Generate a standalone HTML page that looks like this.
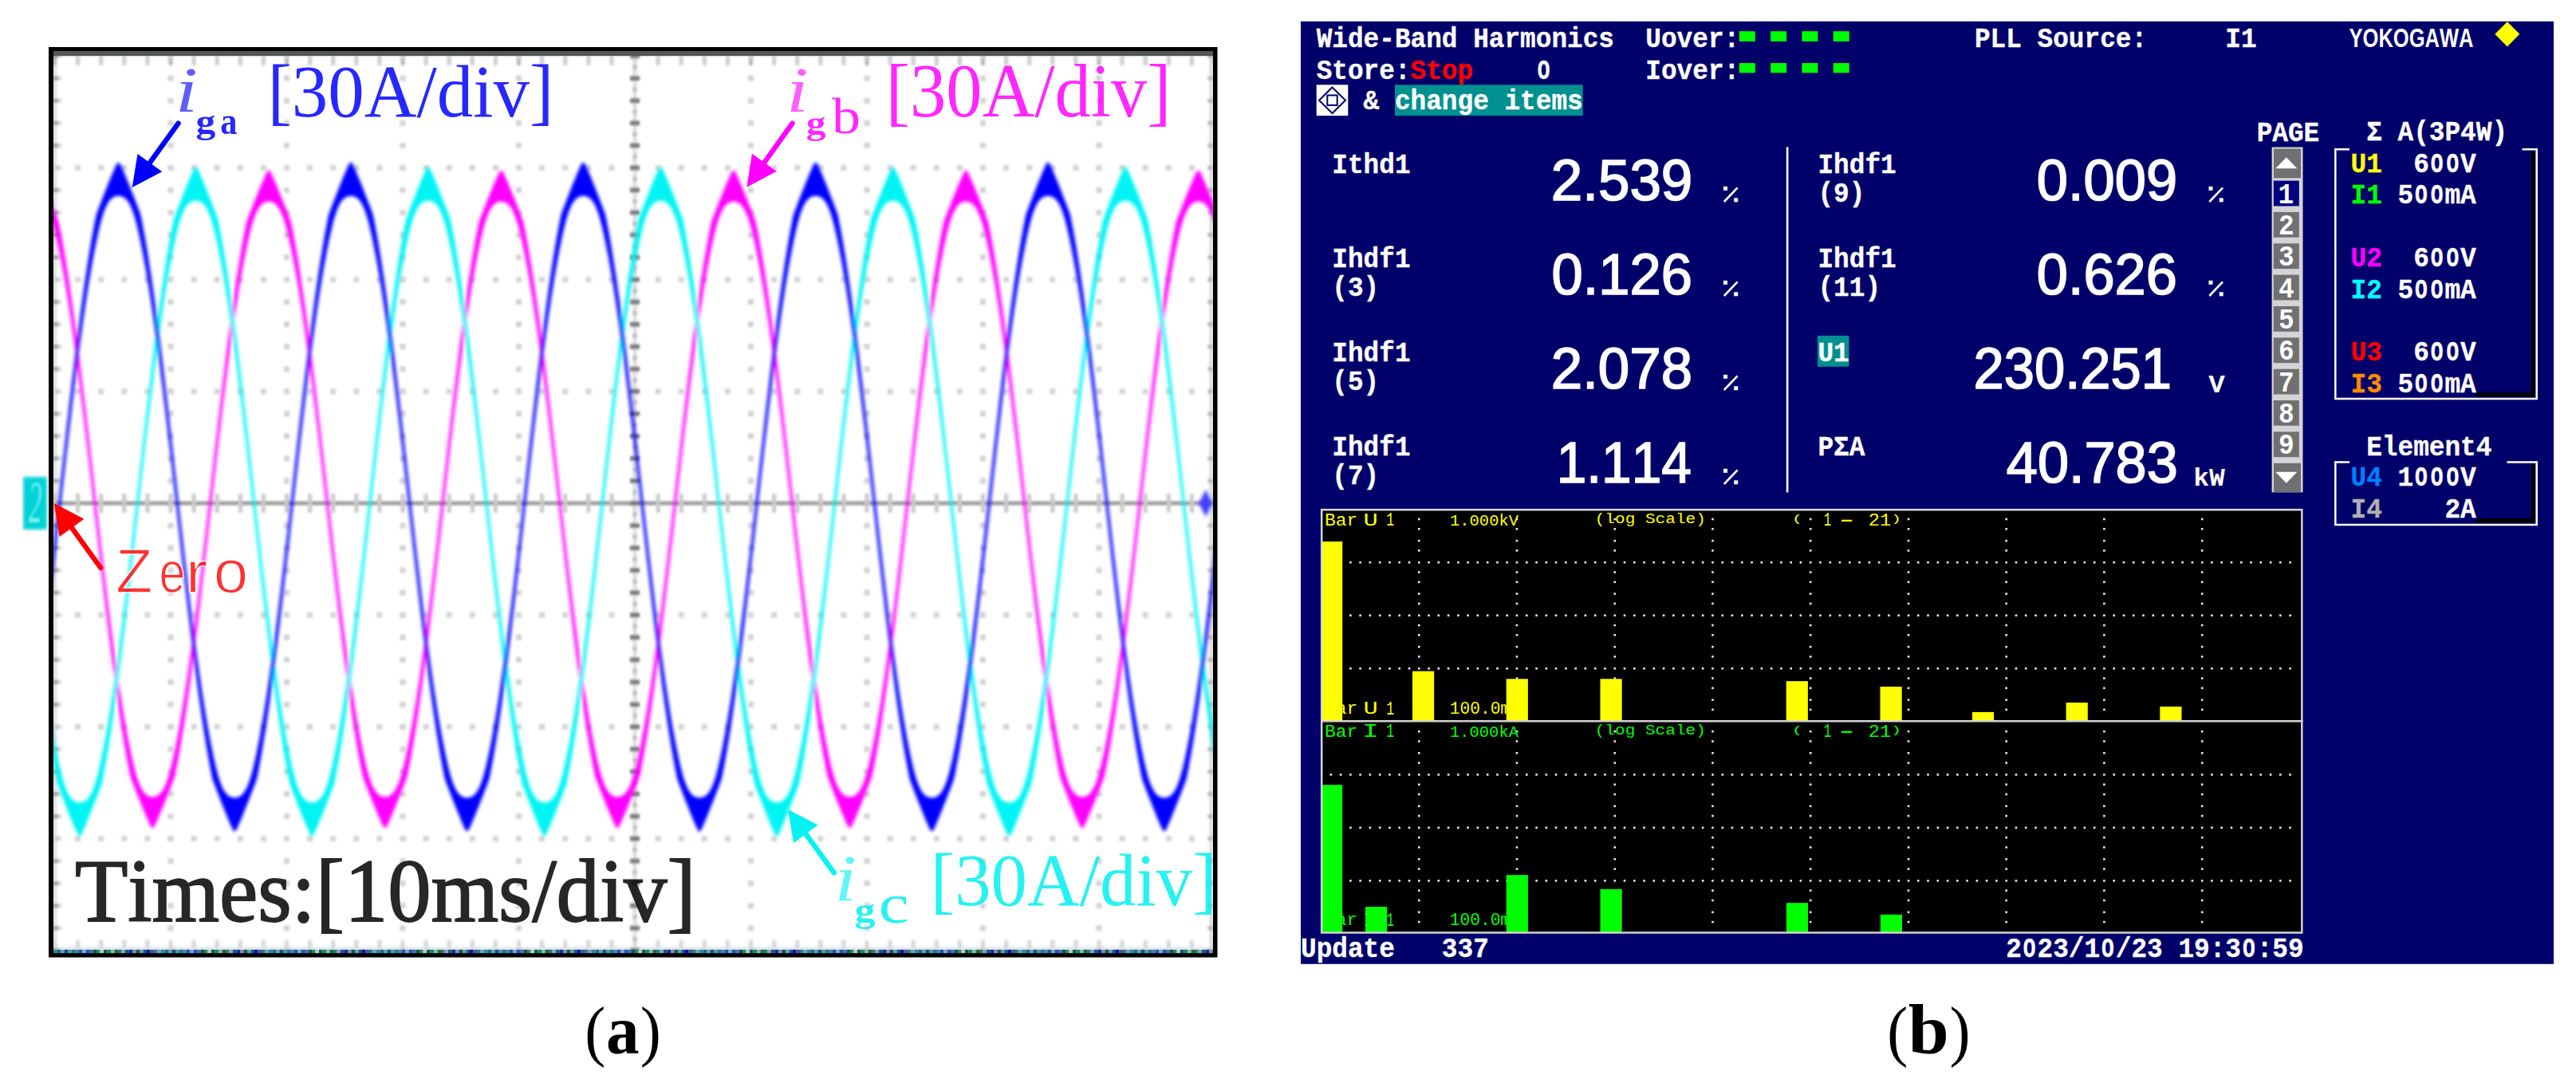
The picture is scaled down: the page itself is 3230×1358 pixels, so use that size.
<!DOCTYPE html>
<html><head><meta charset="utf-8"><title>figure</title>
<style>html,body{margin:0;padding:0;background:#fff}svg{display:block}text{font-kerning:none}</style></head><body>
<svg width="3230" height="1358" viewBox="0 0 3230 1358">
<defs><filter id="b2" x="-2%" y="-2%" width="104%" height="104%"><feGaussianBlur stdDeviation="2.2"/></filter><filter id="b1" x="-2%" y="-2%" width="104%" height="104%"><feGaussianBlur stdDeviation="1.4"/></filter><filter id="b3" x="-5%" y="-5%" width="110%" height="110%"><feGaussianBlur stdDeviation="0.7"/></filter><clipPath id="scope"><rect x="67" y="64" width="1454" height="1131"/></clipPath></defs>
<rect width="3230" height="1358" fill="#fff"/>
<g id="scopepanel">
<rect x="61" y="59" width="1465.5" height="1141.5" fill="#000"/>
<rect x="67" y="64" width="1454" height="1131" fill="#fff"/>
<g clip-path="url(#scope)"><g filter="url(#b1)"><rect x="60" y="1187.5" width="1470" height="4" fill="#dbe6ec"/><rect x="66" y="64" width="5.5" height="1131" fill="#e2e4e4"/><rect x="1516.5" y="64" width="5" height="1131" fill="#dcdcdc"/><rect x="66.0" y="70" width="5" height="12" fill="#b4b4b4"/><rect x="66.0" y="1179" width="5" height="10" fill="#d6d6d6"/><rect x="95.1" y="70" width="5" height="12" fill="#cccccc"/><rect x="95.1" y="1179" width="5" height="10" fill="#d6d6d6"/><rect x="124.2" y="70" width="5" height="12" fill="#cccccc"/><rect x="124.2" y="1179" width="5" height="10" fill="#d6d6d6"/><rect x="153.3" y="70" width="5" height="12" fill="#cccccc"/><rect x="153.3" y="1179" width="5" height="10" fill="#d6d6d6"/><rect x="182.4" y="70" width="5" height="12" fill="#cccccc"/><rect x="182.4" y="1179" width="5" height="10" fill="#d6d6d6"/><rect x="211.5" y="70" width="5" height="12" fill="#b4b4b4"/><rect x="211.5" y="1179" width="5" height="10" fill="#d6d6d6"/><rect x="240.6" y="70" width="5" height="12" fill="#cccccc"/><rect x="240.6" y="1179" width="5" height="10" fill="#d6d6d6"/><rect x="269.7" y="70" width="5" height="12" fill="#cccccc"/><rect x="269.7" y="1179" width="5" height="10" fill="#d6d6d6"/><rect x="298.8" y="70" width="5" height="12" fill="#cccccc"/><rect x="298.8" y="1179" width="5" height="10" fill="#d6d6d6"/><rect x="327.9" y="70" width="5" height="12" fill="#cccccc"/><rect x="327.9" y="1179" width="5" height="10" fill="#d6d6d6"/><rect x="357.0" y="70" width="5" height="12" fill="#b4b4b4"/><rect x="357.0" y="1179" width="5" height="10" fill="#d6d6d6"/><rect x="386.1" y="70" width="5" height="12" fill="#cccccc"/><rect x="386.1" y="1179" width="5" height="10" fill="#d6d6d6"/><rect x="415.2" y="70" width="5" height="12" fill="#cccccc"/><rect x="415.2" y="1179" width="5" height="10" fill="#d6d6d6"/><rect x="444.3" y="70" width="5" height="12" fill="#cccccc"/><rect x="444.3" y="1179" width="5" height="10" fill="#d6d6d6"/><rect x="473.4" y="70" width="5" height="12" fill="#cccccc"/><rect x="473.4" y="1179" width="5" height="10" fill="#d6d6d6"/><rect x="502.5" y="70" width="5" height="12" fill="#b4b4b4"/><rect x="502.5" y="1179" width="5" height="10" fill="#d6d6d6"/><rect x="531.6" y="70" width="5" height="12" fill="#cccccc"/><rect x="531.6" y="1179" width="5" height="10" fill="#d6d6d6"/><rect x="560.7" y="70" width="5" height="12" fill="#cccccc"/><rect x="560.7" y="1179" width="5" height="10" fill="#d6d6d6"/><rect x="589.8" y="70" width="5" height="12" fill="#cccccc"/><rect x="589.8" y="1179" width="5" height="10" fill="#d6d6d6"/><rect x="618.9" y="70" width="5" height="12" fill="#cccccc"/><rect x="618.9" y="1179" width="5" height="10" fill="#d6d6d6"/><rect x="648.0" y="70" width="5" height="12" fill="#b4b4b4"/><rect x="648.0" y="1179" width="5" height="10" fill="#d6d6d6"/><rect x="677.1" y="70" width="5" height="12" fill="#cccccc"/><rect x="677.1" y="1179" width="5" height="10" fill="#d6d6d6"/><rect x="706.2" y="70" width="5" height="12" fill="#cccccc"/><rect x="706.2" y="1179" width="5" height="10" fill="#d6d6d6"/><rect x="735.3" y="70" width="5" height="12" fill="#cccccc"/><rect x="735.3" y="1179" width="5" height="10" fill="#d6d6d6"/><rect x="764.4" y="70" width="5" height="12" fill="#cccccc"/><rect x="764.4" y="1179" width="5" height="10" fill="#d6d6d6"/><rect x="793.5" y="70" width="5" height="12" fill="#b4b4b4"/><rect x="793.5" y="1179" width="5" height="10" fill="#d6d6d6"/><rect x="822.6" y="70" width="5" height="12" fill="#cccccc"/><rect x="822.6" y="1179" width="5" height="10" fill="#d6d6d6"/><rect x="851.7" y="70" width="5" height="12" fill="#cccccc"/><rect x="851.7" y="1179" width="5" height="10" fill="#d6d6d6"/><rect x="880.8" y="70" width="5" height="12" fill="#cccccc"/><rect x="880.8" y="1179" width="5" height="10" fill="#d6d6d6"/><rect x="909.9" y="70" width="5" height="12" fill="#cccccc"/><rect x="909.9" y="1179" width="5" height="10" fill="#d6d6d6"/><rect x="939.0" y="70" width="5" height="12" fill="#b4b4b4"/><rect x="939.0" y="1179" width="5" height="10" fill="#d6d6d6"/><rect x="968.1" y="70" width="5" height="12" fill="#cccccc"/><rect x="968.1" y="1179" width="5" height="10" fill="#d6d6d6"/><rect x="997.2" y="70" width="5" height="12" fill="#cccccc"/><rect x="997.2" y="1179" width="5" height="10" fill="#d6d6d6"/><rect x="1026.3" y="70" width="5" height="12" fill="#cccccc"/><rect x="1026.3" y="1179" width="5" height="10" fill="#d6d6d6"/><rect x="1055.4" y="70" width="5" height="12" fill="#cccccc"/><rect x="1055.4" y="1179" width="5" height="10" fill="#d6d6d6"/><rect x="1084.5" y="70" width="5" height="12" fill="#b4b4b4"/><rect x="1084.5" y="1179" width="5" height="10" fill="#d6d6d6"/><rect x="1113.6" y="70" width="5" height="12" fill="#cccccc"/><rect x="1113.6" y="1179" width="5" height="10" fill="#d6d6d6"/><rect x="1142.7" y="70" width="5" height="12" fill="#cccccc"/><rect x="1142.7" y="1179" width="5" height="10" fill="#d6d6d6"/><rect x="1171.8" y="70" width="5" height="12" fill="#cccccc"/><rect x="1171.8" y="1179" width="5" height="10" fill="#d6d6d6"/><rect x="1200.9" y="70" width="5" height="12" fill="#cccccc"/><rect x="1200.9" y="1179" width="5" height="10" fill="#d6d6d6"/><rect x="1230.0" y="70" width="5" height="12" fill="#b4b4b4"/><rect x="1230.0" y="1179" width="5" height="10" fill="#d6d6d6"/><rect x="1259.1" y="70" width="5" height="12" fill="#cccccc"/><rect x="1259.1" y="1179" width="5" height="10" fill="#d6d6d6"/><rect x="1288.2" y="70" width="5" height="12" fill="#cccccc"/><rect x="1288.2" y="1179" width="5" height="10" fill="#d6d6d6"/><rect x="1317.3" y="70" width="5" height="12" fill="#cccccc"/><rect x="1317.3" y="1179" width="5" height="10" fill="#d6d6d6"/><rect x="1346.4" y="70" width="5" height="12" fill="#cccccc"/><rect x="1346.4" y="1179" width="5" height="10" fill="#d6d6d6"/><rect x="1375.5" y="70" width="5" height="12" fill="#b4b4b4"/><rect x="1375.5" y="1179" width="5" height="10" fill="#d6d6d6"/><rect x="1404.6" y="70" width="5" height="12" fill="#cccccc"/><rect x="1404.6" y="1179" width="5" height="10" fill="#d6d6d6"/><rect x="1433.7" y="70" width="5" height="12" fill="#cccccc"/><rect x="1433.7" y="1179" width="5" height="10" fill="#d6d6d6"/><rect x="1462.8" y="70" width="5" height="12" fill="#cccccc"/><rect x="1462.8" y="1179" width="5" height="10" fill="#d6d6d6"/><rect x="1491.9" y="70" width="5" height="12" fill="#cccccc"/><rect x="1491.9" y="1179" width="5" height="10" fill="#d6d6d6"/><rect x="1521.0" y="70" width="5" height="12" fill="#b4b4b4"/><rect x="1521.0" y="1179" width="5" height="10" fill="#d6d6d6"/><rect x="66" y="67.7" width="7.5" height="5" fill="#9c9c9c"/><rect x="73.5" y="67.7" width="4" height="5" fill="#dcdcdc"/><rect x="1514.5" y="67.7" width="7" height="5" fill="#b4b4b4"/><rect x="66" y="95.7" width="7.5" height="5" fill="#9c9c9c"/><rect x="73.5" y="95.7" width="4" height="5" fill="#dcdcdc"/><rect x="1514.5" y="95.7" width="7" height="5" fill="#b4b4b4"/><rect x="66" y="123.8" width="7.5" height="5" fill="#9c9c9c"/><rect x="73.5" y="123.8" width="4" height="5" fill="#dcdcdc"/><rect x="1514.5" y="123.8" width="7" height="5" fill="#b4b4b4"/><rect x="66" y="151.8" width="7.5" height="5" fill="#9c9c9c"/><rect x="73.5" y="151.8" width="4" height="5" fill="#dcdcdc"/><rect x="1514.5" y="151.8" width="7" height="5" fill="#b4b4b4"/><rect x="66" y="179.9" width="7.5" height="5" fill="#9c9c9c"/><rect x="73.5" y="179.9" width="4" height="5" fill="#dcdcdc"/><rect x="1514.5" y="179.9" width="7" height="5" fill="#b4b4b4"/><rect x="66" y="207.9" width="7.5" height="5" fill="#9c9c9c"/><rect x="73.5" y="207.9" width="4" height="5" fill="#dcdcdc"/><rect x="1514.5" y="207.9" width="7" height="5" fill="#b4b4b4"/><rect x="66" y="235.9" width="7.5" height="5" fill="#9c9c9c"/><rect x="73.5" y="235.9" width="4" height="5" fill="#dcdcdc"/><rect x="1514.5" y="235.9" width="7" height="5" fill="#b4b4b4"/><rect x="66" y="264.0" width="7.5" height="5" fill="#9c9c9c"/><rect x="73.5" y="264.0" width="4" height="5" fill="#dcdcdc"/><rect x="1514.5" y="264.0" width="7" height="5" fill="#b4b4b4"/><rect x="66" y="292.0" width="7.5" height="5" fill="#9c9c9c"/><rect x="73.5" y="292.0" width="4" height="5" fill="#dcdcdc"/><rect x="1514.5" y="292.0" width="7" height="5" fill="#b4b4b4"/><rect x="66" y="320.1" width="7.5" height="5" fill="#9c9c9c"/><rect x="73.5" y="320.1" width="4" height="5" fill="#dcdcdc"/><rect x="1514.5" y="320.1" width="7" height="5" fill="#b4b4b4"/><rect x="66" y="348.1" width="7.5" height="5" fill="#9c9c9c"/><rect x="73.5" y="348.1" width="4" height="5" fill="#dcdcdc"/><rect x="1514.5" y="348.1" width="7" height="5" fill="#b4b4b4"/><rect x="66" y="376.1" width="7.5" height="5" fill="#9c9c9c"/><rect x="73.5" y="376.1" width="4" height="5" fill="#dcdcdc"/><rect x="1514.5" y="376.1" width="7" height="5" fill="#b4b4b4"/><rect x="66" y="404.2" width="7.5" height="5" fill="#9c9c9c"/><rect x="73.5" y="404.2" width="4" height="5" fill="#dcdcdc"/><rect x="1514.5" y="404.2" width="7" height="5" fill="#b4b4b4"/><rect x="66" y="432.2" width="7.5" height="5" fill="#9c9c9c"/><rect x="73.5" y="432.2" width="4" height="5" fill="#dcdcdc"/><rect x="1514.5" y="432.2" width="7" height="5" fill="#b4b4b4"/><rect x="66" y="460.3" width="7.5" height="5" fill="#9c9c9c"/><rect x="73.5" y="460.3" width="4" height="5" fill="#dcdcdc"/><rect x="1514.5" y="460.3" width="7" height="5" fill="#b4b4b4"/><rect x="66" y="488.3" width="7.5" height="5" fill="#9c9c9c"/><rect x="73.5" y="488.3" width="4" height="5" fill="#dcdcdc"/><rect x="1514.5" y="488.3" width="7" height="5" fill="#b4b4b4"/><rect x="66" y="516.3" width="7.5" height="5" fill="#9c9c9c"/><rect x="73.5" y="516.3" width="4" height="5" fill="#dcdcdc"/><rect x="1514.5" y="516.3" width="7" height="5" fill="#b4b4b4"/><rect x="66" y="544.4" width="7.5" height="5" fill="#9c9c9c"/><rect x="73.5" y="544.4" width="4" height="5" fill="#dcdcdc"/><rect x="1514.5" y="544.4" width="7" height="5" fill="#b4b4b4"/><rect x="66" y="572.4" width="7.5" height="5" fill="#9c9c9c"/><rect x="73.5" y="572.4" width="4" height="5" fill="#dcdcdc"/><rect x="1514.5" y="572.4" width="7" height="5" fill="#b4b4b4"/><rect x="66" y="600.5" width="7.5" height="5" fill="#9c9c9c"/><rect x="73.5" y="600.5" width="4" height="5" fill="#dcdcdc"/><rect x="1514.5" y="600.5" width="7" height="5" fill="#b4b4b4"/><rect x="66" y="628.5" width="7.5" height="5" fill="#9c9c9c"/><rect x="73.5" y="628.5" width="4" height="5" fill="#dcdcdc"/><rect x="1514.5" y="628.5" width="7" height="5" fill="#b4b4b4"/><rect x="66" y="656.5" width="7.5" height="5" fill="#9c9c9c"/><rect x="73.5" y="656.5" width="4" height="5" fill="#dcdcdc"/><rect x="1514.5" y="656.5" width="7" height="5" fill="#b4b4b4"/><rect x="66" y="684.6" width="7.5" height="5" fill="#9c9c9c"/><rect x="73.5" y="684.6" width="4" height="5" fill="#dcdcdc"/><rect x="1514.5" y="684.6" width="7" height="5" fill="#b4b4b4"/><rect x="66" y="712.6" width="7.5" height="5" fill="#9c9c9c"/><rect x="73.5" y="712.6" width="4" height="5" fill="#dcdcdc"/><rect x="1514.5" y="712.6" width="7" height="5" fill="#b4b4b4"/><rect x="66" y="740.7" width="7.5" height="5" fill="#9c9c9c"/><rect x="73.5" y="740.7" width="4" height="5" fill="#dcdcdc"/><rect x="1514.5" y="740.7" width="7" height="5" fill="#b4b4b4"/><rect x="66" y="768.7" width="7.5" height="5" fill="#9c9c9c"/><rect x="73.5" y="768.7" width="4" height="5" fill="#dcdcdc"/><rect x="1514.5" y="768.7" width="7" height="5" fill="#b4b4b4"/><rect x="66" y="796.7" width="7.5" height="5" fill="#9c9c9c"/><rect x="73.5" y="796.7" width="4" height="5" fill="#dcdcdc"/><rect x="1514.5" y="796.7" width="7" height="5" fill="#b4b4b4"/><rect x="66" y="824.8" width="7.5" height="5" fill="#9c9c9c"/><rect x="73.5" y="824.8" width="4" height="5" fill="#dcdcdc"/><rect x="1514.5" y="824.8" width="7" height="5" fill="#b4b4b4"/><rect x="66" y="852.8" width="7.5" height="5" fill="#9c9c9c"/><rect x="73.5" y="852.8" width="4" height="5" fill="#dcdcdc"/><rect x="1514.5" y="852.8" width="7" height="5" fill="#b4b4b4"/><rect x="66" y="880.9" width="7.5" height="5" fill="#9c9c9c"/><rect x="73.5" y="880.9" width="4" height="5" fill="#dcdcdc"/><rect x="1514.5" y="880.9" width="7" height="5" fill="#b4b4b4"/><rect x="66" y="908.9" width="7.5" height="5" fill="#9c9c9c"/><rect x="73.5" y="908.9" width="4" height="5" fill="#dcdcdc"/><rect x="1514.5" y="908.9" width="7" height="5" fill="#b4b4b4"/><rect x="66" y="936.9" width="7.5" height="5" fill="#9c9c9c"/><rect x="73.5" y="936.9" width="4" height="5" fill="#dcdcdc"/><rect x="1514.5" y="936.9" width="7" height="5" fill="#b4b4b4"/><rect x="66" y="965.0" width="7.5" height="5" fill="#9c9c9c"/><rect x="73.5" y="965.0" width="4" height="5" fill="#dcdcdc"/><rect x="1514.5" y="965.0" width="7" height="5" fill="#b4b4b4"/><rect x="66" y="993.0" width="7.5" height="5" fill="#9c9c9c"/><rect x="73.5" y="993.0" width="4" height="5" fill="#dcdcdc"/><rect x="1514.5" y="993.0" width="7" height="5" fill="#b4b4b4"/><rect x="66" y="1021.1" width="7.5" height="5" fill="#9c9c9c"/><rect x="73.5" y="1021.1" width="4" height="5" fill="#dcdcdc"/><rect x="1514.5" y="1021.1" width="7" height="5" fill="#b4b4b4"/><rect x="66" y="1049.1" width="7.5" height="5" fill="#9c9c9c"/><rect x="73.5" y="1049.1" width="4" height="5" fill="#dcdcdc"/><rect x="1514.5" y="1049.1" width="7" height="5" fill="#b4b4b4"/><rect x="66" y="1077.1" width="7.5" height="5" fill="#9c9c9c"/><rect x="73.5" y="1077.1" width="4" height="5" fill="#dcdcdc"/><rect x="1514.5" y="1077.1" width="7" height="5" fill="#b4b4b4"/><rect x="66" y="1105.2" width="7.5" height="5" fill="#9c9c9c"/><rect x="73.5" y="1105.2" width="4" height="5" fill="#dcdcdc"/><rect x="1514.5" y="1105.2" width="7" height="5" fill="#b4b4b4"/><rect x="66" y="1133.2" width="7.5" height="5" fill="#9c9c9c"/><rect x="73.5" y="1133.2" width="4" height="5" fill="#dcdcdc"/><rect x="1514.5" y="1133.2" width="7" height="5" fill="#b4b4b4"/><rect x="66" y="1161.3" width="7.5" height="5" fill="#9c9c9c"/><rect x="73.5" y="1161.3" width="4" height="5" fill="#dcdcdc"/><rect x="1514.5" y="1161.3" width="7" height="5" fill="#b4b4b4"/><rect x="66" y="1189.3" width="7.5" height="5" fill="#9c9c9c"/><rect x="73.5" y="1189.3" width="4" height="5" fill="#dcdcdc"/><rect x="1514.5" y="1189.3" width="7" height="5" fill="#b4b4b4"/><rect x="210.5" y="66.7" width="7" height="7" fill="#d2d2d2"/><rect x="210.5" y="94.7" width="7" height="7" fill="#d2d2d2"/><rect x="210.5" y="122.8" width="7" height="7" fill="#d2d2d2"/><rect x="210.5" y="150.8" width="7" height="7" fill="#d2d2d2"/><rect x="210.5" y="178.9" width="7" height="7" fill="#d2d2d2"/><rect x="210.5" y="206.9" width="7" height="7" fill="#d2d2d2"/><rect x="210.5" y="234.9" width="7" height="7" fill="#d2d2d2"/><rect x="210.5" y="263.0" width="7" height="7" fill="#d2d2d2"/><rect x="210.5" y="291.0" width="7" height="7" fill="#d2d2d2"/><rect x="210.5" y="319.1" width="7" height="7" fill="#d2d2d2"/><rect x="210.5" y="347.1" width="7" height="7" fill="#d2d2d2"/><rect x="210.5" y="375.1" width="7" height="7" fill="#d2d2d2"/><rect x="210.5" y="403.2" width="7" height="7" fill="#d2d2d2"/><rect x="210.5" y="431.2" width="7" height="7" fill="#d2d2d2"/><rect x="210.5" y="459.3" width="7" height="7" fill="#d2d2d2"/><rect x="210.5" y="487.3" width="7" height="7" fill="#d2d2d2"/><rect x="210.5" y="515.3" width="7" height="7" fill="#d2d2d2"/><rect x="210.5" y="543.4" width="7" height="7" fill="#d2d2d2"/><rect x="210.5" y="571.4" width="7" height="7" fill="#d2d2d2"/><rect x="210.5" y="599.5" width="7" height="7" fill="#d2d2d2"/><rect x="210.5" y="627.5" width="7" height="7" fill="#d2d2d2"/><rect x="210.5" y="655.5" width="7" height="7" fill="#d2d2d2"/><rect x="210.5" y="683.6" width="7" height="7" fill="#d2d2d2"/><rect x="210.5" y="711.6" width="7" height="7" fill="#d2d2d2"/><rect x="210.5" y="739.7" width="7" height="7" fill="#d2d2d2"/><rect x="210.5" y="767.7" width="7" height="7" fill="#d2d2d2"/><rect x="210.5" y="795.7" width="7" height="7" fill="#d2d2d2"/><rect x="210.5" y="823.8" width="7" height="7" fill="#d2d2d2"/><rect x="210.5" y="851.8" width="7" height="7" fill="#d2d2d2"/><rect x="210.5" y="879.9" width="7" height="7" fill="#d2d2d2"/><rect x="210.5" y="907.9" width="7" height="7" fill="#d2d2d2"/><rect x="210.5" y="935.9" width="7" height="7" fill="#d2d2d2"/><rect x="210.5" y="964.0" width="7" height="7" fill="#d2d2d2"/><rect x="210.5" y="992.0" width="7" height="7" fill="#d2d2d2"/><rect x="210.5" y="1020.1" width="7" height="7" fill="#d2d2d2"/><rect x="210.5" y="1048.1" width="7" height="7" fill="#d2d2d2"/><rect x="210.5" y="1076.1" width="7" height="7" fill="#d2d2d2"/><rect x="210.5" y="1104.2" width="7" height="7" fill="#d2d2d2"/><rect x="210.5" y="1132.2" width="7" height="7" fill="#d2d2d2"/><rect x="210.5" y="1160.3" width="7" height="7" fill="#d2d2d2"/><rect x="210.5" y="1188.3" width="7" height="7" fill="#d2d2d2"/><rect x="356.0" y="66.7" width="7" height="7" fill="#d2d2d2"/><rect x="356.0" y="94.7" width="7" height="7" fill="#d2d2d2"/><rect x="356.0" y="122.8" width="7" height="7" fill="#d2d2d2"/><rect x="356.0" y="150.8" width="7" height="7" fill="#d2d2d2"/><rect x="356.0" y="178.9" width="7" height="7" fill="#d2d2d2"/><rect x="356.0" y="206.9" width="7" height="7" fill="#d2d2d2"/><rect x="356.0" y="234.9" width="7" height="7" fill="#d2d2d2"/><rect x="356.0" y="263.0" width="7" height="7" fill="#d2d2d2"/><rect x="356.0" y="291.0" width="7" height="7" fill="#d2d2d2"/><rect x="356.0" y="319.1" width="7" height="7" fill="#d2d2d2"/><rect x="356.0" y="347.1" width="7" height="7" fill="#d2d2d2"/><rect x="356.0" y="375.1" width="7" height="7" fill="#d2d2d2"/><rect x="356.0" y="403.2" width="7" height="7" fill="#d2d2d2"/><rect x="356.0" y="431.2" width="7" height="7" fill="#d2d2d2"/><rect x="356.0" y="459.3" width="7" height="7" fill="#d2d2d2"/><rect x="356.0" y="487.3" width="7" height="7" fill="#d2d2d2"/><rect x="356.0" y="515.3" width="7" height="7" fill="#d2d2d2"/><rect x="356.0" y="543.4" width="7" height="7" fill="#d2d2d2"/><rect x="356.0" y="571.4" width="7" height="7" fill="#d2d2d2"/><rect x="356.0" y="599.5" width="7" height="7" fill="#d2d2d2"/><rect x="356.0" y="627.5" width="7" height="7" fill="#d2d2d2"/><rect x="356.0" y="655.5" width="7" height="7" fill="#d2d2d2"/><rect x="356.0" y="683.6" width="7" height="7" fill="#d2d2d2"/><rect x="356.0" y="711.6" width="7" height="7" fill="#d2d2d2"/><rect x="356.0" y="739.7" width="7" height="7" fill="#d2d2d2"/><rect x="356.0" y="767.7" width="7" height="7" fill="#d2d2d2"/><rect x="356.0" y="795.7" width="7" height="7" fill="#d2d2d2"/><rect x="356.0" y="823.8" width="7" height="7" fill="#d2d2d2"/><rect x="356.0" y="851.8" width="7" height="7" fill="#d2d2d2"/><rect x="356.0" y="879.9" width="7" height="7" fill="#d2d2d2"/><rect x="356.0" y="907.9" width="7" height="7" fill="#d2d2d2"/><rect x="356.0" y="935.9" width="7" height="7" fill="#d2d2d2"/><rect x="356.0" y="964.0" width="7" height="7" fill="#d2d2d2"/><rect x="356.0" y="992.0" width="7" height="7" fill="#d2d2d2"/><rect x="356.0" y="1020.1" width="7" height="7" fill="#d2d2d2"/><rect x="356.0" y="1048.1" width="7" height="7" fill="#d2d2d2"/><rect x="356.0" y="1076.1" width="7" height="7" fill="#d2d2d2"/><rect x="356.0" y="1104.2" width="7" height="7" fill="#d2d2d2"/><rect x="356.0" y="1132.2" width="7" height="7" fill="#d2d2d2"/><rect x="356.0" y="1160.3" width="7" height="7" fill="#d2d2d2"/><rect x="356.0" y="1188.3" width="7" height="7" fill="#d2d2d2"/><rect x="501.5" y="66.7" width="7" height="7" fill="#d2d2d2"/><rect x="501.5" y="94.7" width="7" height="7" fill="#d2d2d2"/><rect x="501.5" y="122.8" width="7" height="7" fill="#d2d2d2"/><rect x="501.5" y="150.8" width="7" height="7" fill="#d2d2d2"/><rect x="501.5" y="178.9" width="7" height="7" fill="#d2d2d2"/><rect x="501.5" y="206.9" width="7" height="7" fill="#d2d2d2"/><rect x="501.5" y="234.9" width="7" height="7" fill="#d2d2d2"/><rect x="501.5" y="263.0" width="7" height="7" fill="#d2d2d2"/><rect x="501.5" y="291.0" width="7" height="7" fill="#d2d2d2"/><rect x="501.5" y="319.1" width="7" height="7" fill="#d2d2d2"/><rect x="501.5" y="347.1" width="7" height="7" fill="#d2d2d2"/><rect x="501.5" y="375.1" width="7" height="7" fill="#d2d2d2"/><rect x="501.5" y="403.2" width="7" height="7" fill="#d2d2d2"/><rect x="501.5" y="431.2" width="7" height="7" fill="#d2d2d2"/><rect x="501.5" y="459.3" width="7" height="7" fill="#d2d2d2"/><rect x="501.5" y="487.3" width="7" height="7" fill="#d2d2d2"/><rect x="501.5" y="515.3" width="7" height="7" fill="#d2d2d2"/><rect x="501.5" y="543.4" width="7" height="7" fill="#d2d2d2"/><rect x="501.5" y="571.4" width="7" height="7" fill="#d2d2d2"/><rect x="501.5" y="599.5" width="7" height="7" fill="#d2d2d2"/><rect x="501.5" y="627.5" width="7" height="7" fill="#d2d2d2"/><rect x="501.5" y="655.5" width="7" height="7" fill="#d2d2d2"/><rect x="501.5" y="683.6" width="7" height="7" fill="#d2d2d2"/><rect x="501.5" y="711.6" width="7" height="7" fill="#d2d2d2"/><rect x="501.5" y="739.7" width="7" height="7" fill="#d2d2d2"/><rect x="501.5" y="767.7" width="7" height="7" fill="#d2d2d2"/><rect x="501.5" y="795.7" width="7" height="7" fill="#d2d2d2"/><rect x="501.5" y="823.8" width="7" height="7" fill="#d2d2d2"/><rect x="501.5" y="851.8" width="7" height="7" fill="#d2d2d2"/><rect x="501.5" y="879.9" width="7" height="7" fill="#d2d2d2"/><rect x="501.5" y="907.9" width="7" height="7" fill="#d2d2d2"/><rect x="501.5" y="935.9" width="7" height="7" fill="#d2d2d2"/><rect x="501.5" y="964.0" width="7" height="7" fill="#d2d2d2"/><rect x="501.5" y="992.0" width="7" height="7" fill="#d2d2d2"/><rect x="501.5" y="1020.1" width="7" height="7" fill="#d2d2d2"/><rect x="501.5" y="1048.1" width="7" height="7" fill="#d2d2d2"/><rect x="501.5" y="1076.1" width="7" height="7" fill="#d2d2d2"/><rect x="501.5" y="1104.2" width="7" height="7" fill="#d2d2d2"/><rect x="501.5" y="1132.2" width="7" height="7" fill="#d2d2d2"/><rect x="501.5" y="1160.3" width="7" height="7" fill="#d2d2d2"/><rect x="501.5" y="1188.3" width="7" height="7" fill="#d2d2d2"/><rect x="647.0" y="66.7" width="7" height="7" fill="#d2d2d2"/><rect x="647.0" y="94.7" width="7" height="7" fill="#d2d2d2"/><rect x="647.0" y="122.8" width="7" height="7" fill="#d2d2d2"/><rect x="647.0" y="150.8" width="7" height="7" fill="#d2d2d2"/><rect x="647.0" y="178.9" width="7" height="7" fill="#d2d2d2"/><rect x="647.0" y="206.9" width="7" height="7" fill="#d2d2d2"/><rect x="647.0" y="234.9" width="7" height="7" fill="#d2d2d2"/><rect x="647.0" y="263.0" width="7" height="7" fill="#d2d2d2"/><rect x="647.0" y="291.0" width="7" height="7" fill="#d2d2d2"/><rect x="647.0" y="319.1" width="7" height="7" fill="#d2d2d2"/><rect x="647.0" y="347.1" width="7" height="7" fill="#d2d2d2"/><rect x="647.0" y="375.1" width="7" height="7" fill="#d2d2d2"/><rect x="647.0" y="403.2" width="7" height="7" fill="#d2d2d2"/><rect x="647.0" y="431.2" width="7" height="7" fill="#d2d2d2"/><rect x="647.0" y="459.3" width="7" height="7" fill="#d2d2d2"/><rect x="647.0" y="487.3" width="7" height="7" fill="#d2d2d2"/><rect x="647.0" y="515.3" width="7" height="7" fill="#d2d2d2"/><rect x="647.0" y="543.4" width="7" height="7" fill="#d2d2d2"/><rect x="647.0" y="571.4" width="7" height="7" fill="#d2d2d2"/><rect x="647.0" y="599.5" width="7" height="7" fill="#d2d2d2"/><rect x="647.0" y="627.5" width="7" height="7" fill="#d2d2d2"/><rect x="647.0" y="655.5" width="7" height="7" fill="#d2d2d2"/><rect x="647.0" y="683.6" width="7" height="7" fill="#d2d2d2"/><rect x="647.0" y="711.6" width="7" height="7" fill="#d2d2d2"/><rect x="647.0" y="739.7" width="7" height="7" fill="#d2d2d2"/><rect x="647.0" y="767.7" width="7" height="7" fill="#d2d2d2"/><rect x="647.0" y="795.7" width="7" height="7" fill="#d2d2d2"/><rect x="647.0" y="823.8" width="7" height="7" fill="#d2d2d2"/><rect x="647.0" y="851.8" width="7" height="7" fill="#d2d2d2"/><rect x="647.0" y="879.9" width="7" height="7" fill="#d2d2d2"/><rect x="647.0" y="907.9" width="7" height="7" fill="#d2d2d2"/><rect x="647.0" y="935.9" width="7" height="7" fill="#d2d2d2"/><rect x="647.0" y="964.0" width="7" height="7" fill="#d2d2d2"/><rect x="647.0" y="992.0" width="7" height="7" fill="#d2d2d2"/><rect x="647.0" y="1020.1" width="7" height="7" fill="#d2d2d2"/><rect x="647.0" y="1048.1" width="7" height="7" fill="#d2d2d2"/><rect x="647.0" y="1076.1" width="7" height="7" fill="#d2d2d2"/><rect x="647.0" y="1104.2" width="7" height="7" fill="#d2d2d2"/><rect x="647.0" y="1132.2" width="7" height="7" fill="#d2d2d2"/><rect x="647.0" y="1160.3" width="7" height="7" fill="#d2d2d2"/><rect x="647.0" y="1188.3" width="7" height="7" fill="#d2d2d2"/><rect x="938.0" y="66.7" width="7" height="7" fill="#d2d2d2"/><rect x="938.0" y="94.7" width="7" height="7" fill="#d2d2d2"/><rect x="938.0" y="122.8" width="7" height="7" fill="#d2d2d2"/><rect x="938.0" y="150.8" width="7" height="7" fill="#d2d2d2"/><rect x="938.0" y="178.9" width="7" height="7" fill="#d2d2d2"/><rect x="938.0" y="206.9" width="7" height="7" fill="#d2d2d2"/><rect x="938.0" y="234.9" width="7" height="7" fill="#d2d2d2"/><rect x="938.0" y="263.0" width="7" height="7" fill="#d2d2d2"/><rect x="938.0" y="291.0" width="7" height="7" fill="#d2d2d2"/><rect x="938.0" y="319.1" width="7" height="7" fill="#d2d2d2"/><rect x="938.0" y="347.1" width="7" height="7" fill="#d2d2d2"/><rect x="938.0" y="375.1" width="7" height="7" fill="#d2d2d2"/><rect x="938.0" y="403.2" width="7" height="7" fill="#d2d2d2"/><rect x="938.0" y="431.2" width="7" height="7" fill="#d2d2d2"/><rect x="938.0" y="459.3" width="7" height="7" fill="#d2d2d2"/><rect x="938.0" y="487.3" width="7" height="7" fill="#d2d2d2"/><rect x="938.0" y="515.3" width="7" height="7" fill="#d2d2d2"/><rect x="938.0" y="543.4" width="7" height="7" fill="#d2d2d2"/><rect x="938.0" y="571.4" width="7" height="7" fill="#d2d2d2"/><rect x="938.0" y="599.5" width="7" height="7" fill="#d2d2d2"/><rect x="938.0" y="627.5" width="7" height="7" fill="#d2d2d2"/><rect x="938.0" y="655.5" width="7" height="7" fill="#d2d2d2"/><rect x="938.0" y="683.6" width="7" height="7" fill="#d2d2d2"/><rect x="938.0" y="711.6" width="7" height="7" fill="#d2d2d2"/><rect x="938.0" y="739.7" width="7" height="7" fill="#d2d2d2"/><rect x="938.0" y="767.7" width="7" height="7" fill="#d2d2d2"/><rect x="938.0" y="795.7" width="7" height="7" fill="#d2d2d2"/><rect x="938.0" y="823.8" width="7" height="7" fill="#d2d2d2"/><rect x="938.0" y="851.8" width="7" height="7" fill="#d2d2d2"/><rect x="938.0" y="879.9" width="7" height="7" fill="#d2d2d2"/><rect x="938.0" y="907.9" width="7" height="7" fill="#d2d2d2"/><rect x="938.0" y="935.9" width="7" height="7" fill="#d2d2d2"/><rect x="938.0" y="964.0" width="7" height="7" fill="#d2d2d2"/><rect x="938.0" y="992.0" width="7" height="7" fill="#d2d2d2"/><rect x="938.0" y="1020.1" width="7" height="7" fill="#d2d2d2"/><rect x="938.0" y="1048.1" width="7" height="7" fill="#d2d2d2"/><rect x="938.0" y="1076.1" width="7" height="7" fill="#d2d2d2"/><rect x="938.0" y="1104.2" width="7" height="7" fill="#d2d2d2"/><rect x="938.0" y="1132.2" width="7" height="7" fill="#d2d2d2"/><rect x="938.0" y="1160.3" width="7" height="7" fill="#d2d2d2"/><rect x="938.0" y="1188.3" width="7" height="7" fill="#d2d2d2"/><rect x="1083.5" y="66.7" width="7" height="7" fill="#d2d2d2"/><rect x="1083.5" y="94.7" width="7" height="7" fill="#d2d2d2"/><rect x="1083.5" y="122.8" width="7" height="7" fill="#d2d2d2"/><rect x="1083.5" y="150.8" width="7" height="7" fill="#d2d2d2"/><rect x="1083.5" y="178.9" width="7" height="7" fill="#d2d2d2"/><rect x="1083.5" y="206.9" width="7" height="7" fill="#d2d2d2"/><rect x="1083.5" y="234.9" width="7" height="7" fill="#d2d2d2"/><rect x="1083.5" y="263.0" width="7" height="7" fill="#d2d2d2"/><rect x="1083.5" y="291.0" width="7" height="7" fill="#d2d2d2"/><rect x="1083.5" y="319.1" width="7" height="7" fill="#d2d2d2"/><rect x="1083.5" y="347.1" width="7" height="7" fill="#d2d2d2"/><rect x="1083.5" y="375.1" width="7" height="7" fill="#d2d2d2"/><rect x="1083.5" y="403.2" width="7" height="7" fill="#d2d2d2"/><rect x="1083.5" y="431.2" width="7" height="7" fill="#d2d2d2"/><rect x="1083.5" y="459.3" width="7" height="7" fill="#d2d2d2"/><rect x="1083.5" y="487.3" width="7" height="7" fill="#d2d2d2"/><rect x="1083.5" y="515.3" width="7" height="7" fill="#d2d2d2"/><rect x="1083.5" y="543.4" width="7" height="7" fill="#d2d2d2"/><rect x="1083.5" y="571.4" width="7" height="7" fill="#d2d2d2"/><rect x="1083.5" y="599.5" width="7" height="7" fill="#d2d2d2"/><rect x="1083.5" y="627.5" width="7" height="7" fill="#d2d2d2"/><rect x="1083.5" y="655.5" width="7" height="7" fill="#d2d2d2"/><rect x="1083.5" y="683.6" width="7" height="7" fill="#d2d2d2"/><rect x="1083.5" y="711.6" width="7" height="7" fill="#d2d2d2"/><rect x="1083.5" y="739.7" width="7" height="7" fill="#d2d2d2"/><rect x="1083.5" y="767.7" width="7" height="7" fill="#d2d2d2"/><rect x="1083.5" y="795.7" width="7" height="7" fill="#d2d2d2"/><rect x="1083.5" y="823.8" width="7" height="7" fill="#d2d2d2"/><rect x="1083.5" y="851.8" width="7" height="7" fill="#d2d2d2"/><rect x="1083.5" y="879.9" width="7" height="7" fill="#d2d2d2"/><rect x="1083.5" y="907.9" width="7" height="7" fill="#d2d2d2"/><rect x="1083.5" y="935.9" width="7" height="7" fill="#d2d2d2"/><rect x="1083.5" y="964.0" width="7" height="7" fill="#d2d2d2"/><rect x="1083.5" y="992.0" width="7" height="7" fill="#d2d2d2"/><rect x="1083.5" y="1020.1" width="7" height="7" fill="#d2d2d2"/><rect x="1083.5" y="1048.1" width="7" height="7" fill="#d2d2d2"/><rect x="1083.5" y="1076.1" width="7" height="7" fill="#d2d2d2"/><rect x="1083.5" y="1104.2" width="7" height="7" fill="#d2d2d2"/><rect x="1083.5" y="1132.2" width="7" height="7" fill="#d2d2d2"/><rect x="1083.5" y="1160.3" width="7" height="7" fill="#d2d2d2"/><rect x="1083.5" y="1188.3" width="7" height="7" fill="#d2d2d2"/><rect x="1229.0" y="66.7" width="7" height="7" fill="#d2d2d2"/><rect x="1229.0" y="94.7" width="7" height="7" fill="#d2d2d2"/><rect x="1229.0" y="122.8" width="7" height="7" fill="#d2d2d2"/><rect x="1229.0" y="150.8" width="7" height="7" fill="#d2d2d2"/><rect x="1229.0" y="178.9" width="7" height="7" fill="#d2d2d2"/><rect x="1229.0" y="206.9" width="7" height="7" fill="#d2d2d2"/><rect x="1229.0" y="234.9" width="7" height="7" fill="#d2d2d2"/><rect x="1229.0" y="263.0" width="7" height="7" fill="#d2d2d2"/><rect x="1229.0" y="291.0" width="7" height="7" fill="#d2d2d2"/><rect x="1229.0" y="319.1" width="7" height="7" fill="#d2d2d2"/><rect x="1229.0" y="347.1" width="7" height="7" fill="#d2d2d2"/><rect x="1229.0" y="375.1" width="7" height="7" fill="#d2d2d2"/><rect x="1229.0" y="403.2" width="7" height="7" fill="#d2d2d2"/><rect x="1229.0" y="431.2" width="7" height="7" fill="#d2d2d2"/><rect x="1229.0" y="459.3" width="7" height="7" fill="#d2d2d2"/><rect x="1229.0" y="487.3" width="7" height="7" fill="#d2d2d2"/><rect x="1229.0" y="515.3" width="7" height="7" fill="#d2d2d2"/><rect x="1229.0" y="543.4" width="7" height="7" fill="#d2d2d2"/><rect x="1229.0" y="571.4" width="7" height="7" fill="#d2d2d2"/><rect x="1229.0" y="599.5" width="7" height="7" fill="#d2d2d2"/><rect x="1229.0" y="627.5" width="7" height="7" fill="#d2d2d2"/><rect x="1229.0" y="655.5" width="7" height="7" fill="#d2d2d2"/><rect x="1229.0" y="683.6" width="7" height="7" fill="#d2d2d2"/><rect x="1229.0" y="711.6" width="7" height="7" fill="#d2d2d2"/><rect x="1229.0" y="739.7" width="7" height="7" fill="#d2d2d2"/><rect x="1229.0" y="767.7" width="7" height="7" fill="#d2d2d2"/><rect x="1229.0" y="795.7" width="7" height="7" fill="#d2d2d2"/><rect x="1229.0" y="823.8" width="7" height="7" fill="#d2d2d2"/><rect x="1229.0" y="851.8" width="7" height="7" fill="#d2d2d2"/><rect x="1229.0" y="879.9" width="7" height="7" fill="#d2d2d2"/><rect x="1229.0" y="907.9" width="7" height="7" fill="#d2d2d2"/><rect x="1229.0" y="935.9" width="7" height="7" fill="#d2d2d2"/><rect x="1229.0" y="964.0" width="7" height="7" fill="#d2d2d2"/><rect x="1229.0" y="992.0" width="7" height="7" fill="#d2d2d2"/><rect x="1229.0" y="1020.1" width="7" height="7" fill="#d2d2d2"/><rect x="1229.0" y="1048.1" width="7" height="7" fill="#d2d2d2"/><rect x="1229.0" y="1076.1" width="7" height="7" fill="#d2d2d2"/><rect x="1229.0" y="1104.2" width="7" height="7" fill="#d2d2d2"/><rect x="1229.0" y="1132.2" width="7" height="7" fill="#d2d2d2"/><rect x="1229.0" y="1160.3" width="7" height="7" fill="#d2d2d2"/><rect x="1229.0" y="1188.3" width="7" height="7" fill="#d2d2d2"/><rect x="1374.5" y="66.7" width="7" height="7" fill="#d2d2d2"/><rect x="1374.5" y="94.7" width="7" height="7" fill="#d2d2d2"/><rect x="1374.5" y="122.8" width="7" height="7" fill="#d2d2d2"/><rect x="1374.5" y="150.8" width="7" height="7" fill="#d2d2d2"/><rect x="1374.5" y="178.9" width="7" height="7" fill="#d2d2d2"/><rect x="1374.5" y="206.9" width="7" height="7" fill="#d2d2d2"/><rect x="1374.5" y="234.9" width="7" height="7" fill="#d2d2d2"/><rect x="1374.5" y="263.0" width="7" height="7" fill="#d2d2d2"/><rect x="1374.5" y="291.0" width="7" height="7" fill="#d2d2d2"/><rect x="1374.5" y="319.1" width="7" height="7" fill="#d2d2d2"/><rect x="1374.5" y="347.1" width="7" height="7" fill="#d2d2d2"/><rect x="1374.5" y="375.1" width="7" height="7" fill="#d2d2d2"/><rect x="1374.5" y="403.2" width="7" height="7" fill="#d2d2d2"/><rect x="1374.5" y="431.2" width="7" height="7" fill="#d2d2d2"/><rect x="1374.5" y="459.3" width="7" height="7" fill="#d2d2d2"/><rect x="1374.5" y="487.3" width="7" height="7" fill="#d2d2d2"/><rect x="1374.5" y="515.3" width="7" height="7" fill="#d2d2d2"/><rect x="1374.5" y="543.4" width="7" height="7" fill="#d2d2d2"/><rect x="1374.5" y="571.4" width="7" height="7" fill="#d2d2d2"/><rect x="1374.5" y="599.5" width="7" height="7" fill="#d2d2d2"/><rect x="1374.5" y="627.5" width="7" height="7" fill="#d2d2d2"/><rect x="1374.5" y="655.5" width="7" height="7" fill="#d2d2d2"/><rect x="1374.5" y="683.6" width="7" height="7" fill="#d2d2d2"/><rect x="1374.5" y="711.6" width="7" height="7" fill="#d2d2d2"/><rect x="1374.5" y="739.7" width="7" height="7" fill="#d2d2d2"/><rect x="1374.5" y="767.7" width="7" height="7" fill="#d2d2d2"/><rect x="1374.5" y="795.7" width="7" height="7" fill="#d2d2d2"/><rect x="1374.5" y="823.8" width="7" height="7" fill="#d2d2d2"/><rect x="1374.5" y="851.8" width="7" height="7" fill="#d2d2d2"/><rect x="1374.5" y="879.9" width="7" height="7" fill="#d2d2d2"/><rect x="1374.5" y="907.9" width="7" height="7" fill="#d2d2d2"/><rect x="1374.5" y="935.9" width="7" height="7" fill="#d2d2d2"/><rect x="1374.5" y="964.0" width="7" height="7" fill="#d2d2d2"/><rect x="1374.5" y="992.0" width="7" height="7" fill="#d2d2d2"/><rect x="1374.5" y="1020.1" width="7" height="7" fill="#d2d2d2"/><rect x="1374.5" y="1048.1" width="7" height="7" fill="#d2d2d2"/><rect x="1374.5" y="1076.1" width="7" height="7" fill="#d2d2d2"/><rect x="1374.5" y="1104.2" width="7" height="7" fill="#d2d2d2"/><rect x="1374.5" y="1132.2" width="7" height="7" fill="#d2d2d2"/><rect x="1374.5" y="1160.3" width="7" height="7" fill="#d2d2d2"/><rect x="1374.5" y="1188.3" width="7" height="7" fill="#d2d2d2"/><rect x="65.0" y="206.9" width="7" height="7" fill="#d4d4d4"/><rect x="94.1" y="206.9" width="7" height="7" fill="#d4d4d4"/><rect x="123.2" y="206.9" width="7" height="7" fill="#d4d4d4"/><rect x="152.3" y="206.9" width="7" height="7" fill="#d4d4d4"/><rect x="181.4" y="206.9" width="7" height="7" fill="#d4d4d4"/><rect x="210.5" y="206.9" width="7" height="7" fill="#d4d4d4"/><rect x="239.6" y="206.9" width="7" height="7" fill="#d4d4d4"/><rect x="268.7" y="206.9" width="7" height="7" fill="#d4d4d4"/><rect x="297.8" y="206.9" width="7" height="7" fill="#d4d4d4"/><rect x="326.9" y="206.9" width="7" height="7" fill="#d4d4d4"/><rect x="356.0" y="206.9" width="7" height="7" fill="#d4d4d4"/><rect x="385.1" y="206.9" width="7" height="7" fill="#d4d4d4"/><rect x="414.2" y="206.9" width="7" height="7" fill="#d4d4d4"/><rect x="443.3" y="206.9" width="7" height="7" fill="#d4d4d4"/><rect x="472.4" y="206.9" width="7" height="7" fill="#d4d4d4"/><rect x="501.5" y="206.9" width="7" height="7" fill="#d4d4d4"/><rect x="530.6" y="206.9" width="7" height="7" fill="#d4d4d4"/><rect x="559.7" y="206.9" width="7" height="7" fill="#d4d4d4"/><rect x="588.8" y="206.9" width="7" height="7" fill="#d4d4d4"/><rect x="617.9" y="206.9" width="7" height="7" fill="#d4d4d4"/><rect x="647.0" y="206.9" width="7" height="7" fill="#d4d4d4"/><rect x="676.1" y="206.9" width="7" height="7" fill="#d4d4d4"/><rect x="705.2" y="206.9" width="7" height="7" fill="#d4d4d4"/><rect x="734.3" y="206.9" width="7" height="7" fill="#d4d4d4"/><rect x="763.4" y="206.9" width="7" height="7" fill="#d4d4d4"/><rect x="792.5" y="206.9" width="7" height="7" fill="#d4d4d4"/><rect x="821.6" y="206.9" width="7" height="7" fill="#d4d4d4"/><rect x="850.7" y="206.9" width="7" height="7" fill="#d4d4d4"/><rect x="879.8" y="206.9" width="7" height="7" fill="#d4d4d4"/><rect x="908.9" y="206.9" width="7" height="7" fill="#d4d4d4"/><rect x="938.0" y="206.9" width="7" height="7" fill="#d4d4d4"/><rect x="967.1" y="206.9" width="7" height="7" fill="#d4d4d4"/><rect x="996.2" y="206.9" width="7" height="7" fill="#d4d4d4"/><rect x="1025.3" y="206.9" width="7" height="7" fill="#d4d4d4"/><rect x="1054.4" y="206.9" width="7" height="7" fill="#d4d4d4"/><rect x="1083.5" y="206.9" width="7" height="7" fill="#d4d4d4"/><rect x="1112.6" y="206.9" width="7" height="7" fill="#d4d4d4"/><rect x="1141.7" y="206.9" width="7" height="7" fill="#d4d4d4"/><rect x="1170.8" y="206.9" width="7" height="7" fill="#d4d4d4"/><rect x="1199.9" y="206.9" width="7" height="7" fill="#d4d4d4"/><rect x="1229.0" y="206.9" width="7" height="7" fill="#d4d4d4"/><rect x="1258.1" y="206.9" width="7" height="7" fill="#d4d4d4"/><rect x="1287.2" y="206.9" width="7" height="7" fill="#d4d4d4"/><rect x="1316.3" y="206.9" width="7" height="7" fill="#d4d4d4"/><rect x="1345.4" y="206.9" width="7" height="7" fill="#d4d4d4"/><rect x="1374.5" y="206.9" width="7" height="7" fill="#d4d4d4"/><rect x="1403.6" y="206.9" width="7" height="7" fill="#d4d4d4"/><rect x="1432.7" y="206.9" width="7" height="7" fill="#d4d4d4"/><rect x="1461.8" y="206.9" width="7" height="7" fill="#d4d4d4"/><rect x="1490.9" y="206.9" width="7" height="7" fill="#d4d4d4"/><rect x="1520.0" y="206.9" width="7" height="7" fill="#d4d4d4"/><rect x="65.0" y="347.1" width="7" height="7" fill="#d4d4d4"/><rect x="94.1" y="347.1" width="7" height="7" fill="#d4d4d4"/><rect x="123.2" y="347.1" width="7" height="7" fill="#d4d4d4"/><rect x="152.3" y="347.1" width="7" height="7" fill="#d4d4d4"/><rect x="181.4" y="347.1" width="7" height="7" fill="#d4d4d4"/><rect x="210.5" y="347.1" width="7" height="7" fill="#d4d4d4"/><rect x="239.6" y="347.1" width="7" height="7" fill="#d4d4d4"/><rect x="268.7" y="347.1" width="7" height="7" fill="#d4d4d4"/><rect x="297.8" y="347.1" width="7" height="7" fill="#d4d4d4"/><rect x="326.9" y="347.1" width="7" height="7" fill="#d4d4d4"/><rect x="356.0" y="347.1" width="7" height="7" fill="#d4d4d4"/><rect x="385.1" y="347.1" width="7" height="7" fill="#d4d4d4"/><rect x="414.2" y="347.1" width="7" height="7" fill="#d4d4d4"/><rect x="443.3" y="347.1" width="7" height="7" fill="#d4d4d4"/><rect x="472.4" y="347.1" width="7" height="7" fill="#d4d4d4"/><rect x="501.5" y="347.1" width="7" height="7" fill="#d4d4d4"/><rect x="530.6" y="347.1" width="7" height="7" fill="#d4d4d4"/><rect x="559.7" y="347.1" width="7" height="7" fill="#d4d4d4"/><rect x="588.8" y="347.1" width="7" height="7" fill="#d4d4d4"/><rect x="617.9" y="347.1" width="7" height="7" fill="#d4d4d4"/><rect x="647.0" y="347.1" width="7" height="7" fill="#d4d4d4"/><rect x="676.1" y="347.1" width="7" height="7" fill="#d4d4d4"/><rect x="705.2" y="347.1" width="7" height="7" fill="#d4d4d4"/><rect x="734.3" y="347.1" width="7" height="7" fill="#d4d4d4"/><rect x="763.4" y="347.1" width="7" height="7" fill="#d4d4d4"/><rect x="792.5" y="347.1" width="7" height="7" fill="#d4d4d4"/><rect x="821.6" y="347.1" width="7" height="7" fill="#d4d4d4"/><rect x="850.7" y="347.1" width="7" height="7" fill="#d4d4d4"/><rect x="879.8" y="347.1" width="7" height="7" fill="#d4d4d4"/><rect x="908.9" y="347.1" width="7" height="7" fill="#d4d4d4"/><rect x="938.0" y="347.1" width="7" height="7" fill="#d4d4d4"/><rect x="967.1" y="347.1" width="7" height="7" fill="#d4d4d4"/><rect x="996.2" y="347.1" width="7" height="7" fill="#d4d4d4"/><rect x="1025.3" y="347.1" width="7" height="7" fill="#d4d4d4"/><rect x="1054.4" y="347.1" width="7" height="7" fill="#d4d4d4"/><rect x="1083.5" y="347.1" width="7" height="7" fill="#d4d4d4"/><rect x="1112.6" y="347.1" width="7" height="7" fill="#d4d4d4"/><rect x="1141.7" y="347.1" width="7" height="7" fill="#d4d4d4"/><rect x="1170.8" y="347.1" width="7" height="7" fill="#d4d4d4"/><rect x="1199.9" y="347.1" width="7" height="7" fill="#d4d4d4"/><rect x="1229.0" y="347.1" width="7" height="7" fill="#d4d4d4"/><rect x="1258.1" y="347.1" width="7" height="7" fill="#d4d4d4"/><rect x="1287.2" y="347.1" width="7" height="7" fill="#d4d4d4"/><rect x="1316.3" y="347.1" width="7" height="7" fill="#d4d4d4"/><rect x="1345.4" y="347.1" width="7" height="7" fill="#d4d4d4"/><rect x="1374.5" y="347.1" width="7" height="7" fill="#d4d4d4"/><rect x="1403.6" y="347.1" width="7" height="7" fill="#d4d4d4"/><rect x="1432.7" y="347.1" width="7" height="7" fill="#d4d4d4"/><rect x="1461.8" y="347.1" width="7" height="7" fill="#d4d4d4"/><rect x="1490.9" y="347.1" width="7" height="7" fill="#d4d4d4"/><rect x="1520.0" y="347.1" width="7" height="7" fill="#d4d4d4"/><rect x="65.0" y="487.3" width="7" height="7" fill="#d4d4d4"/><rect x="94.1" y="487.3" width="7" height="7" fill="#d4d4d4"/><rect x="123.2" y="487.3" width="7" height="7" fill="#d4d4d4"/><rect x="152.3" y="487.3" width="7" height="7" fill="#d4d4d4"/><rect x="181.4" y="487.3" width="7" height="7" fill="#d4d4d4"/><rect x="210.5" y="487.3" width="7" height="7" fill="#d4d4d4"/><rect x="239.6" y="487.3" width="7" height="7" fill="#d4d4d4"/><rect x="268.7" y="487.3" width="7" height="7" fill="#d4d4d4"/><rect x="297.8" y="487.3" width="7" height="7" fill="#d4d4d4"/><rect x="326.9" y="487.3" width="7" height="7" fill="#d4d4d4"/><rect x="356.0" y="487.3" width="7" height="7" fill="#d4d4d4"/><rect x="385.1" y="487.3" width="7" height="7" fill="#d4d4d4"/><rect x="414.2" y="487.3" width="7" height="7" fill="#d4d4d4"/><rect x="443.3" y="487.3" width="7" height="7" fill="#d4d4d4"/><rect x="472.4" y="487.3" width="7" height="7" fill="#d4d4d4"/><rect x="501.5" y="487.3" width="7" height="7" fill="#d4d4d4"/><rect x="530.6" y="487.3" width="7" height="7" fill="#d4d4d4"/><rect x="559.7" y="487.3" width="7" height="7" fill="#d4d4d4"/><rect x="588.8" y="487.3" width="7" height="7" fill="#d4d4d4"/><rect x="617.9" y="487.3" width="7" height="7" fill="#d4d4d4"/><rect x="647.0" y="487.3" width="7" height="7" fill="#d4d4d4"/><rect x="676.1" y="487.3" width="7" height="7" fill="#d4d4d4"/><rect x="705.2" y="487.3" width="7" height="7" fill="#d4d4d4"/><rect x="734.3" y="487.3" width="7" height="7" fill="#d4d4d4"/><rect x="763.4" y="487.3" width="7" height="7" fill="#d4d4d4"/><rect x="792.5" y="487.3" width="7" height="7" fill="#d4d4d4"/><rect x="821.6" y="487.3" width="7" height="7" fill="#d4d4d4"/><rect x="850.7" y="487.3" width="7" height="7" fill="#d4d4d4"/><rect x="879.8" y="487.3" width="7" height="7" fill="#d4d4d4"/><rect x="908.9" y="487.3" width="7" height="7" fill="#d4d4d4"/><rect x="938.0" y="487.3" width="7" height="7" fill="#d4d4d4"/><rect x="967.1" y="487.3" width="7" height="7" fill="#d4d4d4"/><rect x="996.2" y="487.3" width="7" height="7" fill="#d4d4d4"/><rect x="1025.3" y="487.3" width="7" height="7" fill="#d4d4d4"/><rect x="1054.4" y="487.3" width="7" height="7" fill="#d4d4d4"/><rect x="1083.5" y="487.3" width="7" height="7" fill="#d4d4d4"/><rect x="1112.6" y="487.3" width="7" height="7" fill="#d4d4d4"/><rect x="1141.7" y="487.3" width="7" height="7" fill="#d4d4d4"/><rect x="1170.8" y="487.3" width="7" height="7" fill="#d4d4d4"/><rect x="1199.9" y="487.3" width="7" height="7" fill="#d4d4d4"/><rect x="1229.0" y="487.3" width="7" height="7" fill="#d4d4d4"/><rect x="1258.1" y="487.3" width="7" height="7" fill="#d4d4d4"/><rect x="1287.2" y="487.3" width="7" height="7" fill="#d4d4d4"/><rect x="1316.3" y="487.3" width="7" height="7" fill="#d4d4d4"/><rect x="1345.4" y="487.3" width="7" height="7" fill="#d4d4d4"/><rect x="1374.5" y="487.3" width="7" height="7" fill="#d4d4d4"/><rect x="1403.6" y="487.3" width="7" height="7" fill="#d4d4d4"/><rect x="1432.7" y="487.3" width="7" height="7" fill="#d4d4d4"/><rect x="1461.8" y="487.3" width="7" height="7" fill="#d4d4d4"/><rect x="1490.9" y="487.3" width="7" height="7" fill="#d4d4d4"/><rect x="1520.0" y="487.3" width="7" height="7" fill="#d4d4d4"/><rect x="65.0" y="767.7" width="7" height="7" fill="#d4d4d4"/><rect x="94.1" y="767.7" width="7" height="7" fill="#d4d4d4"/><rect x="123.2" y="767.7" width="7" height="7" fill="#d4d4d4"/><rect x="152.3" y="767.7" width="7" height="7" fill="#d4d4d4"/><rect x="181.4" y="767.7" width="7" height="7" fill="#d4d4d4"/><rect x="210.5" y="767.7" width="7" height="7" fill="#d4d4d4"/><rect x="239.6" y="767.7" width="7" height="7" fill="#d4d4d4"/><rect x="268.7" y="767.7" width="7" height="7" fill="#d4d4d4"/><rect x="297.8" y="767.7" width="7" height="7" fill="#d4d4d4"/><rect x="326.9" y="767.7" width="7" height="7" fill="#d4d4d4"/><rect x="356.0" y="767.7" width="7" height="7" fill="#d4d4d4"/><rect x="385.1" y="767.7" width="7" height="7" fill="#d4d4d4"/><rect x="414.2" y="767.7" width="7" height="7" fill="#d4d4d4"/><rect x="443.3" y="767.7" width="7" height="7" fill="#d4d4d4"/><rect x="472.4" y="767.7" width="7" height="7" fill="#d4d4d4"/><rect x="501.5" y="767.7" width="7" height="7" fill="#d4d4d4"/><rect x="530.6" y="767.7" width="7" height="7" fill="#d4d4d4"/><rect x="559.7" y="767.7" width="7" height="7" fill="#d4d4d4"/><rect x="588.8" y="767.7" width="7" height="7" fill="#d4d4d4"/><rect x="617.9" y="767.7" width="7" height="7" fill="#d4d4d4"/><rect x="647.0" y="767.7" width="7" height="7" fill="#d4d4d4"/><rect x="676.1" y="767.7" width="7" height="7" fill="#d4d4d4"/><rect x="705.2" y="767.7" width="7" height="7" fill="#d4d4d4"/><rect x="734.3" y="767.7" width="7" height="7" fill="#d4d4d4"/><rect x="763.4" y="767.7" width="7" height="7" fill="#d4d4d4"/><rect x="792.5" y="767.7" width="7" height="7" fill="#d4d4d4"/><rect x="821.6" y="767.7" width="7" height="7" fill="#d4d4d4"/><rect x="850.7" y="767.7" width="7" height="7" fill="#d4d4d4"/><rect x="879.8" y="767.7" width="7" height="7" fill="#d4d4d4"/><rect x="908.9" y="767.7" width="7" height="7" fill="#d4d4d4"/><rect x="938.0" y="767.7" width="7" height="7" fill="#d4d4d4"/><rect x="967.1" y="767.7" width="7" height="7" fill="#d4d4d4"/><rect x="996.2" y="767.7" width="7" height="7" fill="#d4d4d4"/><rect x="1025.3" y="767.7" width="7" height="7" fill="#d4d4d4"/><rect x="1054.4" y="767.7" width="7" height="7" fill="#d4d4d4"/><rect x="1083.5" y="767.7" width="7" height="7" fill="#d4d4d4"/><rect x="1112.6" y="767.7" width="7" height="7" fill="#d4d4d4"/><rect x="1141.7" y="767.7" width="7" height="7" fill="#d4d4d4"/><rect x="1170.8" y="767.7" width="7" height="7" fill="#d4d4d4"/><rect x="1199.9" y="767.7" width="7" height="7" fill="#d4d4d4"/><rect x="1229.0" y="767.7" width="7" height="7" fill="#d4d4d4"/><rect x="1258.1" y="767.7" width="7" height="7" fill="#d4d4d4"/><rect x="1287.2" y="767.7" width="7" height="7" fill="#d4d4d4"/><rect x="1316.3" y="767.7" width="7" height="7" fill="#d4d4d4"/><rect x="1345.4" y="767.7" width="7" height="7" fill="#d4d4d4"/><rect x="1374.5" y="767.7" width="7" height="7" fill="#d4d4d4"/><rect x="1403.6" y="767.7" width="7" height="7" fill="#d4d4d4"/><rect x="1432.7" y="767.7" width="7" height="7" fill="#d4d4d4"/><rect x="1461.8" y="767.7" width="7" height="7" fill="#d4d4d4"/><rect x="1490.9" y="767.7" width="7" height="7" fill="#d4d4d4"/><rect x="1520.0" y="767.7" width="7" height="7" fill="#d4d4d4"/><rect x="65.0" y="907.9" width="7" height="7" fill="#d4d4d4"/><rect x="94.1" y="907.9" width="7" height="7" fill="#d4d4d4"/><rect x="123.2" y="907.9" width="7" height="7" fill="#d4d4d4"/><rect x="152.3" y="907.9" width="7" height="7" fill="#d4d4d4"/><rect x="181.4" y="907.9" width="7" height="7" fill="#d4d4d4"/><rect x="210.5" y="907.9" width="7" height="7" fill="#d4d4d4"/><rect x="239.6" y="907.9" width="7" height="7" fill="#d4d4d4"/><rect x="268.7" y="907.9" width="7" height="7" fill="#d4d4d4"/><rect x="297.8" y="907.9" width="7" height="7" fill="#d4d4d4"/><rect x="326.9" y="907.9" width="7" height="7" fill="#d4d4d4"/><rect x="356.0" y="907.9" width="7" height="7" fill="#d4d4d4"/><rect x="385.1" y="907.9" width="7" height="7" fill="#d4d4d4"/><rect x="414.2" y="907.9" width="7" height="7" fill="#d4d4d4"/><rect x="443.3" y="907.9" width="7" height="7" fill="#d4d4d4"/><rect x="472.4" y="907.9" width="7" height="7" fill="#d4d4d4"/><rect x="501.5" y="907.9" width="7" height="7" fill="#d4d4d4"/><rect x="530.6" y="907.9" width="7" height="7" fill="#d4d4d4"/><rect x="559.7" y="907.9" width="7" height="7" fill="#d4d4d4"/><rect x="588.8" y="907.9" width="7" height="7" fill="#d4d4d4"/><rect x="617.9" y="907.9" width="7" height="7" fill="#d4d4d4"/><rect x="647.0" y="907.9" width="7" height="7" fill="#d4d4d4"/><rect x="676.1" y="907.9" width="7" height="7" fill="#d4d4d4"/><rect x="705.2" y="907.9" width="7" height="7" fill="#d4d4d4"/><rect x="734.3" y="907.9" width="7" height="7" fill="#d4d4d4"/><rect x="763.4" y="907.9" width="7" height="7" fill="#d4d4d4"/><rect x="792.5" y="907.9" width="7" height="7" fill="#d4d4d4"/><rect x="821.6" y="907.9" width="7" height="7" fill="#d4d4d4"/><rect x="850.7" y="907.9" width="7" height="7" fill="#d4d4d4"/><rect x="879.8" y="907.9" width="7" height="7" fill="#d4d4d4"/><rect x="908.9" y="907.9" width="7" height="7" fill="#d4d4d4"/><rect x="938.0" y="907.9" width="7" height="7" fill="#d4d4d4"/><rect x="967.1" y="907.9" width="7" height="7" fill="#d4d4d4"/><rect x="996.2" y="907.9" width="7" height="7" fill="#d4d4d4"/><rect x="1025.3" y="907.9" width="7" height="7" fill="#d4d4d4"/><rect x="1054.4" y="907.9" width="7" height="7" fill="#d4d4d4"/><rect x="1083.5" y="907.9" width="7" height="7" fill="#d4d4d4"/><rect x="1112.6" y="907.9" width="7" height="7" fill="#d4d4d4"/><rect x="1141.7" y="907.9" width="7" height="7" fill="#d4d4d4"/><rect x="1170.8" y="907.9" width="7" height="7" fill="#d4d4d4"/><rect x="1199.9" y="907.9" width="7" height="7" fill="#d4d4d4"/><rect x="1229.0" y="907.9" width="7" height="7" fill="#d4d4d4"/><rect x="1258.1" y="907.9" width="7" height="7" fill="#d4d4d4"/><rect x="1287.2" y="907.9" width="7" height="7" fill="#d4d4d4"/><rect x="1316.3" y="907.9" width="7" height="7" fill="#d4d4d4"/><rect x="1345.4" y="907.9" width="7" height="7" fill="#d4d4d4"/><rect x="1374.5" y="907.9" width="7" height="7" fill="#d4d4d4"/><rect x="1403.6" y="907.9" width="7" height="7" fill="#d4d4d4"/><rect x="1432.7" y="907.9" width="7" height="7" fill="#d4d4d4"/><rect x="1461.8" y="907.9" width="7" height="7" fill="#d4d4d4"/><rect x="1490.9" y="907.9" width="7" height="7" fill="#d4d4d4"/><rect x="1520.0" y="907.9" width="7" height="7" fill="#d4d4d4"/><rect x="65.0" y="1048.1" width="7" height="7" fill="#d4d4d4"/><rect x="94.1" y="1048.1" width="7" height="7" fill="#d4d4d4"/><rect x="123.2" y="1048.1" width="7" height="7" fill="#d4d4d4"/><rect x="152.3" y="1048.1" width="7" height="7" fill="#d4d4d4"/><rect x="181.4" y="1048.1" width="7" height="7" fill="#d4d4d4"/><rect x="210.5" y="1048.1" width="7" height="7" fill="#d4d4d4"/><rect x="239.6" y="1048.1" width="7" height="7" fill="#d4d4d4"/><rect x="268.7" y="1048.1" width="7" height="7" fill="#d4d4d4"/><rect x="297.8" y="1048.1" width="7" height="7" fill="#d4d4d4"/><rect x="326.9" y="1048.1" width="7" height="7" fill="#d4d4d4"/><rect x="356.0" y="1048.1" width="7" height="7" fill="#d4d4d4"/><rect x="385.1" y="1048.1" width="7" height="7" fill="#d4d4d4"/><rect x="414.2" y="1048.1" width="7" height="7" fill="#d4d4d4"/><rect x="443.3" y="1048.1" width="7" height="7" fill="#d4d4d4"/><rect x="472.4" y="1048.1" width="7" height="7" fill="#d4d4d4"/><rect x="501.5" y="1048.1" width="7" height="7" fill="#d4d4d4"/><rect x="530.6" y="1048.1" width="7" height="7" fill="#d4d4d4"/><rect x="559.7" y="1048.1" width="7" height="7" fill="#d4d4d4"/><rect x="588.8" y="1048.1" width="7" height="7" fill="#d4d4d4"/><rect x="617.9" y="1048.1" width="7" height="7" fill="#d4d4d4"/><rect x="647.0" y="1048.1" width="7" height="7" fill="#d4d4d4"/><rect x="676.1" y="1048.1" width="7" height="7" fill="#d4d4d4"/><rect x="705.2" y="1048.1" width="7" height="7" fill="#d4d4d4"/><rect x="734.3" y="1048.1" width="7" height="7" fill="#d4d4d4"/><rect x="763.4" y="1048.1" width="7" height="7" fill="#d4d4d4"/><rect x="792.5" y="1048.1" width="7" height="7" fill="#d4d4d4"/><rect x="821.6" y="1048.1" width="7" height="7" fill="#d4d4d4"/><rect x="850.7" y="1048.1" width="7" height="7" fill="#d4d4d4"/><rect x="879.8" y="1048.1" width="7" height="7" fill="#d4d4d4"/><rect x="908.9" y="1048.1" width="7" height="7" fill="#d4d4d4"/><rect x="938.0" y="1048.1" width="7" height="7" fill="#d4d4d4"/><rect x="967.1" y="1048.1" width="7" height="7" fill="#d4d4d4"/><rect x="996.2" y="1048.1" width="7" height="7" fill="#d4d4d4"/><rect x="1025.3" y="1048.1" width="7" height="7" fill="#d4d4d4"/><rect x="1054.4" y="1048.1" width="7" height="7" fill="#d4d4d4"/><rect x="1083.5" y="1048.1" width="7" height="7" fill="#d4d4d4"/><rect x="1112.6" y="1048.1" width="7" height="7" fill="#d4d4d4"/><rect x="1141.7" y="1048.1" width="7" height="7" fill="#d4d4d4"/><rect x="1170.8" y="1048.1" width="7" height="7" fill="#d4d4d4"/><rect x="1199.9" y="1048.1" width="7" height="7" fill="#d4d4d4"/><rect x="1229.0" y="1048.1" width="7" height="7" fill="#d4d4d4"/><rect x="1258.1" y="1048.1" width="7" height="7" fill="#d4d4d4"/><rect x="1287.2" y="1048.1" width="7" height="7" fill="#d4d4d4"/><rect x="1316.3" y="1048.1" width="7" height="7" fill="#d4d4d4"/><rect x="1345.4" y="1048.1" width="7" height="7" fill="#d4d4d4"/><rect x="1374.5" y="1048.1" width="7" height="7" fill="#d4d4d4"/><rect x="1403.6" y="1048.1" width="7" height="7" fill="#d4d4d4"/><rect x="1432.7" y="1048.1" width="7" height="7" fill="#d4d4d4"/><rect x="1461.8" y="1048.1" width="7" height="7" fill="#d4d4d4"/><rect x="1490.9" y="1048.1" width="7" height="7" fill="#d4d4d4"/><rect x="1520.0" y="1048.1" width="7" height="7" fill="#d4d4d4"/><rect x="67" y="628.5" width="1454" height="5" fill="#9c9c9c"/><rect x="66.0" y="619.0" width="5" height="24" fill="#cacaca"/><rect x="95.1" y="619.0" width="5" height="24" fill="#cacaca"/><rect x="124.2" y="619.0" width="5" height="24" fill="#cacaca"/><rect x="153.3" y="619.0" width="5" height="24" fill="#cacaca"/><rect x="182.4" y="619.0" width="5" height="24" fill="#cacaca"/><rect x="211.5" y="619.0" width="5" height="24" fill="#cacaca"/><rect x="240.6" y="619.0" width="5" height="24" fill="#cacaca"/><rect x="269.7" y="619.0" width="5" height="24" fill="#cacaca"/><rect x="298.8" y="619.0" width="5" height="24" fill="#cacaca"/><rect x="327.9" y="619.0" width="5" height="24" fill="#cacaca"/><rect x="357.0" y="619.0" width="5" height="24" fill="#cacaca"/><rect x="386.1" y="619.0" width="5" height="24" fill="#cacaca"/><rect x="415.2" y="619.0" width="5" height="24" fill="#cacaca"/><rect x="444.3" y="619.0" width="5" height="24" fill="#cacaca"/><rect x="473.4" y="619.0" width="5" height="24" fill="#cacaca"/><rect x="502.5" y="619.0" width="5" height="24" fill="#cacaca"/><rect x="531.6" y="619.0" width="5" height="24" fill="#cacaca"/><rect x="560.7" y="619.0" width="5" height="24" fill="#cacaca"/><rect x="589.8" y="619.0" width="5" height="24" fill="#cacaca"/><rect x="618.9" y="619.0" width="5" height="24" fill="#cacaca"/><rect x="648.0" y="619.0" width="5" height="24" fill="#cacaca"/><rect x="677.1" y="619.0" width="5" height="24" fill="#cacaca"/><rect x="706.2" y="619.0" width="5" height="24" fill="#cacaca"/><rect x="735.3" y="619.0" width="5" height="24" fill="#cacaca"/><rect x="764.4" y="619.0" width="5" height="24" fill="#cacaca"/><rect x="793.5" y="619.0" width="5" height="24" fill="#cacaca"/><rect x="822.6" y="619.0" width="5" height="24" fill="#cacaca"/><rect x="851.7" y="619.0" width="5" height="24" fill="#cacaca"/><rect x="880.8" y="619.0" width="5" height="24" fill="#cacaca"/><rect x="909.9" y="619.0" width="5" height="24" fill="#cacaca"/><rect x="939.0" y="619.0" width="5" height="24" fill="#cacaca"/><rect x="968.1" y="619.0" width="5" height="24" fill="#cacaca"/><rect x="997.2" y="619.0" width="5" height="24" fill="#cacaca"/><rect x="1026.3" y="619.0" width="5" height="24" fill="#cacaca"/><rect x="1055.4" y="619.0" width="5" height="24" fill="#cacaca"/><rect x="1084.5" y="619.0" width="5" height="24" fill="#cacaca"/><rect x="1113.6" y="619.0" width="5" height="24" fill="#cacaca"/><rect x="1142.7" y="619.0" width="5" height="24" fill="#cacaca"/><rect x="1171.8" y="619.0" width="5" height="24" fill="#cacaca"/><rect x="1200.9" y="619.0" width="5" height="24" fill="#cacaca"/><rect x="1230.0" y="619.0" width="5" height="24" fill="#cacaca"/><rect x="1259.1" y="619.0" width="5" height="24" fill="#cacaca"/><rect x="1288.2" y="619.0" width="5" height="24" fill="#cacaca"/><rect x="1317.3" y="619.0" width="5" height="24" fill="#cacaca"/><rect x="1346.4" y="619.0" width="5" height="24" fill="#cacaca"/><rect x="1375.5" y="619.0" width="5" height="24" fill="#cacaca"/><rect x="1404.6" y="619.0" width="5" height="24" fill="#cacaca"/><rect x="1433.7" y="619.0" width="5" height="24" fill="#cacaca"/><rect x="1462.8" y="619.0" width="5" height="24" fill="#cacaca"/><rect x="1491.9" y="619.0" width="5" height="24" fill="#cacaca"/><rect x="1521.0" y="619.0" width="5" height="24" fill="#cacaca"/><rect x="793.5" y="64" width="5" height="1131" fill="#dedede"/><rect x="790.0" y="67.2" width="12" height="6" fill="#7c7c7c"/><rect x="793.5" y="81.7" width="5" height="5" fill="#b8b8b8"/><rect x="790.0" y="95.2" width="12" height="6" fill="#7c7c7c"/><rect x="793.5" y="109.8" width="5" height="5" fill="#b8b8b8"/><rect x="790.0" y="123.3" width="12" height="6" fill="#7c7c7c"/><rect x="793.5" y="137.8" width="5" height="5" fill="#b8b8b8"/><rect x="790.0" y="151.3" width="12" height="6" fill="#7c7c7c"/><rect x="793.5" y="165.8" width="5" height="5" fill="#b8b8b8"/><rect x="790.0" y="179.4" width="12" height="6" fill="#7c7c7c"/><rect x="793.5" y="193.9" width="5" height="5" fill="#b8b8b8"/><rect x="790.0" y="207.4" width="12" height="6" fill="#7c7c7c"/><rect x="793.5" y="221.9" width="5" height="5" fill="#b8b8b8"/><rect x="790.0" y="235.4" width="12" height="6" fill="#7c7c7c"/><rect x="793.5" y="250.0" width="5" height="5" fill="#b8b8b8"/><rect x="790.0" y="263.5" width="12" height="6" fill="#7c7c7c"/><rect x="793.5" y="278.0" width="5" height="5" fill="#b8b8b8"/><rect x="790.0" y="291.5" width="12" height="6" fill="#7c7c7c"/><rect x="793.5" y="306.0" width="5" height="5" fill="#b8b8b8"/><rect x="790.0" y="319.6" width="12" height="6" fill="#7c7c7c"/><rect x="793.5" y="334.1" width="5" height="5" fill="#b8b8b8"/><rect x="790.0" y="347.6" width="12" height="6" fill="#7c7c7c"/><rect x="793.5" y="362.1" width="5" height="5" fill="#b8b8b8"/><rect x="790.0" y="375.6" width="12" height="6" fill="#7c7c7c"/><rect x="793.5" y="390.2" width="5" height="5" fill="#b8b8b8"/><rect x="790.0" y="403.7" width="12" height="6" fill="#7c7c7c"/><rect x="793.5" y="418.2" width="5" height="5" fill="#b8b8b8"/><rect x="790.0" y="431.7" width="12" height="6" fill="#7c7c7c"/><rect x="793.5" y="446.2" width="5" height="5" fill="#b8b8b8"/><rect x="790.0" y="459.8" width="12" height="6" fill="#7c7c7c"/><rect x="793.5" y="474.3" width="5" height="5" fill="#b8b8b8"/><rect x="790.0" y="487.8" width="12" height="6" fill="#7c7c7c"/><rect x="793.5" y="502.3" width="5" height="5" fill="#b8b8b8"/><rect x="790.0" y="515.8" width="12" height="6" fill="#7c7c7c"/><rect x="793.5" y="530.4" width="5" height="5" fill="#b8b8b8"/><rect x="790.0" y="543.9" width="12" height="6" fill="#7c7c7c"/><rect x="793.5" y="558.4" width="5" height="5" fill="#b8b8b8"/><rect x="790.0" y="571.9" width="12" height="6" fill="#7c7c7c"/><rect x="793.5" y="586.4" width="5" height="5" fill="#b8b8b8"/><rect x="790.0" y="600.0" width="12" height="6" fill="#7c7c7c"/><rect x="793.5" y="614.5" width="5" height="5" fill="#b8b8b8"/><rect x="790.0" y="628.0" width="12" height="6" fill="#7c7c7c"/><rect x="793.5" y="642.5" width="5" height="5" fill="#b8b8b8"/><rect x="790.0" y="656.0" width="12" height="6" fill="#7c7c7c"/><rect x="793.5" y="670.6" width="5" height="5" fill="#b8b8b8"/><rect x="790.0" y="684.1" width="12" height="6" fill="#7c7c7c"/><rect x="793.5" y="698.6" width="5" height="5" fill="#b8b8b8"/><rect x="790.0" y="712.1" width="12" height="6" fill="#7c7c7c"/><rect x="793.5" y="726.6" width="5" height="5" fill="#b8b8b8"/><rect x="790.0" y="740.2" width="12" height="6" fill="#7c7c7c"/><rect x="793.5" y="754.7" width="5" height="5" fill="#b8b8b8"/><rect x="790.0" y="768.2" width="12" height="6" fill="#7c7c7c"/><rect x="793.5" y="782.7" width="5" height="5" fill="#b8b8b8"/><rect x="790.0" y="796.2" width="12" height="6" fill="#7c7c7c"/><rect x="793.5" y="810.8" width="5" height="5" fill="#b8b8b8"/><rect x="790.0" y="824.3" width="12" height="6" fill="#7c7c7c"/><rect x="793.5" y="838.8" width="5" height="5" fill="#b8b8b8"/><rect x="790.0" y="852.3" width="12" height="6" fill="#7c7c7c"/><rect x="793.5" y="866.8" width="5" height="5" fill="#b8b8b8"/><rect x="790.0" y="880.4" width="12" height="6" fill="#7c7c7c"/><rect x="793.5" y="894.9" width="5" height="5" fill="#b8b8b8"/><rect x="790.0" y="908.4" width="12" height="6" fill="#7c7c7c"/><rect x="793.5" y="922.9" width="5" height="5" fill="#b8b8b8"/><rect x="790.0" y="936.4" width="12" height="6" fill="#7c7c7c"/><rect x="793.5" y="951.0" width="5" height="5" fill="#b8b8b8"/><rect x="790.0" y="964.5" width="12" height="6" fill="#7c7c7c"/><rect x="793.5" y="979.0" width="5" height="5" fill="#b8b8b8"/><rect x="790.0" y="992.5" width="12" height="6" fill="#7c7c7c"/><rect x="793.5" y="1007.0" width="5" height="5" fill="#b8b8b8"/><rect x="790.0" y="1020.6" width="12" height="6" fill="#7c7c7c"/><rect x="793.5" y="1035.1" width="5" height="5" fill="#b8b8b8"/><rect x="790.0" y="1048.6" width="12" height="6" fill="#7c7c7c"/><rect x="793.5" y="1063.1" width="5" height="5" fill="#b8b8b8"/><rect x="790.0" y="1076.6" width="12" height="6" fill="#7c7c7c"/><rect x="793.5" y="1091.2" width="5" height="5" fill="#b8b8b8"/><rect x="790.0" y="1104.7" width="12" height="6" fill="#7c7c7c"/><rect x="793.5" y="1119.2" width="5" height="5" fill="#b8b8b8"/><rect x="790.0" y="1132.7" width="12" height="6" fill="#7c7c7c"/><rect x="793.5" y="1147.2" width="5" height="5" fill="#b8b8b8"/><rect x="790.0" y="1160.8" width="12" height="6" fill="#7c7c7c"/><rect x="793.5" y="1175.3" width="5" height="5" fill="#b8b8b8"/><rect x="790.0" y="1188.8" width="12" height="6" fill="#7c7c7c"/></g></g>
<rect x="67" y="64" width="1454" height="6.2" fill="#525858"/>
<defs><pattern id="bl" x="67" y="1190.8" width="135.0" height="5" patternUnits="userSpaceOnUse"><rect x="0.0" y="0" width="4.6" height="5" fill="#2e8a8a"/><rect x="4.5" y="0" width="4.6" height="5" fill="#1a6a90"/><rect x="9.0" y="0" width="4.6" height="5" fill="#6a9cc0"/><rect x="13.5" y="0" width="4.6" height="5" fill="#1c4a8c"/><rect x="18.0" y="0" width="4.6" height="5" fill="#4a9a98"/><rect x="22.5" y="0" width="4.6" height="5" fill="#1a7a8a"/><rect x="27.0" y="0" width="4.6" height="5" fill="#4a80b8"/><rect x="31.5" y="0" width="4.6" height="5" fill="#1c56a0"/><rect x="36.0" y="0" width="4.6" height="5" fill="#8aa0d8"/><rect x="40.5" y="0" width="4.6" height="5" fill="#1a5cb0"/><rect x="45.0" y="0" width="4.6" height="5" fill="#5a64c0"/><rect x="49.5" y="0" width="4.6" height="5" fill="#0a5a44"/><rect x="54.0" y="0" width="4.6" height="5" fill="#1c8a78"/><rect x="58.5" y="0" width="4.6" height="5" fill="#c8c8b8"/><rect x="63.0" y="0" width="4.6" height="5" fill="#0a5a60"/><rect x="67.5" y="0" width="4.6" height="5" fill="#128a60"/><rect x="72.0" y="0" width="4.6" height="5" fill="#7ac0b0"/><rect x="76.5" y="0" width="4.6" height="5" fill="#3a5a40"/><rect x="81.0" y="0" width="4.6" height="5" fill="#0e8a60"/><rect x="85.5" y="0" width="4.6" height="5" fill="#9a90e0"/><rect x="90.0" y="0" width="4.6" height="5" fill="#1a5a6a"/><rect x="94.5" y="0" width="4.6" height="5" fill="#0a2ab0"/><rect x="99.0" y="0" width="4.6" height="5" fill="#8a8aa0"/><rect x="103.5" y="0" width="4.6" height="5" fill="#1c4a6c"/><rect x="108.0" y="0" width="4.6" height="5" fill="#5aa898"/><rect x="112.5" y="0" width="4.6" height="5" fill="#1c50a0"/><rect x="117.0" y="0" width="4.6" height="5" fill="#0a14a0"/><rect x="121.5" y="0" width="4.6" height="5" fill="#4a50a8"/><rect x="126.0" y="0" width="4.6" height="5" fill="#2a8070"/><rect x="130.5" y="0" width="4.6" height="5" fill="#6aa0d0"/></pattern></defs>
<rect x="67" y="1190.8" width="1454" height="4.4" fill="url(#bl)"/>
<g clip-path="url(#scope)"><g filter="url(#b2)">
<path d="M58.0 243.3 L59.0 245.7 L60.0 248.2 L61.0 250.7 L62.0 253.2 L63.0 255.8 L64.0 258.3 L65.0 260.9 L66.0 263.4 L67.0 266.0 L68.0 268.6 L69.0 271.1 L70.0 273.7 L71.0 276.3 L72.0 279.8 L73.0 284.7 L74.0 289.7 L75.0 294.9 L76.0 300.2 L77.0 305.7 L78.0 311.3 L79.0 317.1 L80.0 323.0 L81.0 329.0 L82.0 335.2 L83.0 341.6 L84.0 348.0 L85.0 354.6 L86.0 361.3 L87.0 368.2 L88.0 375.1 L89.0 382.2 L90.0 389.4 L91.0 396.7 L92.0 404.1 L93.0 411.6 L94.0 419.2 L95.0 426.9 L96.0 434.7 L97.0 442.6 L98.0 450.6 L99.0 458.6 L100.0 466.8 L101.0 475.0 L102.0 483.3 L103.0 491.6 L104.0 500.0 L105.0 508.5 L106.0 517.0 L107.0 525.6 L108.0 534.2 L109.0 542.8 L110.0 551.5 L111.0 560.3 L112.0 569.0 L113.0 577.8 L114.0 586.6 L115.0 595.5 L116.0 604.3 L117.0 613.2 L118.0 622.0 L119.0 630.9 L120.0 639.7 L121.0 648.6 L122.0 657.4 L123.0 666.3 L124.0 675.1 L125.0 683.9 L126.0 692.6 L127.0 701.3 L128.0 710.0 L129.0 718.7 L130.0 727.3 L131.0 735.9 L132.0 744.4 L133.0 752.8 L134.0 761.2 L135.0 769.6 L136.0 777.8 L137.0 786.0 L138.0 794.2 L139.0 802.2 L140.0 810.2 L141.0 818.1 L142.0 825.8 L143.0 833.5 L144.0 841.1 L145.0 848.6 L146.0 856.0 L147.0 863.3 L148.0 870.5 L149.0 877.6 L150.0 884.5 L151.0 891.4 L152.0 898.1 L153.0 904.6 L154.0 911.1 L155.0 917.4 L156.0 923.6 L157.0 929.6 L158.0 935.5 L159.0 941.3 L160.0 946.9 L161.0 952.4 L162.0 957.7 L163.0 962.8 L164.0 967.8 L165.0 972.7 L166.0 975.9 L167.0 978.5 L168.0 981.1 L169.0 983.7 L170.0 986.3 L171.0 988.8 L172.0 991.4 L173.0 993.9 L174.0 996.5 L175.0 999.0 L176.0 1001.5 L177.0 1004.0 L178.0 1006.5 L179.0 1009.0 L180.0 1011.4 L181.0 1013.9 L182.0 1016.3 L183.0 1018.7 L184.0 1021.0 L185.0 1023.4 L186.0 1025.7 L187.0 1028.0 L188.0 1030.2 L189.0 1032.4 L190.0 1034.5 L191.0 1036.5 L192.0 1035.7 L193.0 1033.7 L194.0 1031.5 L195.0 1029.3 L196.0 1027.1 L197.0 1024.8 L198.0 1022.5 L199.0 1020.1 L200.0 1017.7 L201.0 1015.3 L202.0 1012.9 L203.0 1010.4 L204.0 1008.0 L205.0 1005.5 L206.0 1003.0 L207.0 1000.5 L208.0 998.0 L209.0 995.5 L210.0 992.9 L211.0 990.4 L212.0 987.8 L213.0 985.2 L214.0 982.7 L215.0 980.1 L216.0 977.5 L217.0 974.9 L218.0 970.7 L219.0 965.8 L220.0 960.8 L221.0 955.6 L222.0 950.2 L223.0 944.7 L224.0 939.0 L225.0 933.2 L226.0 927.2 L227.0 921.1 L228.0 914.9 L229.0 908.5 L230.0 902.0 L231.0 895.4 L232.0 888.6 L233.0 881.8 L234.0 874.8 L235.0 867.7 L236.0 860.4 L237.0 853.1 L238.0 845.7 L239.0 838.1 L240.0 830.5 L241.0 822.7 L242.0 814.9 L243.0 807.0 L244.0 799.0 L245.0 790.9 L246.0 782.8 L247.0 774.5 L248.0 766.2 L249.0 757.9 L250.0 749.5 L251.0 741.0 L252.0 732.4 L253.0 723.9 L254.0 715.2 L255.0 706.6 L256.0 697.9 L257.0 689.1 L258.0 680.3 L259.0 671.5 L260.0 662.7 L261.0 653.9 L262.0 645.0 L263.0 636.2 L264.0 627.3 L265.0 618.5 L266.0 609.6 L267.0 600.8 L268.0 591.9 L269.0 583.1 L270.0 574.3 L271.0 565.5 L272.0 556.8 L273.0 548.0 L274.0 539.4 L275.0 530.7 L276.0 522.1 L277.0 513.6 L278.0 505.1 L279.0 496.6 L280.0 488.3 L281.0 479.9 L282.0 471.7 L283.0 463.5 L284.0 455.4 L285.0 447.4 L286.0 439.4 L287.0 431.6 L288.0 423.8 L289.0 416.2 L290.0 408.6 L291.0 401.1 L292.0 393.8 L293.0 386.5 L294.0 379.4 L295.0 372.3 L296.0 365.4 L297.0 358.6 L298.0 352.0 L299.0 345.4 L300.0 339.0 L301.0 332.7 L302.0 326.6 L303.0 320.6 L304.0 314.7 L305.0 309.0 L306.0 303.4 L307.0 298.0 L308.0 292.8 L309.0 287.7 L310.0 282.7 L311.0 277.9 L312.0 275.3 L313.0 272.7 L314.0 270.1 L315.0 267.5 L316.0 265.0 L317.0 262.4 L318.0 259.8 L319.0 257.3 L320.0 254.8 L321.0 252.2 L322.0 249.7 L323.0 247.2 L324.0 244.8 L325.0 242.3 L326.0 239.8 L327.0 237.4 L328.0 235.0 L329.0 232.6 L330.0 230.2 L331.0 227.9 L332.0 225.6 L333.0 223.3 L334.0 221.1 L335.0 218.9 L336.0 216.9 L337.0 215.0 L338.0 216.9 L339.0 218.9 L340.0 221.1 L341.0 223.3 L342.0 225.6 L343.0 227.9 L344.0 230.2 L345.0 232.6 L346.0 235.0 L347.0 237.4 L348.0 239.8 L349.0 242.3 L350.0 244.8 L351.0 247.2 L352.0 249.7 L353.0 252.2 L354.0 254.8 L355.0 257.3 L356.0 259.8 L357.0 262.4 L358.0 265.0 L359.0 267.5 L360.0 270.1 L361.0 272.7 L362.0 275.3 L363.0 277.9 L364.0 282.7 L365.0 287.7 L366.0 292.8 L367.0 298.0 L368.0 303.4 L369.0 309.0 L370.0 314.7 L371.0 320.6 L372.0 326.6 L373.0 332.7 L374.0 339.0 L375.0 345.4 L376.0 352.0 L377.0 358.6 L378.0 365.4 L379.0 372.3 L380.0 379.4 L381.0 386.5 L382.0 393.8 L383.0 401.1 L384.0 408.6 L385.0 416.2 L386.0 423.8 L387.0 431.6 L388.0 439.4 L389.0 447.4 L390.0 455.4 L391.0 463.5 L392.0 471.7 L393.0 479.9 L394.0 488.3 L395.0 496.6 L396.0 505.1 L397.0 513.6 L398.0 522.1 L399.0 530.7 L400.0 539.4 L401.0 548.0 L402.0 556.8 L403.0 565.5 L404.0 574.3 L405.0 583.1 L406.0 591.9 L407.0 600.8 L408.0 609.6 L409.0 618.5 L410.0 627.3 L411.0 636.2 L412.0 645.0 L413.0 653.9 L414.0 662.7 L415.0 671.5 L416.0 680.3 L417.0 689.1 L418.0 697.9 L419.0 706.6 L420.0 715.2 L421.0 723.9 L422.0 732.4 L423.0 741.0 L424.0 749.5 L425.0 757.9 L426.0 766.2 L427.0 774.5 L428.0 782.8 L429.0 790.9 L430.0 799.0 L431.0 807.0 L432.0 814.9 L433.0 822.7 L434.0 830.5 L435.0 838.1 L436.0 845.7 L437.0 853.1 L438.0 860.4 L439.0 867.7 L440.0 874.8 L441.0 881.8 L442.0 888.6 L443.0 895.4 L444.0 902.0 L445.0 908.5 L446.0 914.9 L447.0 921.1 L448.0 927.2 L449.0 933.2 L450.0 939.0 L451.0 944.7 L452.0 950.2 L453.0 955.6 L454.0 960.8 L455.0 965.8 L456.0 970.7 L457.0 974.9 L458.0 977.5 L459.0 980.1 L460.0 982.7 L461.0 985.2 L462.0 987.8 L463.0 990.4 L464.0 992.9 L465.0 995.5 L466.0 998.0 L467.0 1000.5 L468.0 1003.0 L469.0 1005.5 L470.0 1008.0 L471.0 1010.4 L472.0 1012.9 L473.0 1015.3 L474.0 1017.7 L475.0 1020.1 L476.0 1022.5 L477.0 1024.8 L478.0 1027.1 L479.0 1029.3 L480.0 1031.5 L481.0 1033.7 L482.0 1035.7 L483.0 1036.5 L484.0 1034.5 L485.0 1032.4 L486.0 1030.2 L487.0 1028.0 L488.0 1025.7 L489.0 1023.4 L490.0 1021.0 L491.0 1018.7 L492.0 1016.3 L493.0 1013.9 L494.0 1011.4 L495.0 1009.0 L496.0 1006.5 L497.0 1004.0 L498.0 1001.5 L499.0 999.0 L500.0 996.5 L501.0 993.9 L502.0 991.4 L503.0 988.8 L504.0 986.3 L505.0 983.7 L506.0 981.1 L507.0 978.5 L508.0 975.9 L509.0 972.7 L510.0 967.8 L511.0 962.8 L512.0 957.7 L513.0 952.4 L514.0 946.9 L515.0 941.3 L516.0 935.5 L517.0 929.6 L518.0 923.6 L519.0 917.4 L520.0 911.1 L521.0 904.6 L522.0 898.1 L523.0 891.4 L524.0 884.5 L525.0 877.6 L526.0 870.5 L527.0 863.3 L528.0 856.0 L529.0 848.6 L530.0 841.1 L531.0 833.5 L532.0 825.8 L533.0 818.1 L534.0 810.2 L535.0 802.2 L536.0 794.2 L537.0 786.0 L538.0 777.8 L539.0 769.6 L540.0 761.2 L541.0 752.8 L542.0 744.4 L543.0 735.9 L544.0 727.3 L545.0 718.7 L546.0 710.0 L547.0 701.3 L548.0 692.6 L549.0 683.9 L550.0 675.1 L551.0 666.3 L552.0 657.4 L553.0 648.6 L554.0 639.7 L555.0 630.9 L556.0 622.0 L557.0 613.2 L558.0 604.3 L559.0 595.5 L560.0 586.6 L561.0 577.8 L562.0 569.0 L563.0 560.3 L564.0 551.5 L565.0 542.8 L566.0 534.2 L567.0 525.6 L568.0 517.0 L569.0 508.5 L570.0 500.0 L571.0 491.6 L572.0 483.3 L573.0 475.0 L574.0 466.8 L575.0 458.6 L576.0 450.6 L577.0 442.6 L578.0 434.7 L579.0 426.9 L580.0 419.2 L581.0 411.6 L582.0 404.1 L583.0 396.7 L584.0 389.4 L585.0 382.2 L586.0 375.1 L587.0 368.2 L588.0 361.3 L589.0 354.6 L590.0 348.0 L591.0 341.6 L592.0 335.2 L593.0 329.0 L594.0 323.0 L595.0 317.1 L596.0 311.3 L597.0 305.7 L598.0 300.2 L599.0 294.9 L600.0 289.7 L601.0 284.7 L602.0 279.8 L603.0 276.3 L604.0 273.7 L605.0 271.1 L606.0 268.6 L607.0 266.0 L608.0 263.4 L609.0 260.9 L610.0 258.3 L611.0 255.8 L612.0 253.2 L613.0 250.7 L614.0 248.2 L615.0 245.7 L616.0 243.3 L617.0 240.8 L618.0 238.4 L619.0 236.0 L620.0 233.6 L621.0 231.2 L622.0 228.8 L623.0 226.5 L624.0 224.2 L625.0 222.0 L626.0 219.8 L627.0 217.7 L628.0 215.7 L629.0 216.1 L630.0 218.1 L631.0 220.2 L632.0 222.4 L633.0 224.7 L634.0 227.0 L635.0 229.3 L636.0 231.7 L637.0 234.0 L638.0 236.4 L639.0 238.9 L640.0 241.3 L641.0 243.8 L642.0 246.2 L643.0 248.7 L644.0 251.2 L645.0 253.8 L646.0 256.3 L647.0 258.8 L648.0 261.4 L649.0 263.9 L650.0 266.5 L651.0 269.1 L652.0 271.7 L653.0 274.3 L654.0 276.9 L655.0 280.8 L656.0 285.7 L657.0 290.7 L658.0 295.9 L659.0 301.3 L660.0 306.8 L661.0 312.4 L662.0 318.2 L663.0 324.2 L664.0 330.3 L665.0 336.5 L666.0 342.8 L667.0 349.3 L668.0 355.9 L669.0 362.7 L670.0 369.5 L671.0 376.5 L672.0 383.6 L673.0 390.8 L674.0 398.2 L675.0 405.6 L676.0 413.1 L677.0 420.8 L678.0 428.5 L679.0 436.3 L680.0 444.2 L681.0 452.2 L682.0 460.3 L683.0 468.4 L684.0 476.6 L685.0 484.9 L686.0 493.3 L687.0 501.7 L688.0 510.2 L689.0 518.7 L690.0 527.3 L691.0 535.9 L692.0 544.6 L693.0 553.3 L694.0 562.0 L695.0 570.8 L696.0 579.6 L697.0 588.4 L698.0 597.2 L699.0 606.1 L700.0 614.9 L701.0 623.8 L702.0 632.6 L703.0 641.5 L704.0 650.4 L705.0 659.2 L706.0 668.0 L707.0 676.8 L708.0 685.6 L709.0 694.4 L710.0 703.1 L711.0 711.8 L712.0 720.4 L713.0 729.0 L714.0 737.6 L715.0 746.1 L716.0 754.5 L717.0 762.9 L718.0 771.2 L719.0 779.5 L720.0 787.7 L721.0 795.8 L722.0 803.8 L723.0 811.8 L724.0 819.6 L725.0 827.4 L726.0 835.1 L727.0 842.7 L728.0 850.1 L729.0 857.5 L730.0 864.8 L731.0 871.9 L732.0 879.0 L733.0 885.9 L734.0 892.7 L735.0 899.4 L736.0 905.9 L737.0 912.4 L738.0 918.7 L739.0 924.8 L740.0 930.8 L741.0 936.7 L742.0 942.4 L743.0 948.0 L744.0 953.4 L745.0 958.7 L746.0 963.8 L747.0 968.8 L748.0 973.6 L749.0 976.4 L750.0 979.0 L751.0 981.6 L752.0 984.2 L753.0 986.8 L754.0 989.4 L755.0 991.9 L756.0 994.5 L757.0 997.0 L758.0 999.5 L759.0 1002.0 L760.0 1004.5 L761.0 1007.0 L762.0 1009.5 L763.0 1011.9 L764.0 1014.3 L765.0 1016.8 L766.0 1019.1 L767.0 1021.5 L768.0 1023.9 L769.0 1026.2 L770.0 1028.4 L771.0 1030.7 L772.0 1032.8 L773.0 1034.9 L774.0 1036.8 L775.0 1035.3 L776.0 1033.3 L777.0 1031.1 L778.0 1028.9 L779.0 1026.6 L780.0 1024.3 L781.0 1022.0 L782.0 1019.6 L783.0 1017.2 L784.0 1014.8 L785.0 1012.4 L786.0 1010.0 L787.0 1007.5 L788.0 1005.0 L789.0 1002.5 L790.0 1000.0 L791.0 997.5 L792.0 995.0 L793.0 992.4 L794.0 989.9 L795.0 987.3 L796.0 984.7 L797.0 982.1 L798.0 979.6 L799.0 977.0 L800.0 974.3 L801.0 969.8 L802.0 964.8 L803.0 959.8 L804.0 954.5 L805.0 949.1 L806.0 943.5 L807.0 937.8 L808.0 932.0 L809.0 926.0 L810.0 919.9 L811.0 913.6 L812.0 907.2 L813.0 900.7 L814.0 894.1 L815.0 887.3 L816.0 880.4 L817.0 873.3 L818.0 866.2 L819.0 859.0 L820.0 851.6 L821.0 844.2 L822.0 836.6 L823.0 828.9 L824.0 821.2 L825.0 813.3 L826.0 805.4 L827.0 797.4 L828.0 789.3 L829.0 781.1 L830.0 772.9 L831.0 764.6 L832.0 756.2 L833.0 747.8 L834.0 739.3 L835.0 730.7 L836.0 722.1 L837.0 713.5 L838.0 704.8 L839.0 696.1 L840.0 687.4 L841.0 678.6 L842.0 669.8 L843.0 661.0 L844.0 652.1 L845.0 643.3 L846.0 634.4 L847.0 625.6 L848.0 616.7 L849.0 607.8 L850.0 599.0 L851.0 590.2 L852.0 581.3 L853.0 572.5 L854.0 563.8 L855.0 555.0 L856.0 546.3 L857.0 537.6 L858.0 529.0 L859.0 520.4 L860.0 511.9 L861.0 503.4 L862.0 495.0 L863.0 486.6 L864.0 478.3 L865.0 470.0 L866.0 461.9 L867.0 453.8 L868.0 445.8 L869.0 437.9 L870.0 430.0 L871.0 422.3 L872.0 414.6 L873.0 407.1 L874.0 399.6 L875.0 392.3 L876.0 385.1 L877.0 377.9 L878.0 370.9 L879.0 364.0 L880.0 357.3 L881.0 350.6 L882.0 344.1 L883.0 337.7 L884.0 331.5 L885.0 325.4 L886.0 319.4 L887.0 313.6 L888.0 307.9 L889.0 302.4 L890.0 297.0 L891.0 291.7 L892.0 286.7 L893.0 281.7 L894.0 277.4 L895.0 274.8 L896.0 272.2 L897.0 269.6 L898.0 267.0 L899.0 264.4 L900.0 261.9 L901.0 259.3 L902.0 256.8 L903.0 254.3 L904.0 251.7 L905.0 249.2 L906.0 246.7 L907.0 244.3 L908.0 241.8 L909.0 239.4 L910.0 236.9 L911.0 234.5 L912.0 232.1 L913.0 229.8 L914.0 227.4 L915.0 225.1 L916.0 222.9 L917.0 220.7 L918.0 218.5 L919.0 216.5 L920.0 215.3 L921.0 217.3 L922.0 219.4 L923.0 221.5 L924.0 223.8 L925.0 226.1 L926.0 228.4 L927.0 230.7 L928.0 233.1 L929.0 235.5 L930.0 237.9 L931.0 240.3 L932.0 242.8 L933.0 245.3 L934.0 247.7 L935.0 250.2 L936.0 252.7 L937.0 255.3 L938.0 257.8 L939.0 260.3 L940.0 262.9 L941.0 265.5 L942.0 268.0 L943.0 270.6 L944.0 273.2 L945.0 275.8 L946.0 278.9 L947.0 283.7 L948.0 288.7 L949.0 293.8 L950.0 299.1 L951.0 304.5 L952.0 310.1 L953.0 315.9 L954.0 321.8 L955.0 327.8 L956.0 334.0 L957.0 340.3 L958.0 346.7 L959.0 353.3 L960.0 360.0 L961.0 366.8 L962.0 373.7 L963.0 380.8 L964.0 387.9 L965.0 395.2 L966.0 402.6 L967.0 410.1 L968.0 417.7 L969.0 425.4 L970.0 433.2 L971.0 441.0 L972.0 449.0 L973.0 457.0 L974.0 465.1 L975.0 473.3 L976.0 481.6 L977.0 489.9 L978.0 498.3 L979.0 506.8 L980.0 515.3 L981.0 523.8 L982.0 532.4 L983.0 541.1 L984.0 549.8 L985.0 558.5 L986.0 567.3 L987.0 576.1 L988.0 584.9 L989.0 593.7 L990.0 602.5 L991.0 611.4 L992.0 620.2 L993.0 629.1 L994.0 638.0 L995.0 646.8 L996.0 655.7 L997.0 664.5 L998.0 673.3 L999.0 682.1 L1000.0 690.9 L1001.0 699.6 L1002.0 708.3 L1003.0 717.0 L1004.0 725.6 L1005.0 734.2 L1006.0 742.7 L1007.0 751.2 L1008.0 759.6 L1009.0 767.9 L1010.0 776.2 L1011.0 784.4 L1012.0 792.5 L1013.0 800.6 L1014.0 808.6 L1015.0 816.5 L1016.0 824.3 L1017.0 832.0 L1018.0 839.6 L1019.0 847.2 L1020.0 854.6 L1021.0 861.9 L1022.0 869.1 L1023.0 876.2 L1024.0 883.1 L1025.0 890.0 L1026.0 896.7 L1027.0 903.3 L1028.0 909.8 L1029.0 916.2 L1030.0 922.4 L1031.0 928.4 L1032.0 934.4 L1033.0 940.1 L1034.0 945.8 L1035.0 951.3 L1036.0 956.6 L1037.0 961.8 L1038.0 966.8 L1039.0 971.7 L1040.0 975.4 L1041.0 978.0 L1042.0 980.6 L1043.0 983.2 L1044.0 985.8 L1045.0 988.3 L1046.0 990.9 L1047.0 993.4 L1048.0 996.0 L1049.0 998.5 L1050.0 1001.0 L1051.0 1003.5 L1052.0 1006.0 L1053.0 1008.5 L1054.0 1010.9 L1055.0 1013.4 L1056.0 1015.8 L1057.0 1018.2 L1058.0 1020.6 L1059.0 1022.9 L1060.0 1025.2 L1061.0 1027.5 L1062.0 1029.8 L1063.0 1032.0 L1064.0 1034.1 L1065.0 1036.1 L1066.0 1036.1 L1067.0 1034.1 L1068.0 1032.0 L1069.0 1029.8 L1070.0 1027.5 L1071.0 1025.2 L1072.0 1022.9 L1073.0 1020.6 L1074.0 1018.2 L1075.0 1015.8 L1076.0 1013.4 L1077.0 1010.9 L1078.0 1008.5 L1079.0 1006.0 L1080.0 1003.5 L1081.0 1001.0 L1082.0 998.5 L1083.0 996.0 L1084.0 993.4 L1085.0 990.9 L1086.0 988.3 L1087.0 985.8 L1088.0 983.2 L1089.0 980.6 L1090.0 978.0 L1091.0 975.4 L1092.0 971.7 L1093.0 966.8 L1094.0 961.8 L1095.0 956.6 L1096.0 951.3 L1097.0 945.8 L1098.0 940.1 L1099.0 934.4 L1100.0 928.4 L1101.0 922.4 L1102.0 916.2 L1103.0 909.8 L1104.0 903.3 L1105.0 896.7 L1106.0 890.0 L1107.0 883.1 L1108.0 876.2 L1109.0 869.1 L1110.0 861.9 L1111.0 854.6 L1112.0 847.2 L1113.0 839.6 L1114.0 832.0 L1115.0 824.3 L1116.0 816.5 L1117.0 808.6 L1118.0 800.6 L1119.0 792.5 L1120.0 784.4 L1121.0 776.2 L1122.0 767.9 L1123.0 759.6 L1124.0 751.2 L1125.0 742.7 L1126.0 734.2 L1127.0 725.6 L1128.0 717.0 L1129.0 708.3 L1130.0 699.6 L1131.0 690.9 L1132.0 682.1 L1133.0 673.3 L1134.0 664.5 L1135.0 655.7 L1136.0 646.8 L1137.0 638.0 L1138.0 629.1 L1139.0 620.2 L1140.0 611.4 L1141.0 602.5 L1142.0 593.7 L1143.0 584.9 L1144.0 576.1 L1145.0 567.3 L1146.0 558.5 L1147.0 549.8 L1148.0 541.1 L1149.0 532.4 L1150.0 523.8 L1151.0 515.3 L1152.0 506.8 L1153.0 498.3 L1154.0 489.9 L1155.0 481.6 L1156.0 473.3 L1157.0 465.1 L1158.0 457.0 L1159.0 449.0 L1160.0 441.0 L1161.0 433.2 L1162.0 425.4 L1163.0 417.7 L1164.0 410.1 L1165.0 402.6 L1166.0 395.2 L1167.0 387.9 L1168.0 380.8 L1169.0 373.7 L1170.0 366.8 L1171.0 360.0 L1172.0 353.3 L1173.0 346.7 L1174.0 340.3 L1175.0 334.0 L1176.0 327.8 L1177.0 321.8 L1178.0 315.9 L1179.0 310.1 L1180.0 304.5 L1181.0 299.1 L1182.0 293.8 L1183.0 288.7 L1184.0 283.7 L1185.0 278.9 L1186.0 275.8 L1187.0 273.2 L1188.0 270.6 L1189.0 268.0 L1190.0 265.5 L1191.0 262.9 L1192.0 260.3 L1193.0 257.8 L1194.0 255.3 L1195.0 252.7 L1196.0 250.2 L1197.0 247.7 L1198.0 245.3 L1199.0 242.8 L1200.0 240.3 L1201.0 237.9 L1202.0 235.5 L1203.0 233.1 L1204.0 230.7 L1205.0 228.4 L1206.0 226.1 L1207.0 223.8 L1208.0 221.5 L1209.0 219.4 L1210.0 217.3 L1211.0 215.3 L1212.0 216.5 L1213.0 218.5 L1214.0 220.7 L1215.0 222.9 L1216.0 225.1 L1217.0 227.4 L1218.0 229.8 L1219.0 232.1 L1220.0 234.5 L1221.0 236.9 L1222.0 239.4 L1223.0 241.8 L1224.0 244.3 L1225.0 246.7 L1226.0 249.2 L1227.0 251.7 L1228.0 254.3 L1229.0 256.8 L1230.0 259.3 L1231.0 261.9 L1232.0 264.4 L1233.0 267.0 L1234.0 269.6 L1235.0 272.2 L1236.0 274.8 L1237.0 277.4 L1238.0 281.7 L1239.0 286.7 L1240.0 291.7 L1241.0 297.0 L1242.0 302.4 L1243.0 307.9 L1244.0 313.6 L1245.0 319.4 L1246.0 325.4 L1247.0 331.5 L1248.0 337.7 L1249.0 344.1 L1250.0 350.6 L1251.0 357.3 L1252.0 364.0 L1253.0 370.9 L1254.0 377.9 L1255.0 385.1 L1256.0 392.3 L1257.0 399.6 L1258.0 407.1 L1259.0 414.6 L1260.0 422.3 L1261.0 430.0 L1262.0 437.9 L1263.0 445.8 L1264.0 453.8 L1265.0 461.9 L1266.0 470.0 L1267.0 478.3 L1268.0 486.6 L1269.0 495.0 L1270.0 503.4 L1271.0 511.9 L1272.0 520.4 L1273.0 529.0 L1274.0 537.6 L1275.0 546.3 L1276.0 555.0 L1277.0 563.8 L1278.0 572.5 L1279.0 581.3 L1280.0 590.2 L1281.0 599.0 L1282.0 607.8 L1283.0 616.7 L1284.0 625.6 L1285.0 634.4 L1286.0 643.3 L1287.0 652.1 L1288.0 661.0 L1289.0 669.8 L1290.0 678.6 L1291.0 687.4 L1292.0 696.1 L1293.0 704.8 L1294.0 713.5 L1295.0 722.1 L1296.0 730.7 L1297.0 739.3 L1298.0 747.8 L1299.0 756.2 L1300.0 764.6 L1301.0 772.9 L1302.0 781.1 L1303.0 789.3 L1304.0 797.4 L1305.0 805.4 L1306.0 813.3 L1307.0 821.2 L1308.0 828.9 L1309.0 836.6 L1310.0 844.2 L1311.0 851.6 L1312.0 859.0 L1313.0 866.2 L1314.0 873.3 L1315.0 880.4 L1316.0 887.3 L1317.0 894.1 L1318.0 900.7 L1319.0 907.2 L1320.0 913.6 L1321.0 919.9 L1322.0 926.0 L1323.0 932.0 L1324.0 937.8 L1325.0 943.5 L1326.0 949.1 L1327.0 954.5 L1328.0 959.8 L1329.0 964.8 L1330.0 969.8 L1331.0 974.3 L1332.0 977.0 L1333.0 979.6 L1334.0 982.1 L1335.0 984.7 L1336.0 987.3 L1337.0 989.9 L1338.0 992.4 L1339.0 995.0 L1340.0 997.5 L1341.0 1000.0 L1342.0 1002.5 L1343.0 1005.0 L1344.0 1007.5 L1345.0 1010.0 L1346.0 1012.4 L1347.0 1014.8 L1348.0 1017.2 L1349.0 1019.6 L1350.0 1022.0 L1351.0 1024.3 L1352.0 1026.6 L1353.0 1028.9 L1354.0 1031.1 L1355.0 1033.3 L1356.0 1035.3 L1357.0 1036.8 L1358.0 1034.9 L1359.0 1032.8 L1360.0 1030.7 L1361.0 1028.4 L1362.0 1026.2 L1363.0 1023.9 L1364.0 1021.5 L1365.0 1019.1 L1366.0 1016.8 L1367.0 1014.3 L1368.0 1011.9 L1369.0 1009.5 L1370.0 1007.0 L1371.0 1004.5 L1372.0 1002.0 L1373.0 999.5 L1374.0 997.0 L1375.0 994.5 L1376.0 991.9 L1377.0 989.4 L1378.0 986.8 L1379.0 984.2 L1380.0 981.6 L1381.0 979.0 L1382.0 976.4 L1383.0 973.6 L1384.0 968.8 L1385.0 963.8 L1386.0 958.7 L1387.0 953.4 L1388.0 948.0 L1389.0 942.4 L1390.0 936.7 L1391.0 930.8 L1392.0 924.8 L1393.0 918.7 L1394.0 912.4 L1395.0 905.9 L1396.0 899.4 L1397.0 892.7 L1398.0 885.9 L1399.0 879.0 L1400.0 871.9 L1401.0 864.8 L1402.0 857.5 L1403.0 850.1 L1404.0 842.7 L1405.0 835.1 L1406.0 827.4 L1407.0 819.6 L1408.0 811.8 L1409.0 803.8 L1410.0 795.8 L1411.0 787.7 L1412.0 779.5 L1413.0 771.2 L1414.0 762.9 L1415.0 754.5 L1416.0 746.1 L1417.0 737.6 L1418.0 729.0 L1419.0 720.4 L1420.0 711.8 L1421.0 703.1 L1422.0 694.4 L1423.0 685.6 L1424.0 676.8 L1425.0 668.0 L1426.0 659.2 L1427.0 650.4 L1428.0 641.5 L1429.0 632.6 L1430.0 623.8 L1431.0 614.9 L1432.0 606.1 L1433.0 597.2 L1434.0 588.4 L1435.0 579.6 L1436.0 570.8 L1437.0 562.0 L1438.0 553.3 L1439.0 544.6 L1440.0 535.9 L1441.0 527.3 L1442.0 518.7 L1443.0 510.2 L1444.0 501.7 L1445.0 493.3 L1446.0 484.9 L1447.0 476.6 L1448.0 468.4 L1449.0 460.3 L1450.0 452.2 L1451.0 444.2 L1452.0 436.3 L1453.0 428.5 L1454.0 420.8 L1455.0 413.1 L1456.0 405.6 L1457.0 398.2 L1458.0 390.8 L1459.0 383.6 L1460.0 376.5 L1461.0 369.5 L1462.0 362.7 L1463.0 355.9 L1464.0 349.3 L1465.0 342.8 L1466.0 336.5 L1467.0 330.3 L1468.0 324.2 L1469.0 318.2 L1470.0 312.4 L1471.0 306.8 L1472.0 301.3 L1473.0 295.9 L1474.0 290.7 L1475.0 285.7 L1476.0 280.8 L1477.0 276.9 L1478.0 274.3 L1479.0 271.7 L1480.0 269.1 L1481.0 266.5 L1482.0 263.9 L1483.0 261.4 L1484.0 258.8 L1485.0 256.3 L1486.0 253.8 L1487.0 251.2 L1488.0 248.7 L1489.0 246.2 L1490.0 243.8 L1491.0 241.3 L1492.0 238.9 L1493.0 236.4 L1494.0 234.0 L1495.0 231.7 L1496.0 229.3 L1497.0 227.0 L1498.0 224.7 L1499.0 222.4 L1500.0 220.2 L1501.0 218.1 L1502.0 216.1 L1503.0 215.7 L1504.0 217.7 L1505.0 219.8 L1506.0 222.0 L1507.0 224.2 L1508.0 226.5 L1509.0 228.8 L1510.0 231.2 L1511.0 233.6 L1512.0 236.0 L1513.0 238.4 L1514.0 240.8 L1515.0 243.3 L1516.0 245.7 L1517.0 248.2 L1518.0 250.7 L1519.0 253.2 L1520.0 255.8 L1521.0 258.3 L1522.0 260.9 L1523.0 263.4 L1524.0 266.0 L1525.0 268.6 L1526.0 271.1 L1527.0 273.7 L1528.0 276.3 L1529.0 279.8 L1530.0 284.7 L1530.0 301.1 L1529.0 296.7 L1528.0 292.4 L1527.0 288.4 L1526.0 284.5 L1525.0 281.0 L1524.0 277.6 L1523.0 274.6 L1522.0 271.7 L1521.0 269.1 L1520.0 266.7 L1519.0 264.6 L1518.0 262.6 L1517.0 260.9 L1516.0 259.3 L1515.0 257.9 L1514.0 256.7 L1513.0 255.6 L1512.0 254.7 L1511.0 253.8 L1510.0 253.2 L1509.0 252.6 L1508.0 252.1 L1507.0 251.7 L1506.0 251.4 L1505.0 251.2 L1504.0 251.1 L1503.0 251.0 L1502.0 251.0 L1501.0 251.1 L1500.0 251.2 L1499.0 251.5 L1498.0 251.8 L1497.0 252.2 L1496.0 252.7 L1495.0 253.3 L1494.0 254.0 L1493.0 254.8 L1492.0 255.8 L1491.0 256.9 L1490.0 258.2 L1489.0 259.6 L1488.0 261.2 L1487.0 263.0 L1486.0 265.0 L1485.0 267.2 L1484.0 269.6 L1483.0 272.3 L1482.0 275.2 L1481.0 278.3 L1480.0 281.7 L1479.0 285.3 L1478.0 289.2 L1477.0 293.3 L1476.0 297.5 L1475.0 301.9 L1474.0 306.5 L1473.0 311.2 L1472.0 316.1 L1471.0 321.1 L1470.0 326.3 L1469.0 331.6 L1468.0 337.0 L1467.0 342.6 L1466.0 348.3 L1465.0 354.1 L1464.0 360.1 L1463.0 366.2 L1462.0 372.4 L1461.0 378.8 L1460.0 385.3 L1459.0 391.9 L1458.0 398.6 L1457.0 405.5 L1456.0 412.4 L1455.0 419.5 L1454.0 426.7 L1453.0 434.0 L1452.0 441.4 L1451.0 448.9 L1450.0 456.4 L1449.0 464.1 L1448.0 471.9 L1447.0 479.8 L1446.0 487.7 L1445.0 495.8 L1444.0 503.9 L1443.0 512.1 L1442.0 520.3 L1441.0 528.6 L1440.0 537.0 L1439.0 545.5 L1438.0 554.0 L1437.0 562.6 L1436.0 571.2 L1435.0 579.9 L1434.0 588.6 L1433.0 597.3 L1432.0 606.1 L1431.0 614.9 L1430.0 623.8 L1429.0 632.6 L1428.0 641.5 L1427.0 650.3 L1426.0 659.0 L1425.0 667.8 L1424.0 676.5 L1423.0 685.1 L1422.0 693.7 L1421.0 702.2 L1420.0 710.7 L1419.0 719.2 L1418.0 727.5 L1417.0 735.8 L1416.0 744.0 L1415.0 752.2 L1414.0 760.3 L1413.0 768.3 L1412.0 776.2 L1411.0 784.0 L1410.0 791.7 L1409.0 799.4 L1408.0 806.9 L1407.0 814.3 L1406.0 821.7 L1405.0 828.9 L1404.0 836.0 L1403.0 843.1 L1402.0 850.0 L1401.0 856.8 L1400.0 863.4 L1399.0 870.0 L1398.0 876.4 L1397.0 882.7 L1396.0 888.9 L1395.0 894.9 L1394.0 900.8 L1393.0 906.6 L1392.0 912.2 L1391.0 917.7 L1390.0 923.1 L1389.0 928.3 L1388.0 933.4 L1387.0 938.4 L1386.0 943.1 L1385.0 947.8 L1384.0 952.3 L1383.0 956.6 L1382.0 960.8 L1381.0 964.8 L1380.0 968.6 L1379.0 972.1 L1378.0 975.3 L1377.0 978.3 L1376.0 981.1 L1375.0 983.6 L1374.0 985.9 L1373.0 988.0 L1372.0 989.9 L1371.0 991.6 L1370.0 993.1 L1369.0 994.5 L1368.0 995.7 L1367.0 996.7 L1366.0 997.6 L1365.0 998.4 L1364.0 999.0 L1363.0 999.6 L1362.0 1000.0 L1361.0 1000.4 L1360.0 1000.6 L1359.0 1000.8 L1358.0 1001.0 L1357.0 1001.0 L1356.0 1001.0 L1355.0 1000.9 L1354.0 1000.7 L1353.0 1000.4 L1352.0 1000.1 L1351.0 999.7 L1350.0 999.1 L1349.0 998.5 L1348.0 997.8 L1347.0 996.9 L1346.0 995.9 L1345.0 994.7 L1344.0 993.4 L1343.0 991.9 L1342.0 990.3 L1341.0 988.4 L1340.0 986.4 L1339.0 984.1 L1338.0 981.6 L1337.0 978.9 L1336.0 975.9 L1335.0 972.7 L1334.0 969.3 L1333.0 965.6 L1332.0 961.6 L1331.0 957.5 L1330.0 953.2 L1329.0 948.7 L1328.0 944.1 L1327.0 939.3 L1326.0 934.4 L1325.0 929.4 L1324.0 924.2 L1323.0 918.8 L1322.0 913.4 L1321.0 907.7 L1320.0 902.0 L1319.0 896.1 L1318.0 890.1 L1317.0 883.9 L1316.0 877.7 L1315.0 871.3 L1314.0 864.7 L1313.0 858.1 L1312.0 851.3 L1311.0 844.5 L1310.0 837.5 L1309.0 830.4 L1308.0 823.1 L1307.0 815.8 L1306.0 808.4 L1305.0 800.9 L1304.0 793.3 L1303.0 785.6 L1302.0 777.7 L1301.0 769.9 L1300.0 761.9 L1299.0 753.8 L1298.0 745.7 L1297.0 737.5 L1296.0 729.2 L1295.0 720.8 L1294.0 712.4 L1293.0 703.9 L1292.0 695.4 L1291.0 686.8 L1290.0 678.2 L1289.0 669.5 L1288.0 660.8 L1287.0 652.0 L1286.0 643.2 L1285.0 634.4 L1284.0 625.6 L1283.0 616.7 L1282.0 607.9 L1281.0 599.1 L1280.0 590.3 L1279.0 581.6 L1278.0 572.9 L1277.0 564.3 L1276.0 555.7 L1275.0 547.2 L1274.0 538.7 L1273.0 530.3 L1272.0 522.0 L1271.0 513.7 L1270.0 505.5 L1269.0 497.4 L1268.0 489.3 L1267.0 481.4 L1266.0 473.5 L1265.0 465.7 L1264.0 458.0 L1263.0 450.4 L1262.0 442.8 L1261.0 435.4 L1260.0 428.1 L1259.0 420.9 L1258.0 413.8 L1257.0 406.9 L1256.0 400.0 L1255.0 393.2 L1254.0 386.6 L1253.0 380.1 L1252.0 373.7 L1251.0 367.4 L1250.0 361.3 L1249.0 355.3 L1248.0 349.4 L1247.0 343.7 L1246.0 338.1 L1245.0 332.6 L1244.0 327.3 L1243.0 322.1 L1242.0 317.1 L1241.0 312.2 L1240.0 307.4 L1239.0 302.9 L1238.0 298.4 L1237.0 294.1 L1236.0 290.0 L1235.0 286.0 L1234.0 282.4 L1233.0 278.9 L1232.0 275.8 L1231.0 272.8 L1230.0 270.1 L1229.0 267.7 L1228.0 265.4 L1227.0 263.4 L1226.0 261.5 L1225.0 259.9 L1224.0 258.4 L1223.0 257.1 L1222.0 256.0 L1221.0 255.0 L1220.0 254.2 L1219.0 253.4 L1218.0 252.8 L1217.0 252.3 L1216.0 251.9 L1215.0 251.5 L1214.0 251.3 L1213.0 251.1 L1212.0 251.0 L1211.0 251.0 L1210.0 251.1 L1209.0 251.2 L1208.0 251.4 L1207.0 251.7 L1206.0 252.0 L1205.0 252.5 L1204.0 253.0 L1203.0 253.7 L1202.0 254.5 L1201.0 255.4 L1200.0 256.4 L1199.0 257.6 L1198.0 259.0 L1197.0 260.5 L1196.0 262.3 L1195.0 264.2 L1194.0 266.3 L1193.0 268.6 L1192.0 271.2 L1191.0 274.0 L1190.0 277.0 L1189.0 280.3 L1188.0 283.8 L1187.0 287.6 L1186.0 291.6 L1185.0 295.8 L1184.0 300.2 L1183.0 304.7 L1182.0 309.3 L1181.0 314.1 L1180.0 319.1 L1179.0 324.2 L1178.0 329.4 L1177.0 334.8 L1176.0 340.3 L1175.0 346.0 L1174.0 351.8 L1173.0 357.7 L1172.0 363.7 L1171.0 369.9 L1170.0 376.2 L1169.0 382.7 L1168.0 389.2 L1167.0 395.9 L1166.0 402.7 L1165.0 409.6 L1164.0 416.7 L1163.0 423.8 L1162.0 431.0 L1161.0 438.4 L1160.0 445.8 L1159.0 453.4 L1158.0 461.0 L1157.0 468.8 L1156.0 476.6 L1155.0 484.5 L1154.0 492.5 L1153.0 500.6 L1152.0 508.8 L1151.0 517.0 L1150.0 525.3 L1149.0 533.7 L1148.0 542.1 L1147.0 550.6 L1146.0 559.2 L1145.0 567.8 L1144.0 576.4 L1143.0 585.1 L1142.0 593.8 L1141.0 602.6 L1140.0 611.4 L1139.0 620.2 L1138.0 629.1 L1137.0 637.9 L1136.0 646.8 L1135.0 655.5 L1134.0 664.3 L1133.0 673.0 L1132.0 681.7 L1131.0 690.3 L1130.0 698.8 L1129.0 707.3 L1128.0 715.8 L1127.0 724.2 L1126.0 732.5 L1125.0 740.8 L1124.0 748.9 L1123.0 757.1 L1122.0 765.1 L1121.0 773.0 L1120.0 780.9 L1119.0 788.6 L1118.0 796.3 L1117.0 803.9 L1116.0 811.4 L1115.0 818.8 L1114.0 826.0 L1113.0 833.2 L1112.0 840.3 L1111.0 847.2 L1110.0 854.1 L1109.0 860.8 L1108.0 867.4 L1107.0 873.8 L1106.0 880.2 L1105.0 886.4 L1104.0 892.5 L1103.0 898.5 L1102.0 904.3 L1101.0 910.0 L1100.0 915.6 L1099.0 921.0 L1098.0 926.3 L1097.0 931.4 L1096.0 936.4 L1095.0 941.2 L1094.0 945.9 L1093.0 950.5 L1092.0 954.9 L1091.0 959.2 L1090.0 963.2 L1089.0 967.1 L1088.0 970.7 L1087.0 974.0 L1086.0 977.1 L1085.0 980.0 L1084.0 982.6 L1083.0 985.0 L1082.0 987.2 L1081.0 989.2 L1080.0 991.0 L1079.0 992.6 L1078.0 994.0 L1077.0 995.2 L1076.0 996.3 L1075.0 997.3 L1074.0 998.1 L1073.0 998.8 L1072.0 999.4 L1071.0 999.9 L1070.0 1000.2 L1069.0 1000.5 L1068.0 1000.8 L1067.0 1000.9 L1066.0 1001.0 L1065.0 1001.0 L1064.0 1000.9 L1063.0 1000.8 L1062.0 1000.5 L1061.0 1000.2 L1060.0 999.9 L1059.0 999.4 L1058.0 998.8 L1057.0 998.1 L1056.0 997.3 L1055.0 996.3 L1054.0 995.2 L1053.0 994.0 L1052.0 992.6 L1051.0 991.0 L1050.0 989.2 L1049.0 987.2 L1048.0 985.0 L1047.0 982.6 L1046.0 980.0 L1045.0 977.1 L1044.0 974.0 L1043.0 970.7 L1042.0 967.1 L1041.0 963.2 L1040.0 959.2 L1039.0 954.9 L1038.0 950.5 L1037.0 945.9 L1036.0 941.2 L1035.0 936.4 L1034.0 931.4 L1033.0 926.3 L1032.0 921.0 L1031.0 915.6 L1030.0 910.0 L1029.0 904.3 L1028.0 898.5 L1027.0 892.5 L1026.0 886.4 L1025.0 880.2 L1024.0 873.8 L1023.0 867.4 L1022.0 860.8 L1021.0 854.1 L1020.0 847.2 L1019.0 840.3 L1018.0 833.2 L1017.0 826.0 L1016.0 818.8 L1015.0 811.4 L1014.0 803.9 L1013.0 796.3 L1012.0 788.6 L1011.0 780.9 L1010.0 773.0 L1009.0 765.1 L1008.0 757.1 L1007.0 748.9 L1006.0 740.8 L1005.0 732.5 L1004.0 724.2 L1003.0 715.8 L1002.0 707.3 L1001.0 698.8 L1000.0 690.3 L999.0 681.7 L998.0 673.0 L997.0 664.3 L996.0 655.5 L995.0 646.8 L994.0 637.9 L993.0 629.1 L992.0 620.2 L991.0 611.4 L990.0 602.6 L989.0 593.8 L988.0 585.1 L987.0 576.4 L986.0 567.8 L985.0 559.2 L984.0 550.6 L983.0 542.1 L982.0 533.7 L981.0 525.3 L980.0 517.0 L979.0 508.8 L978.0 500.6 L977.0 492.5 L976.0 484.5 L975.0 476.6 L974.0 468.8 L973.0 461.0 L972.0 453.4 L971.0 445.8 L970.0 438.4 L969.0 431.0 L968.0 423.8 L967.0 416.7 L966.0 409.6 L965.0 402.7 L964.0 395.9 L963.0 389.2 L962.0 382.7 L961.0 376.2 L960.0 369.9 L959.0 363.7 L958.0 357.7 L957.0 351.8 L956.0 346.0 L955.0 340.3 L954.0 334.8 L953.0 329.4 L952.0 324.2 L951.0 319.1 L950.0 314.1 L949.0 309.3 L948.0 304.7 L947.0 300.2 L946.0 295.8 L945.0 291.6 L944.0 287.6 L943.0 283.8 L942.0 280.3 L941.0 277.0 L940.0 274.0 L939.0 271.2 L938.0 268.6 L937.0 266.3 L936.0 264.2 L935.0 262.3 L934.0 260.5 L933.0 259.0 L932.0 257.6 L931.0 256.4 L930.0 255.4 L929.0 254.5 L928.0 253.7 L927.0 253.0 L926.0 252.5 L925.0 252.0 L924.0 251.7 L923.0 251.4 L922.0 251.2 L921.0 251.1 L920.0 251.0 L919.0 251.0 L918.0 251.1 L917.0 251.3 L916.0 251.5 L915.0 251.9 L914.0 252.3 L913.0 252.8 L912.0 253.4 L911.0 254.2 L910.0 255.0 L909.0 256.0 L908.0 257.1 L907.0 258.4 L906.0 259.9 L905.0 261.5 L904.0 263.4 L903.0 265.4 L902.0 267.7 L901.0 270.1 L900.0 272.8 L899.0 275.8 L898.0 278.9 L897.0 282.4 L896.0 286.0 L895.0 290.0 L894.0 294.1 L893.0 298.4 L892.0 302.9 L891.0 307.4 L890.0 312.2 L889.0 317.1 L888.0 322.1 L887.0 327.3 L886.0 332.6 L885.0 338.1 L884.0 343.7 L883.0 349.4 L882.0 355.3 L881.0 361.3 L880.0 367.4 L879.0 373.7 L878.0 380.1 L877.0 386.6 L876.0 393.2 L875.0 400.0 L874.0 406.9 L873.0 413.8 L872.0 420.9 L871.0 428.1 L870.0 435.4 L869.0 442.8 L868.0 450.4 L867.0 458.0 L866.0 465.7 L865.0 473.5 L864.0 481.4 L863.0 489.3 L862.0 497.4 L861.0 505.5 L860.0 513.7 L859.0 522.0 L858.0 530.3 L857.0 538.7 L856.0 547.2 L855.0 555.7 L854.0 564.3 L853.0 572.9 L852.0 581.6 L851.0 590.3 L850.0 599.1 L849.0 607.9 L848.0 616.7 L847.0 625.6 L846.0 634.4 L845.0 643.2 L844.0 652.0 L843.0 660.8 L842.0 669.5 L841.0 678.2 L840.0 686.8 L839.0 695.4 L838.0 703.9 L837.0 712.4 L836.0 720.8 L835.0 729.2 L834.0 737.5 L833.0 745.7 L832.0 753.8 L831.0 761.9 L830.0 769.9 L829.0 777.7 L828.0 785.6 L827.0 793.3 L826.0 800.9 L825.0 808.4 L824.0 815.8 L823.0 823.1 L822.0 830.4 L821.0 837.5 L820.0 844.5 L819.0 851.3 L818.0 858.1 L817.0 864.7 L816.0 871.3 L815.0 877.7 L814.0 883.9 L813.0 890.1 L812.0 896.1 L811.0 902.0 L810.0 907.7 L809.0 913.4 L808.0 918.8 L807.0 924.2 L806.0 929.4 L805.0 934.4 L804.0 939.3 L803.0 944.1 L802.0 948.7 L801.0 953.2 L800.0 957.5 L799.0 961.6 L798.0 965.6 L797.0 969.3 L796.0 972.7 L795.0 975.9 L794.0 978.9 L793.0 981.6 L792.0 984.1 L791.0 986.4 L790.0 988.4 L789.0 990.3 L788.0 991.9 L787.0 993.4 L786.0 994.7 L785.0 995.9 L784.0 996.9 L783.0 997.8 L782.0 998.5 L781.0 999.1 L780.0 999.7 L779.0 1000.1 L778.0 1000.4 L777.0 1000.7 L776.0 1000.9 L775.0 1001.0 L774.0 1001.0 L773.0 1001.0 L772.0 1000.8 L771.0 1000.6 L770.0 1000.4 L769.0 1000.0 L768.0 999.6 L767.0 999.0 L766.0 998.4 L765.0 997.6 L764.0 996.7 L763.0 995.7 L762.0 994.5 L761.0 993.1 L760.0 991.6 L759.0 989.9 L758.0 988.0 L757.0 985.9 L756.0 983.6 L755.0 981.1 L754.0 978.3 L753.0 975.3 L752.0 972.1 L751.0 968.6 L750.0 964.8 L749.0 960.8 L748.0 956.6 L747.0 952.3 L746.0 947.8 L745.0 943.1 L744.0 938.4 L743.0 933.4 L742.0 928.3 L741.0 923.1 L740.0 917.7 L739.0 912.2 L738.0 906.6 L737.0 900.8 L736.0 894.9 L735.0 888.9 L734.0 882.7 L733.0 876.4 L732.0 870.0 L731.0 863.4 L730.0 856.8 L729.0 850.0 L728.0 843.1 L727.0 836.0 L726.0 828.9 L725.0 821.7 L724.0 814.3 L723.0 806.9 L722.0 799.4 L721.0 791.7 L720.0 784.0 L719.0 776.2 L718.0 768.3 L717.0 760.3 L716.0 752.2 L715.0 744.0 L714.0 735.8 L713.0 727.5 L712.0 719.2 L711.0 710.7 L710.0 702.2 L709.0 693.7 L708.0 685.1 L707.0 676.5 L706.0 667.8 L705.0 659.0 L704.0 650.3 L703.0 641.5 L702.0 632.6 L701.0 623.8 L700.0 614.9 L699.0 606.1 L698.0 597.3 L697.0 588.6 L696.0 579.9 L695.0 571.2 L694.0 562.6 L693.0 554.0 L692.0 545.5 L691.0 537.0 L690.0 528.6 L689.0 520.3 L688.0 512.1 L687.0 503.9 L686.0 495.8 L685.0 487.7 L684.0 479.8 L683.0 471.9 L682.0 464.1 L681.0 456.4 L680.0 448.9 L679.0 441.4 L678.0 434.0 L677.0 426.7 L676.0 419.5 L675.0 412.4 L674.0 405.5 L673.0 398.6 L672.0 391.9 L671.0 385.3 L670.0 378.8 L669.0 372.4 L668.0 366.2 L667.0 360.1 L666.0 354.1 L665.0 348.3 L664.0 342.6 L663.0 337.0 L662.0 331.6 L661.0 326.3 L660.0 321.1 L659.0 316.1 L658.0 311.2 L657.0 306.5 L656.0 301.9 L655.0 297.5 L654.0 293.3 L653.0 289.2 L652.0 285.3 L651.0 281.7 L650.0 278.3 L649.0 275.2 L648.0 272.3 L647.0 269.6 L646.0 267.2 L645.0 265.0 L644.0 263.0 L643.0 261.2 L642.0 259.6 L641.0 258.2 L640.0 256.9 L639.0 255.8 L638.0 254.8 L637.0 254.0 L636.0 253.3 L635.0 252.7 L634.0 252.2 L633.0 251.8 L632.0 251.5 L631.0 251.2 L630.0 251.1 L629.0 251.0 L628.0 251.0 L627.0 251.1 L626.0 251.2 L625.0 251.4 L624.0 251.7 L623.0 252.1 L622.0 252.6 L621.0 253.2 L620.0 253.8 L619.0 254.7 L618.0 255.6 L617.0 256.7 L616.0 257.9 L615.0 259.3 L614.0 260.9 L613.0 262.6 L612.0 264.6 L611.0 266.7 L610.0 269.1 L609.0 271.7 L608.0 274.6 L607.0 277.6 L606.0 281.0 L605.0 284.5 L604.0 288.4 L603.0 292.4 L602.0 296.7 L601.0 301.1 L600.0 305.6 L599.0 310.3 L598.0 315.1 L597.0 320.1 L596.0 325.2 L595.0 330.5 L594.0 335.9 L593.0 341.4 L592.0 347.1 L591.0 352.9 L590.0 358.9 L589.0 365.0 L588.0 371.2 L587.0 377.5 L586.0 384.0 L585.0 390.6 L584.0 397.3 L583.0 404.1 L582.0 411.0 L581.0 418.1 L580.0 425.2 L579.0 432.5 L578.0 439.9 L577.0 447.3 L576.0 454.9 L575.0 462.6 L574.0 470.3 L573.0 478.2 L572.0 486.1 L571.0 494.1 L570.0 502.2 L569.0 510.4 L568.0 518.7 L567.0 527.0 L566.0 535.4 L565.0 543.8 L564.0 552.3 L563.0 560.9 L562.0 569.5 L561.0 578.1 L560.0 586.8 L559.0 595.6 L558.0 604.4 L557.0 613.2 L556.0 622.0 L555.0 630.9 L554.0 639.7 L553.0 648.5 L552.0 657.3 L551.0 666.0 L550.0 674.7 L549.0 683.4 L548.0 692.0 L547.0 700.5 L546.0 709.0 L545.0 717.5 L544.0 725.9 L543.0 734.2 L542.0 742.4 L541.0 750.6 L540.0 758.7 L539.0 766.7 L538.0 774.6 L537.0 782.4 L536.0 790.2 L535.0 797.8 L534.0 805.4 L533.0 812.9 L532.0 820.2 L531.0 827.5 L530.0 834.6 L529.0 841.7 L528.0 848.6 L527.0 855.4 L526.0 862.1 L525.0 868.7 L524.0 875.1 L523.0 881.4 L522.0 887.6 L521.0 893.7 L520.0 899.7 L519.0 905.5 L518.0 911.1 L517.0 916.7 L516.0 922.1 L515.0 927.3 L514.0 932.4 L513.0 937.4 L512.0 942.2 L511.0 946.9 L510.0 951.4 L509.0 955.8 L508.0 960.0 L507.0 964.0 L506.0 967.8 L505.0 971.4 L504.0 974.7 L503.0 977.7 L502.0 980.5 L501.0 983.1 L500.0 985.5 L499.0 987.6 L498.0 989.6 L497.0 991.3 L496.0 992.9 L495.0 994.2 L494.0 995.4 L493.0 996.5 L492.0 997.4 L491.0 998.2 L490.0 998.9 L489.0 999.5 L488.0 999.9 L487.0 1000.3 L486.0 1000.6 L485.0 1000.8 L484.0 1000.9 L483.0 1001.0 L482.0 1001.0 L481.0 1000.9 L480.0 1000.7 L479.0 1000.5 L478.0 1000.2 L477.0 999.8 L476.0 999.3 L475.0 998.6 L474.0 997.9 L473.0 997.1 L472.0 996.1 L471.0 995.0 L470.0 993.7 L469.0 992.3 L468.0 990.6 L467.0 988.8 L466.0 986.8 L465.0 984.6 L464.0 982.1 L463.0 979.4 L462.0 976.5 L461.0 973.4 L460.0 970.0 L459.0 966.3 L458.0 962.4 L457.0 958.3 L456.0 954.0 L455.0 949.6 L454.0 945.0 L453.0 940.3 L452.0 935.4 L451.0 930.4 L450.0 925.2 L449.0 919.9 L448.0 914.5 L447.0 908.9 L446.0 903.2 L445.0 897.3 L444.0 891.3 L443.0 885.2 L442.0 878.9 L441.0 872.6 L440.0 866.1 L439.0 859.4 L438.0 852.7 L437.0 845.8 L436.0 838.9 L435.0 831.8 L434.0 824.6 L433.0 817.3 L432.0 809.9 L431.0 802.4 L430.0 794.8 L429.0 787.1 L428.0 779.3 L427.0 771.4 L426.0 763.5 L425.0 755.4 L424.0 747.3 L423.0 739.1 L422.0 730.9 L421.0 722.5 L420.0 714.1 L419.0 705.6 L418.0 697.1 L417.0 688.6 L416.0 679.9 L415.0 671.3 L414.0 662.5 L413.0 653.8 L412.0 645.0 L411.0 636.2 L410.0 627.3 L409.0 618.5 L408.0 609.6 L407.0 600.8 L406.0 592.1 L405.0 583.4 L404.0 574.7 L403.0 566.0 L402.0 557.4 L401.0 548.9 L400.0 540.4 L399.0 532.0 L398.0 523.6 L397.0 515.4 L396.0 507.1 L395.0 499.0 L394.0 490.9 L393.0 482.9 L392.0 475.0 L391.0 467.2 L390.0 459.5 L389.0 451.9 L388.0 444.3 L387.0 436.9 L386.0 429.6 L385.0 422.4 L384.0 415.2 L383.0 408.2 L382.0 401.3 L381.0 394.6 L380.0 387.9 L379.0 381.4 L378.0 375.0 L377.0 368.7 L376.0 362.5 L375.0 356.5 L374.0 350.6 L373.0 344.8 L372.0 339.2 L371.0 333.7 L370.0 328.4 L369.0 323.1 L368.0 318.1 L367.0 313.2 L366.0 308.4 L365.0 303.8 L364.0 299.3 L363.0 295.0 L362.0 290.8 L361.0 286.8 L360.0 283.1 L359.0 279.6 L358.0 276.4 L357.0 273.4 L356.0 270.7 L355.0 268.1 L354.0 265.9 L353.0 263.8 L352.0 261.9 L351.0 260.2 L350.0 258.7 L349.0 257.4 L348.0 256.2 L347.0 255.2 L346.0 254.3 L345.0 253.6 L344.0 252.9 L343.0 252.4 L342.0 251.9 L341.0 251.6 L340.0 251.3 L339.0 251.1 L338.0 251.0 L337.0 251.0 L336.0 251.0 L335.0 251.1 L334.0 251.3 L333.0 251.6 L332.0 251.9 L331.0 252.4 L330.0 252.9 L329.0 253.6 L328.0 254.3 L327.0 255.2 L326.0 256.2 L325.0 257.4 L324.0 258.7 L323.0 260.2 L322.0 261.9 L321.0 263.8 L320.0 265.9 L319.0 268.1 L318.0 270.7 L317.0 273.4 L316.0 276.4 L315.0 279.6 L314.0 283.1 L313.0 286.8 L312.0 290.8 L311.0 295.0 L310.0 299.3 L309.0 303.8 L308.0 308.4 L307.0 313.2 L306.0 318.1 L305.0 323.1 L304.0 328.4 L303.0 333.7 L302.0 339.2 L301.0 344.8 L300.0 350.6 L299.0 356.5 L298.0 362.5 L297.0 368.7 L296.0 375.0 L295.0 381.4 L294.0 387.9 L293.0 394.6 L292.0 401.3 L291.0 408.2 L290.0 415.2 L289.0 422.4 L288.0 429.6 L287.0 436.9 L286.0 444.3 L285.0 451.9 L284.0 459.5 L283.0 467.2 L282.0 475.0 L281.0 482.9 L280.0 490.9 L279.0 499.0 L278.0 507.1 L277.0 515.4 L276.0 523.6 L275.0 532.0 L274.0 540.4 L273.0 548.9 L272.0 557.4 L271.0 566.0 L270.0 574.7 L269.0 583.4 L268.0 592.1 L267.0 600.8 L266.0 609.6 L265.0 618.5 L264.0 627.3 L263.0 636.2 L262.0 645.0 L261.0 653.8 L260.0 662.5 L259.0 671.3 L258.0 679.9 L257.0 688.6 L256.0 697.1 L255.0 705.6 L254.0 714.1 L253.0 722.5 L252.0 730.9 L251.0 739.1 L250.0 747.3 L249.0 755.4 L248.0 763.5 L247.0 771.4 L246.0 779.3 L245.0 787.1 L244.0 794.8 L243.0 802.4 L242.0 809.9 L241.0 817.3 L240.0 824.6 L239.0 831.8 L238.0 838.9 L237.0 845.8 L236.0 852.7 L235.0 859.4 L234.0 866.1 L233.0 872.6 L232.0 878.9 L231.0 885.2 L230.0 891.3 L229.0 897.3 L228.0 903.2 L227.0 908.9 L226.0 914.5 L225.0 919.9 L224.0 925.2 L223.0 930.4 L222.0 935.4 L221.0 940.3 L220.0 945.0 L219.0 949.6 L218.0 954.0 L217.0 958.3 L216.0 962.4 L215.0 966.3 L214.0 970.0 L213.0 973.4 L212.0 976.5 L211.0 979.4 L210.0 982.1 L209.0 984.6 L208.0 986.8 L207.0 988.8 L206.0 990.6 L205.0 992.3 L204.0 993.7 L203.0 995.0 L202.0 996.1 L201.0 997.1 L200.0 997.9 L199.0 998.6 L198.0 999.3 L197.0 999.8 L196.0 1000.2 L195.0 1000.5 L194.0 1000.7 L193.0 1000.9 L192.0 1001.0 L191.0 1001.0 L190.0 1000.9 L189.0 1000.8 L188.0 1000.6 L187.0 1000.3 L186.0 999.9 L185.0 999.5 L184.0 998.9 L183.0 998.2 L182.0 997.4 L181.0 996.5 L180.0 995.4 L179.0 994.2 L178.0 992.9 L177.0 991.3 L176.0 989.6 L175.0 987.6 L174.0 985.5 L173.0 983.1 L172.0 980.5 L171.0 977.7 L170.0 974.7 L169.0 971.4 L168.0 967.8 L167.0 964.0 L166.0 960.0 L165.0 955.8 L164.0 951.4 L163.0 946.9 L162.0 942.2 L161.0 937.4 L160.0 932.4 L159.0 927.3 L158.0 922.1 L157.0 916.7 L156.0 911.1 L155.0 905.5 L154.0 899.7 L153.0 893.7 L152.0 887.6 L151.0 881.4 L150.0 875.1 L149.0 868.7 L148.0 862.1 L147.0 855.4 L146.0 848.6 L145.0 841.7 L144.0 834.6 L143.0 827.5 L142.0 820.2 L141.0 812.9 L140.0 805.4 L139.0 797.8 L138.0 790.2 L137.0 782.4 L136.0 774.6 L135.0 766.7 L134.0 758.7 L133.0 750.6 L132.0 742.4 L131.0 734.2 L130.0 725.9 L129.0 717.5 L128.0 709.0 L127.0 700.5 L126.0 692.0 L125.0 683.4 L124.0 674.7 L123.0 666.0 L122.0 657.3 L121.0 648.5 L120.0 639.7 L119.0 630.9 L118.0 622.0 L117.0 613.2 L116.0 604.4 L115.0 595.6 L114.0 586.8 L113.0 578.1 L112.0 569.5 L111.0 560.9 L110.0 552.3 L109.0 543.8 L108.0 535.4 L107.0 527.0 L106.0 518.7 L105.0 510.4 L104.0 502.2 L103.0 494.1 L102.0 486.1 L101.0 478.2 L100.0 470.3 L99.0 462.6 L98.0 454.9 L97.0 447.3 L96.0 439.9 L95.0 432.5 L94.0 425.2 L93.0 418.1 L92.0 411.0 L91.0 404.1 L90.0 397.3 L89.0 390.6 L88.0 384.0 L87.0 377.5 L86.0 371.2 L85.0 365.0 L84.0 358.9 L83.0 352.9 L82.0 347.1 L81.0 341.4 L80.0 335.9 L79.0 330.5 L78.0 325.2 L77.0 320.1 L76.0 315.1 L75.0 310.3 L74.0 305.6 L73.0 301.1 L72.0 296.7 L71.0 292.4 L70.0 288.4 L69.0 284.5 L68.0 281.0 L67.0 277.6 L66.0 274.6 L65.0 271.7 L64.0 269.1 L63.0 266.7 L62.0 264.6 L61.0 262.6 L60.0 260.9 L59.0 259.3 L58.0 257.9Z" fill="#ff00ff" stroke="#ff00ff" stroke-width="3.4" stroke-linejoin="round"/>
<path d="M58.0 888.4 L59.0 895.4 L60.0 902.3 L61.0 909.1 L62.0 915.7 L63.0 922.2 L64.0 928.5 L65.0 934.7 L66.0 940.8 L67.0 946.7 L68.0 952.5 L69.0 958.2 L70.0 963.6 L71.0 969.0 L72.0 974.1 L73.0 979.1 L74.0 983.5 L75.0 986.2 L76.0 988.8 L77.0 991.5 L78.0 994.1 L79.0 996.7 L80.0 999.3 L81.0 1001.9 L82.0 1004.5 L83.0 1007.1 L84.0 1009.6 L85.0 1012.2 L86.0 1014.7 L87.0 1017.2 L88.0 1019.7 L89.0 1022.2 L90.0 1024.7 L91.0 1027.1 L92.0 1029.6 L93.0 1032.0 L94.0 1034.3 L95.0 1036.7 L96.0 1039.0 L97.0 1041.2 L98.0 1043.4 L99.0 1045.5 L100.0 1046.7 L101.0 1044.7 L102.0 1042.6 L103.0 1040.3 L104.0 1038.1 L105.0 1035.7 L106.0 1033.4 L107.0 1031.0 L108.0 1028.6 L109.0 1026.2 L110.0 1023.7 L111.0 1021.2 L112.0 1018.7 L113.0 1016.2 L114.0 1013.7 L115.0 1011.2 L116.0 1008.6 L117.0 1006.0 L118.0 1003.5 L119.0 1000.9 L120.0 998.3 L121.0 995.7 L122.0 993.1 L123.0 990.4 L124.0 987.8 L125.0 985.1 L126.0 982.1 L127.0 977.1 L128.0 972.1 L129.0 966.9 L130.0 961.5 L131.0 955.9 L132.0 950.2 L133.0 944.4 L134.0 938.4 L135.0 932.3 L136.0 926.0 L137.0 919.6 L138.0 913.0 L139.0 906.4 L140.0 899.6 L141.0 892.6 L142.0 885.6 L143.0 878.4 L144.0 871.1 L145.0 863.7 L146.0 856.2 L147.0 848.6 L148.0 840.9 L149.0 833.0 L150.0 825.1 L151.0 817.1 L152.0 809.0 L153.0 800.9 L154.0 792.6 L155.0 784.3 L156.0 775.9 L157.0 767.4 L158.0 758.9 L159.0 750.3 L160.0 741.6 L161.0 732.9 L162.0 724.1 L163.0 715.3 L164.0 706.5 L165.0 697.6 L166.0 688.7 L167.0 679.8 L168.0 670.8 L169.0 661.9 L170.0 652.9 L171.0 643.9 L172.0 634.9 L173.0 625.8 L174.0 616.8 L175.0 607.8 L176.0 598.8 L177.0 589.9 L178.0 580.9 L179.0 571.9 L180.0 563.0 L181.0 554.1 L182.0 545.3 L183.0 536.5 L184.0 527.7 L185.0 519.0 L186.0 510.3 L187.0 501.7 L188.0 493.2 L189.0 484.7 L190.0 476.2 L191.0 467.9 L192.0 459.6 L193.0 451.4 L194.0 443.3 L195.0 435.3 L196.0 427.3 L197.0 419.5 L198.0 411.7 L199.0 404.1 L200.0 396.5 L201.0 389.1 L202.0 381.8 L203.0 374.6 L204.0 367.5 L205.0 360.5 L206.0 353.7 L207.0 346.9 L208.0 340.4 L209.0 333.9 L210.0 327.6 L211.0 321.4 L212.0 315.4 L213.0 309.5 L214.0 303.8 L215.0 298.2 L216.0 292.7 L217.0 287.5 L218.0 282.4 L219.0 277.4 L220.0 273.7 L221.0 271.0 L222.0 268.4 L223.0 265.7 L224.0 263.1 L225.0 260.5 L226.0 257.9 L227.0 255.3 L228.0 252.7 L229.0 250.2 L230.0 247.6 L231.0 245.1 L232.0 242.5 L233.0 240.0 L234.0 237.5 L235.0 235.0 L236.0 232.6 L237.0 230.1 L238.0 227.7 L239.0 225.3 L240.0 223.0 L241.0 220.6 L242.0 218.3 L243.0 216.1 L244.0 213.9 L245.0 211.9 L246.0 211.9 L247.0 213.9 L248.0 216.1 L249.0 218.3 L250.0 220.6 L251.0 223.0 L252.0 225.3 L253.0 227.7 L254.0 230.1 L255.0 232.6 L256.0 235.0 L257.0 237.5 L258.0 240.0 L259.0 242.5 L260.0 245.1 L261.0 247.6 L262.0 250.2 L263.0 252.7 L264.0 255.3 L265.0 257.9 L266.0 260.5 L267.0 263.1 L268.0 265.7 L269.0 268.4 L270.0 271.0 L271.0 273.7 L272.0 277.4 L273.0 282.4 L274.0 287.5 L275.0 292.7 L276.0 298.2 L277.0 303.8 L278.0 309.5 L279.0 315.4 L280.0 321.4 L281.0 327.6 L282.0 333.9 L283.0 340.4 L284.0 346.9 L285.0 353.7 L286.0 360.5 L287.0 367.5 L288.0 374.6 L289.0 381.8 L290.0 389.1 L291.0 396.5 L292.0 404.1 L293.0 411.7 L294.0 419.5 L295.0 427.3 L296.0 435.3 L297.0 443.3 L298.0 451.4 L299.0 459.6 L300.0 467.9 L301.0 476.2 L302.0 484.7 L303.0 493.2 L304.0 501.7 L305.0 510.3 L306.0 519.0 L307.0 527.7 L308.0 536.5 L309.0 545.3 L310.0 554.1 L311.0 563.0 L312.0 571.9 L313.0 580.9 L314.0 589.9 L315.0 598.8 L316.0 607.8 L317.0 616.8 L318.0 625.8 L319.0 634.9 L320.0 643.9 L321.0 652.9 L322.0 661.9 L323.0 670.8 L324.0 679.8 L325.0 688.7 L326.0 697.6 L327.0 706.5 L328.0 715.3 L329.0 724.1 L330.0 732.9 L331.0 741.6 L332.0 750.3 L333.0 758.9 L334.0 767.4 L335.0 775.9 L336.0 784.3 L337.0 792.6 L338.0 800.9 L339.0 809.0 L340.0 817.1 L341.0 825.1 L342.0 833.0 L343.0 840.9 L344.0 848.6 L345.0 856.2 L346.0 863.7 L347.0 871.1 L348.0 878.4 L349.0 885.6 L350.0 892.6 L351.0 899.6 L352.0 906.4 L353.0 913.0 L354.0 919.6 L355.0 926.0 L356.0 932.3 L357.0 938.4 L358.0 944.4 L359.0 950.2 L360.0 955.9 L361.0 961.5 L362.0 966.9 L363.0 972.1 L364.0 977.1 L365.0 982.1 L366.0 985.1 L367.0 987.8 L368.0 990.4 L369.0 993.1 L370.0 995.7 L371.0 998.3 L372.0 1000.9 L373.0 1003.5 L374.0 1006.0 L375.0 1008.6 L376.0 1011.2 L377.0 1013.7 L378.0 1016.2 L379.0 1018.7 L380.0 1021.2 L381.0 1023.7 L382.0 1026.2 L383.0 1028.6 L384.0 1031.0 L385.0 1033.4 L386.0 1035.7 L387.0 1038.1 L388.0 1040.3 L389.0 1042.6 L390.0 1044.7 L391.0 1046.7 L392.0 1045.5 L393.0 1043.4 L394.0 1041.2 L395.0 1039.0 L396.0 1036.7 L397.0 1034.3 L398.0 1032.0 L399.0 1029.6 L400.0 1027.1 L401.0 1024.7 L402.0 1022.2 L403.0 1019.7 L404.0 1017.2 L405.0 1014.7 L406.0 1012.2 L407.0 1009.6 L408.0 1007.1 L409.0 1004.5 L410.0 1001.9 L411.0 999.3 L412.0 996.7 L413.0 994.1 L414.0 991.5 L415.0 988.8 L416.0 986.2 L417.0 983.5 L418.0 979.1 L419.0 974.1 L420.0 969.0 L421.0 963.6 L422.0 958.2 L423.0 952.5 L424.0 946.7 L425.0 940.8 L426.0 934.7 L427.0 928.5 L428.0 922.2 L429.0 915.7 L430.0 909.1 L431.0 902.3 L432.0 895.4 L433.0 888.4 L434.0 881.3 L435.0 874.0 L436.0 866.7 L437.0 859.2 L438.0 851.6 L439.0 844.0 L440.0 836.2 L441.0 828.3 L442.0 820.3 L443.0 812.3 L444.0 804.1 L445.0 795.9 L446.0 787.6 L447.0 779.2 L448.0 770.8 L449.0 762.3 L450.0 753.7 L451.0 745.1 L452.0 736.4 L453.0 727.7 L454.0 718.9 L455.0 710.1 L456.0 701.2 L457.0 692.3 L458.0 683.4 L459.0 674.4 L460.0 665.5 L461.0 656.5 L462.0 647.5 L463.0 638.5 L464.0 629.5 L465.0 620.4 L466.0 611.4 L467.0 602.4 L468.0 593.4 L469.0 584.5 L470.0 575.5 L471.0 566.6 L472.0 557.7 L473.0 548.8 L474.0 540.0 L475.0 531.2 L476.0 522.5 L477.0 513.8 L478.0 505.2 L479.0 496.6 L480.0 488.1 L481.0 479.6 L482.0 471.2 L483.0 462.9 L484.0 454.7 L485.0 446.5 L486.0 438.5 L487.0 430.5 L488.0 422.6 L489.0 414.8 L490.0 407.1 L491.0 399.5 L492.0 392.1 L493.0 384.7 L494.0 377.4 L495.0 370.3 L496.0 363.3 L497.0 356.4 L498.0 349.6 L499.0 343.0 L500.0 336.5 L501.0 330.1 L502.0 323.9 L503.0 317.8 L504.0 311.8 L505.0 306.0 L506.0 300.4 L507.0 294.9 L508.0 289.6 L509.0 284.4 L510.0 279.4 L511.0 274.7 L512.0 272.1 L513.0 269.4 L514.0 266.8 L515.0 264.2 L516.0 261.5 L517.0 258.9 L518.0 256.3 L519.0 253.8 L520.0 251.2 L521.0 248.6 L522.0 246.1 L523.0 243.5 L524.0 241.0 L525.0 238.5 L526.0 236.0 L527.0 233.6 L528.0 231.1 L529.0 228.7 L530.0 226.3 L531.0 223.9 L532.0 221.6 L533.0 219.2 L534.0 217.0 L535.0 214.8 L536.0 212.7 L537.0 211.2 L538.0 213.1 L539.0 215.2 L540.0 217.4 L541.0 219.7 L542.0 222.0 L543.0 224.4 L544.0 226.7 L545.0 229.2 L546.0 231.6 L547.0 234.0 L548.0 236.5 L549.0 239.0 L550.0 241.5 L551.0 244.0 L552.0 246.6 L553.0 249.1 L554.0 251.7 L555.0 254.3 L556.0 256.9 L557.0 259.5 L558.0 262.1 L559.0 264.7 L560.0 267.3 L561.0 269.9 L562.0 272.6 L563.0 275.5 L564.0 280.4 L565.0 285.4 L566.0 290.6 L567.0 296.0 L568.0 301.5 L569.0 307.2 L570.0 313.0 L571.0 319.0 L572.0 325.1 L573.0 331.4 L574.0 337.8 L575.0 344.3 L576.0 351.0 L577.0 357.8 L578.0 364.7 L579.0 371.7 L580.0 378.9 L581.0 386.2 L582.0 393.5 L583.0 401.1 L584.0 408.7 L585.0 416.4 L586.0 424.2 L587.0 432.1 L588.0 440.1 L589.0 448.2 L590.0 456.3 L591.0 464.6 L592.0 472.9 L593.0 481.3 L594.0 489.8 L595.0 498.3 L596.0 506.9 L597.0 515.5 L598.0 524.2 L599.0 533.0 L600.0 541.8 L601.0 550.6 L602.0 559.5 L603.0 568.4 L604.0 577.3 L605.0 586.3 L606.0 595.2 L607.0 604.2 L608.0 613.2 L609.0 622.2 L610.0 631.3 L611.0 640.3 L612.0 649.3 L613.0 658.3 L614.0 667.3 L615.0 676.2 L616.0 685.2 L617.0 694.1 L618.0 703.0 L619.0 711.8 L620.0 720.6 L621.0 729.4 L622.0 738.1 L623.0 746.8 L624.0 755.4 L625.0 764.0 L626.0 772.5 L627.0 780.9 L628.0 789.3 L629.0 797.6 L630.0 805.8 L631.0 813.9 L632.0 821.9 L633.0 829.9 L634.0 837.7 L635.0 845.5 L636.0 853.2 L637.0 860.7 L638.0 868.2 L639.0 875.5 L640.0 882.7 L641.0 889.8 L642.0 896.8 L643.0 903.7 L644.0 910.4 L645.0 917.0 L646.0 923.5 L647.0 929.8 L648.0 936.0 L649.0 942.0 L650.0 947.9 L651.0 953.7 L652.0 959.3 L653.0 964.7 L654.0 970.0 L655.0 975.1 L656.0 980.1 L657.0 984.1 L658.0 986.7 L659.0 989.4 L660.0 992.0 L661.0 994.6 L662.0 997.2 L663.0 999.8 L664.0 1002.4 L665.0 1005.0 L666.0 1007.6 L667.0 1010.1 L668.0 1012.7 L669.0 1015.2 L670.0 1017.7 L671.0 1020.2 L672.0 1022.7 L673.0 1025.2 L674.0 1027.6 L675.0 1030.0 L676.0 1032.4 L677.0 1034.8 L678.0 1037.1 L679.0 1039.4 L680.0 1041.7 L681.0 1043.8 L682.0 1045.9 L683.0 1046.3 L684.0 1044.3 L685.0 1042.1 L686.0 1039.9 L687.0 1037.6 L688.0 1035.3 L689.0 1032.9 L690.0 1030.5 L691.0 1028.1 L692.0 1025.7 L693.0 1023.2 L694.0 1020.7 L695.0 1018.2 L696.0 1015.7 L697.0 1013.2 L698.0 1010.7 L699.0 1008.1 L700.0 1005.5 L701.0 1003.0 L702.0 1000.4 L703.0 997.8 L704.0 995.2 L705.0 992.5 L706.0 989.9 L707.0 987.3 L708.0 984.6 L709.0 981.1 L710.0 976.1 L711.0 971.0 L712.0 965.8 L713.0 960.4 L714.0 954.8 L715.0 949.1 L716.0 943.2 L717.0 937.2 L718.0 931.0 L719.0 924.7 L720.0 918.3 L721.0 911.7 L722.0 905.0 L723.0 898.2 L724.0 891.2 L725.0 884.1 L726.0 876.9 L727.0 869.6 L728.0 862.2 L729.0 854.7 L730.0 847.0 L731.0 839.3 L732.0 831.5 L733.0 823.5 L734.0 815.5 L735.0 807.4 L736.0 799.2 L737.0 790.9 L738.0 782.6 L739.0 774.2 L740.0 765.7 L741.0 757.1 L742.0 748.5 L743.0 739.9 L744.0 731.2 L745.0 722.4 L746.0 713.6 L747.0 704.7 L748.0 695.9 L749.0 686.9 L750.0 678.0 L751.0 669.0 L752.0 660.1 L753.0 651.1 L754.0 642.1 L755.0 633.1 L756.0 624.0 L757.0 615.0 L758.0 606.0 L759.0 597.0 L760.0 588.1 L761.0 579.1 L762.0 570.2 L763.0 561.3 L764.0 552.4 L765.0 543.5 L766.0 534.7 L767.0 526.0 L768.0 517.3 L769.0 508.6 L770.0 500.0 L771.0 491.5 L772.0 483.0 L773.0 474.6 L774.0 466.2 L775.0 458.0 L776.0 449.8 L777.0 441.7 L778.0 433.7 L779.0 425.7 L780.0 417.9 L781.0 410.2 L782.0 402.6 L783.0 395.0 L784.0 387.6 L785.0 380.3 L786.0 373.1 L787.0 366.1 L788.0 359.1 L789.0 352.3 L790.0 345.6 L791.0 339.1 L792.0 332.6 L793.0 326.3 L794.0 320.2 L795.0 314.2 L796.0 308.3 L797.0 302.6 L798.0 297.1 L799.0 291.7 L800.0 286.4 L801.0 281.4 L802.0 276.4 L803.0 273.1 L804.0 270.5 L805.0 267.8 L806.0 265.2 L807.0 262.6 L808.0 260.0 L809.0 257.4 L810.0 254.8 L811.0 252.2 L812.0 249.6 L813.0 247.1 L814.0 244.5 L815.0 242.0 L816.0 239.5 L817.0 237.0 L818.0 234.5 L819.0 232.1 L820.0 229.6 L821.0 227.2 L822.0 224.8 L823.0 222.5 L824.0 220.2 L825.0 217.9 L826.0 215.7 L827.0 213.5 L828.0 211.5 L829.0 212.3 L830.0 214.4 L831.0 216.5 L832.0 218.8 L833.0 221.1 L834.0 223.4 L835.0 225.8 L836.0 228.2 L837.0 230.6 L838.0 233.1 L839.0 235.5 L840.0 238.0 L841.0 240.5 L842.0 243.0 L843.0 245.6 L844.0 248.1 L845.0 250.7 L846.0 253.2 L847.0 255.8 L848.0 258.4 L849.0 261.0 L850.0 263.6 L851.0 266.3 L852.0 268.9 L853.0 271.5 L854.0 274.2 L855.0 278.4 L856.0 283.4 L857.0 288.5 L858.0 293.8 L859.0 299.3 L860.0 304.9 L861.0 310.7 L862.0 316.6 L863.0 322.6 L864.0 328.8 L865.0 335.2 L866.0 341.7 L867.0 348.3 L868.0 355.0 L869.0 361.9 L870.0 368.9 L871.0 376.0 L872.0 383.2 L873.0 390.6 L874.0 398.0 L875.0 405.6 L876.0 413.3 L877.0 421.0 L878.0 428.9 L879.0 436.9 L880.0 444.9 L881.0 453.0 L882.0 461.3 L883.0 469.6 L884.0 477.9 L885.0 486.4 L886.0 494.9 L887.0 503.4 L888.0 512.1 L889.0 520.7 L890.0 529.5 L891.0 538.2 L892.0 547.1 L893.0 555.9 L894.0 564.8 L895.0 573.7 L896.0 582.7 L897.0 591.6 L898.0 600.6 L899.0 609.6 L900.0 618.6 L901.0 627.6 L902.0 636.7 L903.0 645.7 L904.0 654.7 L905.0 663.7 L906.0 672.6 L907.0 681.6 L908.0 690.5 L909.0 699.4 L910.0 708.3 L911.0 717.1 L912.0 725.9 L913.0 734.6 L914.0 743.3 L915.0 752.0 L916.0 760.6 L917.0 769.1 L918.0 777.5 L919.0 785.9 L920.0 794.3 L921.0 802.5 L922.0 810.7 L923.0 818.7 L924.0 826.7 L925.0 834.6 L926.0 842.4 L927.0 850.1 L928.0 857.7 L929.0 865.2 L930.0 872.6 L931.0 879.8 L932.0 887.0 L933.0 894.0 L934.0 900.9 L935.0 907.7 L936.0 914.4 L937.0 920.9 L938.0 927.3 L939.0 933.5 L940.0 939.6 L941.0 945.6 L942.0 951.4 L943.0 957.0 L944.0 962.6 L945.0 967.9 L946.0 973.1 L947.0 978.1 L948.0 983.0 L949.0 985.7 L950.0 988.3 L951.0 991.0 L952.0 993.6 L953.0 996.2 L954.0 998.8 L955.0 1001.4 L956.0 1004.0 L957.0 1006.6 L958.0 1009.1 L959.0 1011.7 L960.0 1014.2 L961.0 1016.7 L962.0 1019.2 L963.0 1021.7 L964.0 1024.2 L965.0 1026.7 L966.0 1029.1 L967.0 1031.5 L968.0 1033.9 L969.0 1036.2 L970.0 1038.5 L971.0 1040.8 L972.0 1043.0 L973.0 1045.1 L974.0 1047.0 L975.0 1045.1 L976.0 1043.0 L977.0 1040.8 L978.0 1038.5 L979.0 1036.2 L980.0 1033.9 L981.0 1031.5 L982.0 1029.1 L983.0 1026.7 L984.0 1024.2 L985.0 1021.7 L986.0 1019.2 L987.0 1016.7 L988.0 1014.2 L989.0 1011.7 L990.0 1009.1 L991.0 1006.6 L992.0 1004.0 L993.0 1001.4 L994.0 998.8 L995.0 996.2 L996.0 993.6 L997.0 991.0 L998.0 988.3 L999.0 985.7 L1000.0 983.0 L1001.0 978.1 L1002.0 973.1 L1003.0 967.9 L1004.0 962.6 L1005.0 957.0 L1006.0 951.4 L1007.0 945.6 L1008.0 939.6 L1009.0 933.5 L1010.0 927.3 L1011.0 920.9 L1012.0 914.4 L1013.0 907.7 L1014.0 900.9 L1015.0 894.0 L1016.0 887.0 L1017.0 879.8 L1018.0 872.6 L1019.0 865.2 L1020.0 857.7 L1021.0 850.1 L1022.0 842.4 L1023.0 834.6 L1024.0 826.7 L1025.0 818.7 L1026.0 810.7 L1027.0 802.5 L1028.0 794.3 L1029.0 785.9 L1030.0 777.5 L1031.0 769.1 L1032.0 760.6 L1033.0 752.0 L1034.0 743.3 L1035.0 734.6 L1036.0 725.9 L1037.0 717.1 L1038.0 708.3 L1039.0 699.4 L1040.0 690.5 L1041.0 681.6 L1042.0 672.6 L1043.0 663.7 L1044.0 654.7 L1045.0 645.7 L1046.0 636.7 L1047.0 627.6 L1048.0 618.6 L1049.0 609.6 L1050.0 600.6 L1051.0 591.6 L1052.0 582.7 L1053.0 573.7 L1054.0 564.8 L1055.0 555.9 L1056.0 547.1 L1057.0 538.2 L1058.0 529.5 L1059.0 520.7 L1060.0 512.1 L1061.0 503.4 L1062.0 494.9 L1063.0 486.4 L1064.0 477.9 L1065.0 469.6 L1066.0 461.3 L1067.0 453.0 L1068.0 444.9 L1069.0 436.9 L1070.0 428.9 L1071.0 421.0 L1072.0 413.3 L1073.0 405.6 L1074.0 398.0 L1075.0 390.6 L1076.0 383.2 L1077.0 376.0 L1078.0 368.9 L1079.0 361.9 L1080.0 355.0 L1081.0 348.3 L1082.0 341.7 L1083.0 335.2 L1084.0 328.8 L1085.0 322.6 L1086.0 316.6 L1087.0 310.7 L1088.0 304.9 L1089.0 299.3 L1090.0 293.8 L1091.0 288.5 L1092.0 283.4 L1093.0 278.4 L1094.0 274.2 L1095.0 271.5 L1096.0 268.9 L1097.0 266.3 L1098.0 263.6 L1099.0 261.0 L1100.0 258.4 L1101.0 255.8 L1102.0 253.2 L1103.0 250.7 L1104.0 248.1 L1105.0 245.6 L1106.0 243.0 L1107.0 240.5 L1108.0 238.0 L1109.0 235.5 L1110.0 233.1 L1111.0 230.6 L1112.0 228.2 L1113.0 225.8 L1114.0 223.4 L1115.0 221.1 L1116.0 218.8 L1117.0 216.5 L1118.0 214.4 L1119.0 212.3 L1120.0 211.5 L1121.0 213.5 L1122.0 215.7 L1123.0 217.9 L1124.0 220.2 L1125.0 222.5 L1126.0 224.8 L1127.0 227.2 L1128.0 229.6 L1129.0 232.1 L1130.0 234.5 L1131.0 237.0 L1132.0 239.5 L1133.0 242.0 L1134.0 244.5 L1135.0 247.1 L1136.0 249.6 L1137.0 252.2 L1138.0 254.8 L1139.0 257.4 L1140.0 260.0 L1141.0 262.6 L1142.0 265.2 L1143.0 267.8 L1144.0 270.5 L1145.0 273.1 L1146.0 276.4 L1147.0 281.4 L1148.0 286.4 L1149.0 291.7 L1150.0 297.1 L1151.0 302.6 L1152.0 308.3 L1153.0 314.2 L1154.0 320.2 L1155.0 326.3 L1156.0 332.6 L1157.0 339.1 L1158.0 345.6 L1159.0 352.3 L1160.0 359.1 L1161.0 366.1 L1162.0 373.1 L1163.0 380.3 L1164.0 387.6 L1165.0 395.0 L1166.0 402.6 L1167.0 410.2 L1168.0 417.9 L1169.0 425.7 L1170.0 433.7 L1171.0 441.7 L1172.0 449.8 L1173.0 458.0 L1174.0 466.2 L1175.0 474.6 L1176.0 483.0 L1177.0 491.5 L1178.0 500.0 L1179.0 508.6 L1180.0 517.3 L1181.0 526.0 L1182.0 534.7 L1183.0 543.5 L1184.0 552.4 L1185.0 561.3 L1186.0 570.2 L1187.0 579.1 L1188.0 588.1 L1189.0 597.0 L1190.0 606.0 L1191.0 615.0 L1192.0 624.0 L1193.0 633.1 L1194.0 642.1 L1195.0 651.1 L1196.0 660.1 L1197.0 669.0 L1198.0 678.0 L1199.0 686.9 L1200.0 695.9 L1201.0 704.7 L1202.0 713.6 L1203.0 722.4 L1204.0 731.2 L1205.0 739.9 L1206.0 748.5 L1207.0 757.1 L1208.0 765.7 L1209.0 774.2 L1210.0 782.6 L1211.0 790.9 L1212.0 799.2 L1213.0 807.4 L1214.0 815.5 L1215.0 823.5 L1216.0 831.5 L1217.0 839.3 L1218.0 847.0 L1219.0 854.7 L1220.0 862.2 L1221.0 869.6 L1222.0 876.9 L1223.0 884.1 L1224.0 891.2 L1225.0 898.2 L1226.0 905.0 L1227.0 911.7 L1228.0 918.3 L1229.0 924.7 L1230.0 931.0 L1231.0 937.2 L1232.0 943.2 L1233.0 949.1 L1234.0 954.8 L1235.0 960.4 L1236.0 965.8 L1237.0 971.0 L1238.0 976.1 L1239.0 981.1 L1240.0 984.6 L1241.0 987.3 L1242.0 989.9 L1243.0 992.5 L1244.0 995.2 L1245.0 997.8 L1246.0 1000.4 L1247.0 1003.0 L1248.0 1005.5 L1249.0 1008.1 L1250.0 1010.7 L1251.0 1013.2 L1252.0 1015.7 L1253.0 1018.2 L1254.0 1020.7 L1255.0 1023.2 L1256.0 1025.7 L1257.0 1028.1 L1258.0 1030.5 L1259.0 1032.9 L1260.0 1035.3 L1261.0 1037.6 L1262.0 1039.9 L1263.0 1042.1 L1264.0 1044.3 L1265.0 1046.3 L1266.0 1045.9 L1267.0 1043.8 L1268.0 1041.7 L1269.0 1039.4 L1270.0 1037.1 L1271.0 1034.8 L1272.0 1032.4 L1273.0 1030.0 L1274.0 1027.6 L1275.0 1025.2 L1276.0 1022.7 L1277.0 1020.2 L1278.0 1017.7 L1279.0 1015.2 L1280.0 1012.7 L1281.0 1010.1 L1282.0 1007.6 L1283.0 1005.0 L1284.0 1002.4 L1285.0 999.8 L1286.0 997.2 L1287.0 994.6 L1288.0 992.0 L1289.0 989.4 L1290.0 986.7 L1291.0 984.1 L1292.0 980.1 L1293.0 975.1 L1294.0 970.0 L1295.0 964.7 L1296.0 959.3 L1297.0 953.7 L1298.0 947.9 L1299.0 942.0 L1300.0 936.0 L1301.0 929.8 L1302.0 923.5 L1303.0 917.0 L1304.0 910.4 L1305.0 903.7 L1306.0 896.8 L1307.0 889.8 L1308.0 882.7 L1309.0 875.5 L1310.0 868.2 L1311.0 860.7 L1312.0 853.2 L1313.0 845.5 L1314.0 837.7 L1315.0 829.9 L1316.0 821.9 L1317.0 813.9 L1318.0 805.8 L1319.0 797.6 L1320.0 789.3 L1321.0 780.9 L1322.0 772.5 L1323.0 764.0 L1324.0 755.4 L1325.0 746.8 L1326.0 738.1 L1327.0 729.4 L1328.0 720.6 L1329.0 711.8 L1330.0 703.0 L1331.0 694.1 L1332.0 685.2 L1333.0 676.2 L1334.0 667.3 L1335.0 658.3 L1336.0 649.3 L1337.0 640.3 L1338.0 631.3 L1339.0 622.2 L1340.0 613.2 L1341.0 604.2 L1342.0 595.2 L1343.0 586.3 L1344.0 577.3 L1345.0 568.4 L1346.0 559.5 L1347.0 550.6 L1348.0 541.8 L1349.0 533.0 L1350.0 524.2 L1351.0 515.5 L1352.0 506.9 L1353.0 498.3 L1354.0 489.8 L1355.0 481.3 L1356.0 472.9 L1357.0 464.6 L1358.0 456.3 L1359.0 448.2 L1360.0 440.1 L1361.0 432.1 L1362.0 424.2 L1363.0 416.4 L1364.0 408.7 L1365.0 401.1 L1366.0 393.5 L1367.0 386.2 L1368.0 378.9 L1369.0 371.7 L1370.0 364.7 L1371.0 357.8 L1372.0 351.0 L1373.0 344.3 L1374.0 337.8 L1375.0 331.4 L1376.0 325.1 L1377.0 319.0 L1378.0 313.0 L1379.0 307.2 L1380.0 301.5 L1381.0 296.0 L1382.0 290.6 L1383.0 285.4 L1384.0 280.4 L1385.0 275.5 L1386.0 272.6 L1387.0 269.9 L1388.0 267.3 L1389.0 264.7 L1390.0 262.1 L1391.0 259.5 L1392.0 256.9 L1393.0 254.3 L1394.0 251.7 L1395.0 249.1 L1396.0 246.6 L1397.0 244.0 L1398.0 241.5 L1399.0 239.0 L1400.0 236.5 L1401.0 234.0 L1402.0 231.6 L1403.0 229.2 L1404.0 226.7 L1405.0 224.4 L1406.0 222.0 L1407.0 219.7 L1408.0 217.4 L1409.0 215.2 L1410.0 213.1 L1411.0 211.2 L1412.0 212.7 L1413.0 214.8 L1414.0 217.0 L1415.0 219.2 L1416.0 221.6 L1417.0 223.9 L1418.0 226.3 L1419.0 228.7 L1420.0 231.1 L1421.0 233.6 L1422.0 236.0 L1423.0 238.5 L1424.0 241.0 L1425.0 243.5 L1426.0 246.1 L1427.0 248.6 L1428.0 251.2 L1429.0 253.8 L1430.0 256.3 L1431.0 258.9 L1432.0 261.5 L1433.0 264.2 L1434.0 266.8 L1435.0 269.4 L1436.0 272.1 L1437.0 274.7 L1438.0 279.4 L1439.0 284.4 L1440.0 289.6 L1441.0 294.9 L1442.0 300.4 L1443.0 306.0 L1444.0 311.8 L1445.0 317.8 L1446.0 323.9 L1447.0 330.1 L1448.0 336.5 L1449.0 343.0 L1450.0 349.6 L1451.0 356.4 L1452.0 363.3 L1453.0 370.3 L1454.0 377.4 L1455.0 384.7 L1456.0 392.1 L1457.0 399.5 L1458.0 407.1 L1459.0 414.8 L1460.0 422.6 L1461.0 430.5 L1462.0 438.5 L1463.0 446.5 L1464.0 454.7 L1465.0 462.9 L1466.0 471.2 L1467.0 479.6 L1468.0 488.1 L1469.0 496.6 L1470.0 505.2 L1471.0 513.8 L1472.0 522.5 L1473.0 531.2 L1474.0 540.0 L1475.0 548.8 L1476.0 557.7 L1477.0 566.6 L1478.0 575.5 L1479.0 584.5 L1480.0 593.4 L1481.0 602.4 L1482.0 611.4 L1483.0 620.4 L1484.0 629.5 L1485.0 638.5 L1486.0 647.5 L1487.0 656.5 L1488.0 665.5 L1489.0 674.4 L1490.0 683.4 L1491.0 692.3 L1492.0 701.2 L1493.0 710.1 L1494.0 718.9 L1495.0 727.7 L1496.0 736.4 L1497.0 745.1 L1498.0 753.7 L1499.0 762.3 L1500.0 770.8 L1501.0 779.2 L1502.0 787.6 L1503.0 795.9 L1504.0 804.1 L1505.0 812.3 L1506.0 820.3 L1507.0 828.3 L1508.0 836.2 L1509.0 844.0 L1510.0 851.6 L1511.0 859.2 L1512.0 866.7 L1513.0 874.0 L1514.0 881.3 L1515.0 888.4 L1516.0 895.4 L1517.0 902.3 L1518.0 909.1 L1519.0 915.7 L1520.0 922.2 L1521.0 928.5 L1522.0 934.7 L1523.0 940.8 L1524.0 946.7 L1525.0 952.5 L1526.0 958.2 L1527.0 963.6 L1528.0 969.0 L1529.0 974.1 L1530.0 979.1 L1530.0 961.1 L1529.0 956.6 L1528.0 951.9 L1527.0 947.1 L1526.0 942.2 L1525.0 937.1 L1524.0 931.9 L1523.0 926.5 L1522.0 921.0 L1521.0 915.3 L1520.0 909.5 L1519.0 903.6 L1518.0 897.5 L1517.0 891.3 L1516.0 885.0 L1515.0 878.5 L1514.0 871.9 L1513.0 865.2 L1512.0 858.4 L1511.0 851.4 L1510.0 844.3 L1509.0 837.1 L1508.0 829.9 L1507.0 822.4 L1506.0 814.9 L1505.0 807.3 L1504.0 799.6 L1503.0 791.8 L1502.0 783.9 L1501.0 775.9 L1500.0 767.8 L1499.0 759.7 L1498.0 751.4 L1497.0 743.1 L1496.0 734.7 L1495.0 726.2 L1494.0 717.7 L1493.0 709.1 L1492.0 700.4 L1491.0 691.7 L1490.0 682.9 L1489.0 674.1 L1488.0 665.3 L1487.0 656.4 L1486.0 647.4 L1485.0 638.4 L1484.0 629.5 L1483.0 620.4 L1482.0 611.5 L1481.0 602.5 L1480.0 593.6 L1479.0 584.8 L1478.0 575.9 L1477.0 567.2 L1476.0 558.4 L1475.0 549.8 L1474.0 541.2 L1473.0 532.6 L1472.0 524.2 L1471.0 515.7 L1470.0 507.4 L1469.0 499.2 L1468.0 491.0 L1467.0 482.9 L1466.0 474.9 L1465.0 467.0 L1464.0 459.2 L1463.0 451.4 L1462.0 443.8 L1461.0 436.3 L1460.0 428.9 L1459.0 421.6 L1458.0 414.4 L1457.0 407.3 L1456.0 400.3 L1455.0 393.5 L1454.0 386.8 L1453.0 380.2 L1452.0 373.7 L1451.0 367.3 L1450.0 361.1 L1449.0 355.0 L1448.0 349.1 L1447.0 343.3 L1446.0 337.6 L1445.0 332.1 L1444.0 326.7 L1443.0 321.4 L1442.0 316.3 L1441.0 311.3 L1440.0 306.5 L1439.0 301.9 L1438.0 297.4 L1437.0 293.0 L1436.0 288.8 L1435.0 284.8 L1434.0 281.1 L1433.0 277.7 L1432.0 274.4 L1431.0 271.5 L1430.0 268.8 L1429.0 266.3 L1428.0 264.1 L1427.0 262.0 L1426.0 260.2 L1425.0 258.6 L1424.0 257.2 L1423.0 255.9 L1422.0 254.8 L1421.0 253.8 L1420.0 253.0 L1419.0 252.3 L1418.0 251.7 L1417.0 251.2 L1416.0 250.8 L1415.0 250.5 L1414.0 250.3 L1413.0 250.1 L1412.0 250.0 L1411.0 250.0 L1410.0 250.0 L1409.0 250.1 L1408.0 250.3 L1407.0 250.6 L1406.0 250.9 L1405.0 251.3 L1404.0 251.8 L1403.0 252.4 L1402.0 253.2 L1401.0 254.0 L1400.0 255.0 L1399.0 256.1 L1398.0 257.4 L1397.0 258.9 L1396.0 260.6 L1395.0 262.4 L1394.0 264.5 L1393.0 266.8 L1392.0 269.3 L1391.0 272.1 L1390.0 275.1 L1389.0 278.3 L1388.0 281.8 L1387.0 285.6 L1386.0 289.6 L1385.0 293.9 L1384.0 298.3 L1383.0 302.8 L1382.0 307.5 L1381.0 312.3 L1380.0 317.3 L1379.0 322.4 L1378.0 327.7 L1377.0 333.1 L1376.0 338.7 L1375.0 344.4 L1374.0 350.3 L1373.0 356.2 L1372.0 362.3 L1371.0 368.6 L1370.0 375.0 L1369.0 381.5 L1368.0 388.1 L1367.0 394.8 L1366.0 401.7 L1365.0 408.7 L1364.0 415.8 L1363.0 423.0 L1362.0 430.4 L1361.0 437.8 L1360.0 445.3 L1359.0 453.0 L1358.0 460.7 L1357.0 468.6 L1356.0 476.5 L1355.0 484.5 L1354.0 492.6 L1353.0 500.8 L1352.0 509.1 L1351.0 517.4 L1350.0 525.8 L1349.0 534.3 L1348.0 542.9 L1347.0 551.5 L1346.0 560.2 L1345.0 568.9 L1344.0 577.7 L1343.0 586.5 L1342.0 595.4 L1341.0 604.3 L1340.0 613.3 L1339.0 622.2 L1338.0 631.3 L1337.0 640.2 L1336.0 649.2 L1335.0 658.1 L1334.0 667.0 L1333.0 675.9 L1332.0 684.7 L1331.0 693.5 L1330.0 702.2 L1329.0 710.8 L1328.0 719.4 L1327.0 727.9 L1326.0 736.4 L1325.0 744.8 L1324.0 753.1 L1323.0 761.3 L1322.0 769.4 L1321.0 777.5 L1320.0 785.5 L1319.0 793.4 L1318.0 801.2 L1317.0 808.9 L1316.0 816.4 L1315.0 823.9 L1314.0 831.3 L1313.0 838.6 L1312.0 845.8 L1311.0 852.8 L1310.0 859.7 L1309.0 866.5 L1308.0 873.2 L1307.0 879.8 L1306.0 886.2 L1305.0 892.5 L1304.0 898.7 L1303.0 904.8 L1302.0 910.7 L1301.0 916.5 L1300.0 922.1 L1299.0 927.6 L1298.0 932.9 L1297.0 938.1 L1296.0 943.2 L1295.0 948.1 L1294.0 952.9 L1293.0 957.5 L1292.0 962.0 L1291.0 966.3 L1290.0 970.4 L1289.0 974.3 L1288.0 977.9 L1287.0 981.3 L1286.0 984.5 L1285.0 987.3 L1284.0 990.0 L1283.0 992.4 L1282.0 994.6 L1281.0 996.5 L1280.0 998.3 L1279.0 999.9 L1278.0 1001.2 L1277.0 1002.5 L1276.0 1003.5 L1275.0 1004.4 L1274.0 1005.2 L1273.0 1005.9 L1272.0 1006.4 L1271.0 1006.9 L1270.0 1007.3 L1269.0 1007.6 L1268.0 1007.8 L1267.0 1007.9 L1266.0 1008.0 L1265.0 1008.0 L1264.0 1007.9 L1263.0 1007.8 L1262.0 1007.6 L1261.0 1007.3 L1260.0 1007.0 L1259.0 1006.5 L1258.0 1006.0 L1257.0 1005.4 L1256.0 1004.6 L1255.0 1003.7 L1254.0 1002.7 L1253.0 1001.5 L1252.0 1000.1 L1251.0 998.6 L1250.0 996.9 L1249.0 995.0 L1248.0 992.8 L1247.0 990.5 L1246.0 987.9 L1245.0 985.1 L1244.0 982.0 L1243.0 978.6 L1242.0 975.1 L1241.0 971.2 L1240.0 967.1 L1239.0 962.8 L1238.0 958.4 L1237.0 953.8 L1236.0 949.1 L1235.0 944.2 L1234.0 939.2 L1233.0 934.0 L1232.0 928.7 L1231.0 923.2 L1230.0 917.6 L1229.0 911.8 L1228.0 906.0 L1227.0 899.9 L1226.0 893.8 L1225.0 887.5 L1224.0 881.1 L1223.0 874.6 L1222.0 867.9 L1221.0 861.1 L1220.0 854.2 L1219.0 847.2 L1218.0 840.0 L1217.0 832.8 L1216.0 825.4 L1215.0 818.0 L1214.0 810.4 L1213.0 802.7 L1212.0 794.9 L1211.0 787.1 L1210.0 779.1 L1209.0 771.1 L1208.0 762.9 L1207.0 754.7 L1206.0 746.4 L1205.0 738.1 L1204.0 729.6 L1203.0 721.1 L1202.0 712.5 L1201.0 703.9 L1200.0 695.2 L1199.0 686.5 L1198.0 677.7 L1197.0 668.8 L1196.0 659.9 L1195.0 651.0 L1194.0 642.0 L1193.0 633.1 L1192.0 624.0 L1191.0 615.1 L1190.0 606.1 L1189.0 597.2 L1188.0 588.3 L1187.0 579.5 L1186.0 570.7 L1185.0 561.9 L1184.0 553.2 L1183.0 544.6 L1182.0 536.0 L1181.0 527.5 L1180.0 519.1 L1179.0 510.7 L1178.0 502.5 L1177.0 494.2 L1176.0 486.1 L1175.0 478.1 L1174.0 470.1 L1173.0 462.3 L1172.0 454.5 L1171.0 446.9 L1170.0 439.3 L1169.0 431.8 L1168.0 424.5 L1167.0 417.2 L1166.0 410.1 L1165.0 403.1 L1164.0 396.2 L1163.0 389.4 L1162.0 382.8 L1161.0 376.3 L1160.0 369.9 L1159.0 363.6 L1158.0 357.4 L1157.0 351.4 L1156.0 345.6 L1155.0 339.8 L1154.0 334.2 L1153.0 328.8 L1152.0 323.5 L1151.0 318.3 L1150.0 313.3 L1149.0 308.4 L1148.0 303.7 L1147.0 299.2 L1146.0 294.7 L1145.0 290.5 L1144.0 286.4 L1143.0 282.6 L1142.0 279.0 L1141.0 275.7 L1140.0 272.6 L1139.0 269.8 L1138.0 267.3 L1137.0 264.9 L1136.0 262.8 L1135.0 260.9 L1134.0 259.2 L1133.0 257.7 L1132.0 256.4 L1131.0 255.2 L1130.0 254.2 L1129.0 253.3 L1128.0 252.6 L1127.0 251.9 L1126.0 251.4 L1125.0 251.0 L1124.0 250.6 L1123.0 250.4 L1122.0 250.2 L1121.0 250.1 L1120.0 250.0 L1119.0 250.0 L1118.0 250.1 L1117.0 250.2 L1116.0 250.5 L1115.0 250.8 L1114.0 251.1 L1113.0 251.6 L1112.0 252.2 L1111.0 252.9 L1110.0 253.7 L1109.0 254.6 L1108.0 255.7 L1107.0 256.9 L1106.0 258.3 L1105.0 259.9 L1104.0 261.7 L1103.0 263.6 L1102.0 265.8 L1101.0 268.3 L1100.0 270.9 L1099.0 273.8 L1098.0 277.0 L1097.0 280.4 L1096.0 284.1 L1095.0 288.0 L1094.0 292.2 L1093.0 296.5 L1092.0 301.0 L1091.0 305.6 L1090.0 310.4 L1089.0 315.3 L1088.0 320.4 L1087.0 325.6 L1086.0 331.0 L1085.0 336.5 L1084.0 342.1 L1083.0 347.9 L1082.0 353.8 L1081.0 359.9 L1080.0 366.1 L1079.0 372.4 L1078.0 378.9 L1077.0 385.4 L1076.0 392.1 L1075.0 399.0 L1074.0 405.9 L1073.0 413.0 L1072.0 420.1 L1071.0 427.4 L1070.0 434.8 L1069.0 442.3 L1068.0 449.9 L1067.0 457.6 L1066.0 465.4 L1065.0 473.3 L1064.0 481.3 L1063.0 489.4 L1062.0 497.5 L1061.0 505.8 L1060.0 514.1 L1059.0 522.5 L1058.0 530.9 L1057.0 539.5 L1056.0 548.1 L1055.0 556.7 L1054.0 565.4 L1053.0 574.2 L1052.0 583.0 L1051.0 591.9 L1050.0 600.7 L1049.0 609.7 L1048.0 618.7 L1047.0 627.6 L1046.0 636.7 L1045.0 645.6 L1044.0 654.6 L1043.0 663.5 L1042.0 672.4 L1041.0 681.2 L1040.0 690.0 L1039.0 698.7 L1038.0 707.4 L1037.0 716.0 L1036.0 724.5 L1035.0 733.0 L1034.0 741.4 L1033.0 749.8 L1032.0 758.0 L1031.0 766.2 L1030.0 774.3 L1029.0 782.3 L1028.0 790.2 L1027.0 798.1 L1026.0 805.8 L1025.0 813.4 L1024.0 821.0 L1023.0 828.4 L1022.0 835.7 L1021.0 842.9 L1020.0 850.0 L1019.0 857.0 L1018.0 863.8 L1017.0 870.6 L1016.0 877.2 L1015.0 883.7 L1014.0 890.0 L1013.0 896.3 L1012.0 902.4 L1011.0 908.3 L1010.0 914.2 L1009.0 919.9 L1008.0 925.4 L1007.0 930.8 L1006.0 936.1 L1005.0 941.2 L1004.0 946.2 L1003.0 951.0 L1002.0 955.7 L1001.0 960.2 L1000.0 964.6 L999.0 968.8 L998.0 972.8 L997.0 976.5 L996.0 980.0 L995.0 983.2 L994.0 986.2 L993.0 989.0 L992.0 991.5 L991.0 993.7 L990.0 995.8 L989.0 997.6 L988.0 999.2 L987.0 1000.7 L986.0 1002.0 L985.0 1003.1 L984.0 1004.1 L983.0 1004.9 L982.0 1005.6 L981.0 1006.2 L980.0 1006.7 L979.0 1007.1 L978.0 1007.5 L977.0 1007.7 L976.0 1007.9 L975.0 1008.0 L974.0 1008.0 L973.0 1008.0 L972.0 1007.9 L971.0 1007.7 L970.0 1007.5 L969.0 1007.1 L968.0 1006.7 L967.0 1006.2 L966.0 1005.6 L965.0 1004.9 L964.0 1004.1 L963.0 1003.1 L962.0 1002.0 L961.0 1000.7 L960.0 999.2 L959.0 997.6 L958.0 995.8 L957.0 993.7 L956.0 991.5 L955.0 989.0 L954.0 986.2 L953.0 983.2 L952.0 980.0 L951.0 976.5 L950.0 972.8 L949.0 968.8 L948.0 964.6 L947.0 960.2 L946.0 955.7 L945.0 951.0 L944.0 946.2 L943.0 941.2 L942.0 936.1 L941.0 930.8 L940.0 925.4 L939.0 919.9 L938.0 914.2 L937.0 908.3 L936.0 902.4 L935.0 896.3 L934.0 890.0 L933.0 883.7 L932.0 877.2 L931.0 870.6 L930.0 863.8 L929.0 857.0 L928.0 850.0 L927.0 842.9 L926.0 835.7 L925.0 828.4 L924.0 821.0 L923.0 813.4 L922.0 805.8 L921.0 798.1 L920.0 790.2 L919.0 782.3 L918.0 774.3 L917.0 766.2 L916.0 758.0 L915.0 749.8 L914.0 741.4 L913.0 733.0 L912.0 724.5 L911.0 716.0 L910.0 707.4 L909.0 698.7 L908.0 690.0 L907.0 681.2 L906.0 672.4 L905.0 663.5 L904.0 654.6 L903.0 645.6 L902.0 636.7 L901.0 627.6 L900.0 618.7 L899.0 609.7 L898.0 600.7 L897.0 591.9 L896.0 583.0 L895.0 574.2 L894.0 565.4 L893.0 556.7 L892.0 548.1 L891.0 539.5 L890.0 530.9 L889.0 522.5 L888.0 514.1 L887.0 505.8 L886.0 497.5 L885.0 489.4 L884.0 481.3 L883.0 473.3 L882.0 465.4 L881.0 457.6 L880.0 449.9 L879.0 442.3 L878.0 434.8 L877.0 427.4 L876.0 420.1 L875.0 413.0 L874.0 405.9 L873.0 399.0 L872.0 392.1 L871.0 385.4 L870.0 378.9 L869.0 372.4 L868.0 366.1 L867.0 359.9 L866.0 353.8 L865.0 347.9 L864.0 342.1 L863.0 336.5 L862.0 331.0 L861.0 325.6 L860.0 320.4 L859.0 315.3 L858.0 310.4 L857.0 305.6 L856.0 301.0 L855.0 296.5 L854.0 292.2 L853.0 288.0 L852.0 284.1 L851.0 280.4 L850.0 277.0 L849.0 273.8 L848.0 270.9 L847.0 268.3 L846.0 265.8 L845.0 263.6 L844.0 261.7 L843.0 259.9 L842.0 258.3 L841.0 256.9 L840.0 255.7 L839.0 254.6 L838.0 253.7 L837.0 252.9 L836.0 252.2 L835.0 251.6 L834.0 251.1 L833.0 250.8 L832.0 250.5 L831.0 250.2 L830.0 250.1 L829.0 250.0 L828.0 250.0 L827.0 250.1 L826.0 250.2 L825.0 250.4 L824.0 250.6 L823.0 251.0 L822.0 251.4 L821.0 251.9 L820.0 252.6 L819.0 253.3 L818.0 254.2 L817.0 255.2 L816.0 256.4 L815.0 257.7 L814.0 259.2 L813.0 260.9 L812.0 262.8 L811.0 264.9 L810.0 267.3 L809.0 269.8 L808.0 272.6 L807.0 275.7 L806.0 279.0 L805.0 282.6 L804.0 286.4 L803.0 290.5 L802.0 294.7 L801.0 299.2 L800.0 303.7 L799.0 308.4 L798.0 313.3 L797.0 318.3 L796.0 323.5 L795.0 328.8 L794.0 334.2 L793.0 339.8 L792.0 345.6 L791.0 351.4 L790.0 357.4 L789.0 363.6 L788.0 369.9 L787.0 376.3 L786.0 382.8 L785.0 389.4 L784.0 396.2 L783.0 403.1 L782.0 410.1 L781.0 417.2 L780.0 424.5 L779.0 431.8 L778.0 439.3 L777.0 446.9 L776.0 454.5 L775.0 462.3 L774.0 470.1 L773.0 478.1 L772.0 486.1 L771.0 494.2 L770.0 502.5 L769.0 510.7 L768.0 519.1 L767.0 527.5 L766.0 536.0 L765.0 544.6 L764.0 553.2 L763.0 561.9 L762.0 570.7 L761.0 579.5 L760.0 588.3 L759.0 597.2 L758.0 606.1 L757.0 615.1 L756.0 624.0 L755.0 633.1 L754.0 642.0 L753.0 651.0 L752.0 659.9 L751.0 668.8 L750.0 677.7 L749.0 686.5 L748.0 695.2 L747.0 703.9 L746.0 712.5 L745.0 721.1 L744.0 729.6 L743.0 738.1 L742.0 746.4 L741.0 754.7 L740.0 762.9 L739.0 771.1 L738.0 779.1 L737.0 787.1 L736.0 794.9 L735.0 802.7 L734.0 810.4 L733.0 818.0 L732.0 825.4 L731.0 832.8 L730.0 840.0 L729.0 847.2 L728.0 854.2 L727.0 861.1 L726.0 867.9 L725.0 874.6 L724.0 881.1 L723.0 887.5 L722.0 893.8 L721.0 899.9 L720.0 906.0 L719.0 911.8 L718.0 917.6 L717.0 923.2 L716.0 928.7 L715.0 934.0 L714.0 939.2 L713.0 944.2 L712.0 949.1 L711.0 953.8 L710.0 958.4 L709.0 962.8 L708.0 967.1 L707.0 971.2 L706.0 975.1 L705.0 978.6 L704.0 982.0 L703.0 985.1 L702.0 987.9 L701.0 990.5 L700.0 992.8 L699.0 995.0 L698.0 996.9 L697.0 998.6 L696.0 1000.1 L695.0 1001.5 L694.0 1002.7 L693.0 1003.7 L692.0 1004.6 L691.0 1005.4 L690.0 1006.0 L689.0 1006.5 L688.0 1007.0 L687.0 1007.3 L686.0 1007.6 L685.0 1007.8 L684.0 1007.9 L683.0 1008.0 L682.0 1008.0 L681.0 1007.9 L680.0 1007.8 L679.0 1007.6 L678.0 1007.3 L677.0 1006.9 L676.0 1006.4 L675.0 1005.9 L674.0 1005.2 L673.0 1004.4 L672.0 1003.5 L671.0 1002.5 L670.0 1001.2 L669.0 999.9 L668.0 998.3 L667.0 996.5 L666.0 994.6 L665.0 992.4 L664.0 990.0 L663.0 987.3 L662.0 984.5 L661.0 981.3 L660.0 977.9 L659.0 974.3 L658.0 970.4 L657.0 966.3 L656.0 962.0 L655.0 957.5 L654.0 952.9 L653.0 948.1 L652.0 943.2 L651.0 938.1 L650.0 932.9 L649.0 927.6 L648.0 922.1 L647.0 916.5 L646.0 910.7 L645.0 904.8 L644.0 898.7 L643.0 892.5 L642.0 886.2 L641.0 879.8 L640.0 873.2 L639.0 866.5 L638.0 859.7 L637.0 852.8 L636.0 845.8 L635.0 838.6 L634.0 831.3 L633.0 823.9 L632.0 816.4 L631.0 808.9 L630.0 801.2 L629.0 793.4 L628.0 785.5 L627.0 777.5 L626.0 769.4 L625.0 761.3 L624.0 753.1 L623.0 744.8 L622.0 736.4 L621.0 727.9 L620.0 719.4 L619.0 710.8 L618.0 702.2 L617.0 693.5 L616.0 684.7 L615.0 675.9 L614.0 667.0 L613.0 658.1 L612.0 649.2 L611.0 640.2 L610.0 631.3 L609.0 622.2 L608.0 613.3 L607.0 604.3 L606.0 595.4 L605.0 586.5 L604.0 577.7 L603.0 568.9 L602.0 560.2 L601.0 551.5 L600.0 542.9 L599.0 534.3 L598.0 525.8 L597.0 517.4 L596.0 509.1 L595.0 500.8 L594.0 492.6 L593.0 484.5 L592.0 476.5 L591.0 468.6 L590.0 460.7 L589.0 453.0 L588.0 445.3 L587.0 437.8 L586.0 430.4 L585.0 423.0 L584.0 415.8 L583.0 408.7 L582.0 401.7 L581.0 394.8 L580.0 388.1 L579.0 381.5 L578.0 375.0 L577.0 368.6 L576.0 362.3 L575.0 356.2 L574.0 350.3 L573.0 344.4 L572.0 338.7 L571.0 333.1 L570.0 327.7 L569.0 322.4 L568.0 317.3 L567.0 312.3 L566.0 307.5 L565.0 302.8 L564.0 298.3 L563.0 293.9 L562.0 289.6 L561.0 285.6 L560.0 281.8 L559.0 278.3 L558.0 275.1 L557.0 272.1 L556.0 269.3 L555.0 266.8 L554.0 264.5 L553.0 262.4 L552.0 260.6 L551.0 258.9 L550.0 257.4 L549.0 256.1 L548.0 255.0 L547.0 254.0 L546.0 253.2 L545.0 252.4 L544.0 251.8 L543.0 251.3 L542.0 250.9 L541.0 250.6 L540.0 250.3 L539.0 250.1 L538.0 250.0 L537.0 250.0 L536.0 250.0 L535.0 250.1 L534.0 250.3 L533.0 250.5 L532.0 250.8 L531.0 251.2 L530.0 251.7 L529.0 252.3 L528.0 253.0 L527.0 253.8 L526.0 254.8 L525.0 255.9 L524.0 257.2 L523.0 258.6 L522.0 260.2 L521.0 262.0 L520.0 264.1 L519.0 266.3 L518.0 268.8 L517.0 271.5 L516.0 274.4 L515.0 277.7 L514.0 281.1 L513.0 284.8 L512.0 288.8 L511.0 293.0 L510.0 297.4 L509.0 301.9 L508.0 306.5 L507.0 311.3 L506.0 316.3 L505.0 321.4 L504.0 326.7 L503.0 332.1 L502.0 337.6 L501.0 343.3 L500.0 349.1 L499.0 355.0 L498.0 361.1 L497.0 367.3 L496.0 373.7 L495.0 380.2 L494.0 386.8 L493.0 393.5 L492.0 400.3 L491.0 407.3 L490.0 414.4 L489.0 421.6 L488.0 428.9 L487.0 436.3 L486.0 443.8 L485.0 451.4 L484.0 459.2 L483.0 467.0 L482.0 474.9 L481.0 482.9 L480.0 491.0 L479.0 499.2 L478.0 507.4 L477.0 515.7 L476.0 524.2 L475.0 532.6 L474.0 541.2 L473.0 549.8 L472.0 558.4 L471.0 567.2 L470.0 575.9 L469.0 584.8 L468.0 593.6 L467.0 602.5 L466.0 611.5 L465.0 620.4 L464.0 629.5 L463.0 638.4 L462.0 647.4 L461.0 656.4 L460.0 665.3 L459.0 674.1 L458.0 682.9 L457.0 691.7 L456.0 700.4 L455.0 709.1 L454.0 717.7 L453.0 726.2 L452.0 734.7 L451.0 743.1 L450.0 751.4 L449.0 759.7 L448.0 767.8 L447.0 775.9 L446.0 783.9 L445.0 791.8 L444.0 799.6 L443.0 807.3 L442.0 814.9 L441.0 822.4 L440.0 829.9 L439.0 837.1 L438.0 844.3 L437.0 851.4 L436.0 858.4 L435.0 865.2 L434.0 871.9 L433.0 878.5 L432.0 885.0 L431.0 891.3 L430.0 897.5 L429.0 903.6 L428.0 909.5 L427.0 915.3 L426.0 921.0 L425.0 926.5 L424.0 931.9 L423.0 937.1 L422.0 942.2 L421.0 947.1 L420.0 951.9 L419.0 956.6 L418.0 961.1 L417.0 965.4 L416.0 969.6 L415.0 973.5 L414.0 977.2 L413.0 980.7 L412.0 983.9 L411.0 986.8 L410.0 989.5 L409.0 991.9 L408.0 994.1 L407.0 996.2 L406.0 997.9 L405.0 999.6 L404.0 1001.0 L403.0 1002.2 L402.0 1003.3 L401.0 1004.3 L400.0 1005.1 L399.0 1005.8 L398.0 1006.3 L397.0 1006.8 L396.0 1007.2 L395.0 1007.5 L394.0 1007.7 L393.0 1007.9 L392.0 1008.0 L391.0 1008.0 L390.0 1008.0 L389.0 1007.8 L388.0 1007.7 L387.0 1007.4 L386.0 1007.1 L385.0 1006.6 L384.0 1006.1 L383.0 1005.5 L382.0 1004.8 L381.0 1003.9 L380.0 1002.9 L379.0 1001.7 L378.0 1000.4 L377.0 998.9 L376.0 997.3 L375.0 995.4 L374.0 993.3 L373.0 991.0 L372.0 988.4 L371.0 985.6 L370.0 982.6 L369.0 979.3 L368.0 975.8 L367.0 972.0 L366.0 967.9 L365.0 963.7 L364.0 959.3 L363.0 954.7 L362.0 950.0 L361.0 945.2 L360.0 940.2 L359.0 935.0 L358.0 929.7 L357.0 924.3 L356.0 918.7 L355.0 913.0 L354.0 907.2 L353.0 901.2 L352.0 895.0 L351.0 888.8 L350.0 882.4 L349.0 875.9 L348.0 869.2 L347.0 862.5 L346.0 855.6 L345.0 848.6 L344.0 841.5 L343.0 834.2 L342.0 826.9 L341.0 819.5 L340.0 811.9 L339.0 804.3 L338.0 796.5 L337.0 788.7 L336.0 780.7 L335.0 772.7 L334.0 764.6 L333.0 756.4 L332.0 748.1 L331.0 739.7 L330.0 731.3 L329.0 722.8 L328.0 714.3 L327.0 705.6 L326.0 696.9 L325.0 688.2 L324.0 679.4 L323.0 670.6 L322.0 661.7 L321.0 652.8 L320.0 643.8 L319.0 634.9 L318.0 625.8 L317.0 616.9 L316.0 607.9 L315.0 599.0 L314.0 590.1 L313.0 581.2 L312.0 572.4 L311.0 563.7 L310.0 555.0 L309.0 546.3 L308.0 537.7 L307.0 529.2 L306.0 520.8 L305.0 512.4 L304.0 504.1 L303.0 495.9 L302.0 487.7 L301.0 479.7 L300.0 471.7 L299.0 463.8 L298.0 456.1 L297.0 448.4 L296.0 440.8 L295.0 433.3 L294.0 425.9 L293.0 418.7 L292.0 411.5 L291.0 404.5 L290.0 397.6 L289.0 390.8 L288.0 384.1 L287.0 377.6 L286.0 371.1 L285.0 364.8 L284.0 358.7 L283.0 352.6 L282.0 346.7 L281.0 341.0 L280.0 335.4 L279.0 329.9 L278.0 324.5 L277.0 319.3 L276.0 314.3 L275.0 309.4 L274.0 304.7 L273.0 300.1 L272.0 295.6 L271.0 291.3 L270.0 287.2 L269.0 283.3 L268.0 279.7 L267.0 276.3 L266.0 273.2 L265.0 270.4 L264.0 267.8 L263.0 265.4 L262.0 263.2 L261.0 261.3 L260.0 259.5 L259.0 258.0 L258.0 256.6 L257.0 255.4 L256.0 254.4 L255.0 253.5 L254.0 252.7 L253.0 252.1 L252.0 251.5 L251.0 251.1 L250.0 250.7 L249.0 250.4 L248.0 250.2 L247.0 250.1 L246.0 250.0 L245.0 250.0 L244.0 250.1 L243.0 250.2 L242.0 250.4 L241.0 250.7 L240.0 251.1 L239.0 251.5 L238.0 252.1 L237.0 252.7 L236.0 253.5 L235.0 254.4 L234.0 255.4 L233.0 256.6 L232.0 258.0 L231.0 259.5 L230.0 261.3 L229.0 263.2 L228.0 265.4 L227.0 267.8 L226.0 270.4 L225.0 273.2 L224.0 276.3 L223.0 279.7 L222.0 283.3 L221.0 287.2 L220.0 291.3 L219.0 295.6 L218.0 300.1 L217.0 304.7 L216.0 309.4 L215.0 314.3 L214.0 319.3 L213.0 324.5 L212.0 329.9 L211.0 335.4 L210.0 341.0 L209.0 346.7 L208.0 352.6 L207.0 358.7 L206.0 364.8 L205.0 371.1 L204.0 377.6 L203.0 384.1 L202.0 390.8 L201.0 397.6 L200.0 404.5 L199.0 411.5 L198.0 418.7 L197.0 425.9 L196.0 433.3 L195.0 440.8 L194.0 448.4 L193.0 456.1 L192.0 463.8 L191.0 471.7 L190.0 479.7 L189.0 487.7 L188.0 495.9 L187.0 504.1 L186.0 512.4 L185.0 520.8 L184.0 529.2 L183.0 537.7 L182.0 546.3 L181.0 555.0 L180.0 563.7 L179.0 572.4 L178.0 581.2 L177.0 590.1 L176.0 599.0 L175.0 607.9 L174.0 616.9 L173.0 625.8 L172.0 634.9 L171.0 643.8 L170.0 652.8 L169.0 661.7 L168.0 670.6 L167.0 679.4 L166.0 688.2 L165.0 696.9 L164.0 705.6 L163.0 714.3 L162.0 722.8 L161.0 731.3 L160.0 739.7 L159.0 748.1 L158.0 756.4 L157.0 764.6 L156.0 772.7 L155.0 780.7 L154.0 788.7 L153.0 796.5 L152.0 804.3 L151.0 811.9 L150.0 819.5 L149.0 826.9 L148.0 834.2 L147.0 841.5 L146.0 848.6 L145.0 855.6 L144.0 862.5 L143.0 869.2 L142.0 875.9 L141.0 882.4 L140.0 888.8 L139.0 895.0 L138.0 901.2 L137.0 907.2 L136.0 913.0 L135.0 918.7 L134.0 924.3 L133.0 929.7 L132.0 935.0 L131.0 940.2 L130.0 945.2 L129.0 950.0 L128.0 954.7 L127.0 959.3 L126.0 963.7 L125.0 967.9 L124.0 972.0 L123.0 975.8 L122.0 979.3 L121.0 982.6 L120.0 985.6 L119.0 988.4 L118.0 991.0 L117.0 993.3 L116.0 995.4 L115.0 997.3 L114.0 998.9 L113.0 1000.4 L112.0 1001.7 L111.0 1002.9 L110.0 1003.9 L109.0 1004.8 L108.0 1005.5 L107.0 1006.1 L106.0 1006.6 L105.0 1007.1 L104.0 1007.4 L103.0 1007.7 L102.0 1007.8 L101.0 1008.0 L100.0 1008.0 L99.0 1008.0 L98.0 1007.9 L97.0 1007.7 L96.0 1007.5 L95.0 1007.2 L94.0 1006.8 L93.0 1006.3 L92.0 1005.8 L91.0 1005.1 L90.0 1004.3 L89.0 1003.3 L88.0 1002.2 L87.0 1001.0 L86.0 999.6 L85.0 997.9 L84.0 996.2 L83.0 994.1 L82.0 991.9 L81.0 989.5 L80.0 986.8 L79.0 983.9 L78.0 980.7 L77.0 977.2 L76.0 973.5 L75.0 969.6 L74.0 965.4 L73.0 961.1 L72.0 956.6 L71.0 951.9 L70.0 947.1 L69.0 942.2 L68.0 937.1 L67.0 931.9 L66.0 926.5 L65.0 921.0 L64.0 915.3 L63.0 909.5 L62.0 903.6 L61.0 897.5 L60.0 891.3 L59.0 885.0 L58.0 878.5Z" fill="#00f4f4" stroke="#00f4f4" stroke-width="3.4" stroke-linejoin="round"/>
<path d="M58.0 778.3 L59.0 769.9 L60.0 761.4 L61.0 752.9 L62.0 744.3 L63.0 735.6 L64.0 726.9 L65.0 718.1 L66.0 709.3 L67.0 700.5 L68.0 691.6 L69.0 682.7 L70.0 673.8 L71.0 664.8 L72.0 655.9 L73.0 646.9 L74.0 637.9 L75.0 628.9 L76.0 619.8 L77.0 610.8 L78.0 601.8 L79.0 592.8 L80.0 583.9 L81.0 574.9 L82.0 565.9 L83.0 557.0 L84.0 548.1 L85.0 539.3 L86.0 530.5 L87.0 521.7 L88.0 513.0 L89.0 504.3 L90.0 495.7 L91.0 487.2 L92.0 478.7 L93.0 470.2 L94.0 461.9 L95.0 453.6 L96.0 445.4 L97.0 437.3 L98.0 429.3 L99.0 421.3 L100.0 413.5 L101.0 405.7 L102.0 398.1 L103.0 390.5 L104.0 383.1 L105.0 375.8 L106.0 368.6 L107.0 361.5 L108.0 354.5 L109.0 347.7 L110.0 340.9 L111.0 334.4 L112.0 327.9 L113.0 321.6 L114.0 315.4 L115.0 309.4 L116.0 303.5 L117.0 297.8 L118.0 292.2 L119.0 286.7 L120.0 281.5 L121.0 276.4 L122.0 271.4 L123.0 267.7 L124.0 265.0 L125.0 262.4 L126.0 259.7 L127.0 257.1 L128.0 254.5 L129.0 251.9 L130.0 249.3 L131.0 246.7 L132.0 244.2 L133.0 241.6 L134.0 239.1 L135.0 236.5 L136.0 234.0 L137.0 231.5 L138.0 229.0 L139.0 226.6 L140.0 224.1 L141.0 221.7 L142.0 219.3 L143.0 217.0 L144.0 214.6 L145.0 212.3 L146.0 210.1 L147.0 207.9 L148.0 205.9 L149.0 205.9 L150.0 207.9 L151.0 210.1 L152.0 212.3 L153.0 214.6 L154.0 217.0 L155.0 219.3 L156.0 221.7 L157.0 224.1 L158.0 226.6 L159.0 229.0 L160.0 231.5 L161.0 234.0 L162.0 236.5 L163.0 239.1 L164.0 241.6 L165.0 244.2 L166.0 246.7 L167.0 249.3 L168.0 251.9 L169.0 254.5 L170.0 257.1 L171.0 259.7 L172.0 262.4 L173.0 265.0 L174.0 267.7 L175.0 271.4 L176.0 276.4 L177.0 281.5 L178.0 286.7 L179.0 292.2 L180.0 297.8 L181.0 303.5 L182.0 309.4 L183.0 315.4 L184.0 321.6 L185.0 327.9 L186.0 334.4 L187.0 340.9 L188.0 347.7 L189.0 354.5 L190.0 361.5 L191.0 368.6 L192.0 375.8 L193.0 383.1 L194.0 390.5 L195.0 398.1 L196.0 405.7 L197.0 413.5 L198.0 421.3 L199.0 429.3 L200.0 437.3 L201.0 445.4 L202.0 453.6 L203.0 461.9 L204.0 470.2 L205.0 478.7 L206.0 487.2 L207.0 495.7 L208.0 504.3 L209.0 513.0 L210.0 521.7 L211.0 530.5 L212.0 539.3 L213.0 548.1 L214.0 557.0 L215.0 565.9 L216.0 574.9 L217.0 583.9 L218.0 592.8 L219.0 601.8 L220.0 610.8 L221.0 619.8 L222.0 628.9 L223.0 637.9 L224.0 646.9 L225.0 655.9 L226.0 664.8 L227.0 673.8 L228.0 682.7 L229.0 691.6 L230.0 700.5 L231.0 709.3 L232.0 718.1 L233.0 726.9 L234.0 735.6 L235.0 744.3 L236.0 752.9 L237.0 761.4 L238.0 769.9 L239.0 778.3 L240.0 786.6 L241.0 794.9 L242.0 803.0 L243.0 811.1 L244.0 819.1 L245.0 827.0 L246.0 834.9 L247.0 842.6 L248.0 850.2 L249.0 857.7 L250.0 865.1 L251.0 872.4 L252.0 879.6 L253.0 886.6 L254.0 893.6 L255.0 900.4 L256.0 907.0 L257.0 913.6 L258.0 920.0 L259.0 926.3 L260.0 932.4 L261.0 938.4 L262.0 944.2 L263.0 949.9 L264.0 955.5 L265.0 960.9 L266.0 966.1 L267.0 971.1 L268.0 976.1 L269.0 979.1 L270.0 981.8 L271.0 984.4 L272.0 987.1 L273.0 989.7 L274.0 992.3 L275.0 994.9 L276.0 997.5 L277.0 1000.0 L278.0 1002.6 L279.0 1005.2 L280.0 1007.7 L281.0 1010.2 L282.0 1012.7 L283.0 1015.2 L284.0 1017.7 L285.0 1020.2 L286.0 1022.6 L287.0 1025.0 L288.0 1027.4 L289.0 1029.7 L290.0 1032.1 L291.0 1034.3 L292.0 1036.6 L293.0 1038.7 L294.0 1040.7 L295.0 1039.5 L296.0 1037.4 L297.0 1035.2 L298.0 1033.0 L299.0 1030.7 L300.0 1028.3 L301.0 1026.0 L302.0 1023.6 L303.0 1021.1 L304.0 1018.7 L305.0 1016.2 L306.0 1013.7 L307.0 1011.2 L308.0 1008.7 L309.0 1006.2 L310.0 1003.6 L311.0 1001.1 L312.0 998.5 L313.0 995.9 L314.0 993.3 L315.0 990.7 L316.0 988.1 L317.0 985.5 L318.0 982.8 L319.0 980.2 L320.0 977.5 L321.0 973.1 L322.0 968.1 L323.0 963.0 L324.0 957.6 L325.0 952.2 L326.0 946.5 L327.0 940.7 L328.0 934.8 L329.0 928.7 L330.0 922.5 L331.0 916.2 L332.0 909.7 L333.0 903.1 L334.0 896.3 L335.0 889.4 L336.0 882.4 L337.0 875.3 L338.0 868.0 L339.0 860.7 L340.0 853.2 L341.0 845.6 L342.0 838.0 L343.0 830.2 L344.0 822.3 L345.0 814.3 L346.0 806.3 L347.0 798.1 L348.0 789.9 L349.0 781.6 L350.0 773.2 L351.0 764.8 L352.0 756.3 L353.0 747.7 L354.0 739.1 L355.0 730.4 L356.0 721.7 L357.0 712.9 L358.0 704.1 L359.0 695.2 L360.0 686.3 L361.0 677.4 L362.0 668.4 L363.0 659.5 L364.0 650.5 L365.0 641.5 L366.0 632.5 L367.0 623.5 L368.0 614.4 L369.0 605.4 L370.0 596.4 L371.0 587.4 L372.0 578.5 L373.0 569.5 L374.0 560.6 L375.0 551.7 L376.0 542.8 L377.0 534.0 L378.0 525.2 L379.0 516.5 L380.0 507.8 L381.0 499.2 L382.0 490.6 L383.0 482.1 L384.0 473.6 L385.0 465.2 L386.0 456.9 L387.0 448.7 L388.0 440.5 L389.0 432.5 L390.0 424.5 L391.0 416.6 L392.0 408.8 L393.0 401.1 L394.0 393.5 L395.0 386.1 L396.0 378.7 L397.0 371.4 L398.0 364.3 L399.0 357.3 L400.0 350.4 L401.0 343.6 L402.0 337.0 L403.0 330.5 L404.0 324.1 L405.0 317.9 L406.0 311.8 L407.0 305.8 L408.0 300.0 L409.0 294.4 L410.0 288.9 L411.0 283.6 L412.0 278.4 L413.0 273.4 L414.0 268.7 L415.0 266.1 L416.0 263.4 L417.0 260.8 L418.0 258.2 L419.0 255.5 L420.0 252.9 L421.0 250.3 L422.0 247.8 L423.0 245.2 L424.0 242.6 L425.0 240.1 L426.0 237.5 L427.0 235.0 L428.0 232.5 L429.0 230.0 L430.0 227.6 L431.0 225.1 L432.0 222.7 L433.0 220.3 L434.0 217.9 L435.0 215.6 L436.0 213.2 L437.0 211.0 L438.0 208.8 L439.0 206.7 L440.0 205.2 L441.0 207.1 L442.0 209.2 L443.0 211.4 L444.0 213.7 L445.0 216.0 L446.0 218.4 L447.0 220.7 L448.0 223.2 L449.0 225.6 L450.0 228.0 L451.0 230.5 L452.0 233.0 L453.0 235.5 L454.0 238.0 L455.0 240.6 L456.0 243.1 L457.0 245.7 L458.0 248.3 L459.0 250.9 L460.0 253.5 L461.0 256.1 L462.0 258.7 L463.0 261.3 L464.0 263.9 L465.0 266.6 L466.0 269.5 L467.0 274.4 L468.0 279.4 L469.0 284.6 L470.0 290.0 L471.0 295.5 L472.0 301.2 L473.0 307.0 L474.0 313.0 L475.0 319.1 L476.0 325.4 L477.0 331.8 L478.0 338.3 L479.0 345.0 L480.0 351.8 L481.0 358.7 L482.0 365.7 L483.0 372.9 L484.0 380.2 L485.0 387.5 L486.0 395.1 L487.0 402.7 L488.0 410.4 L489.0 418.2 L490.0 426.1 L491.0 434.1 L492.0 442.2 L493.0 450.3 L494.0 458.6 L495.0 466.9 L496.0 475.3 L497.0 483.8 L498.0 492.3 L499.0 500.9 L500.0 509.5 L501.0 518.2 L502.0 527.0 L503.0 535.8 L504.0 544.6 L505.0 553.5 L506.0 562.4 L507.0 571.3 L508.0 580.3 L509.0 589.2 L510.0 598.2 L511.0 607.2 L512.0 616.2 L513.0 625.3 L514.0 634.3 L515.0 643.3 L516.0 652.3 L517.0 661.3 L518.0 670.2 L519.0 679.2 L520.0 688.1 L521.0 697.0 L522.0 705.8 L523.0 714.6 L524.0 723.4 L525.0 732.1 L526.0 740.8 L527.0 749.4 L528.0 758.0 L529.0 766.5 L530.0 774.9 L531.0 783.3 L532.0 791.6 L533.0 799.8 L534.0 807.9 L535.0 815.9 L536.0 823.9 L537.0 831.7 L538.0 839.5 L539.0 847.2 L540.0 854.7 L541.0 862.2 L542.0 869.5 L543.0 876.7 L544.0 883.8 L545.0 890.8 L546.0 897.7 L547.0 904.4 L548.0 911.0 L549.0 917.5 L550.0 923.8 L551.0 930.0 L552.0 936.0 L553.0 941.9 L554.0 947.7 L555.0 953.3 L556.0 958.7 L557.0 964.0 L558.0 969.1 L559.0 974.1 L560.0 978.1 L561.0 980.7 L562.0 983.4 L563.0 986.0 L564.0 988.6 L565.0 991.2 L566.0 993.8 L567.0 996.4 L568.0 999.0 L569.0 1001.6 L570.0 1004.1 L571.0 1006.7 L572.0 1009.2 L573.0 1011.7 L574.0 1014.2 L575.0 1016.7 L576.0 1019.2 L577.0 1021.6 L578.0 1024.0 L579.0 1026.4 L580.0 1028.8 L581.0 1031.1 L582.0 1033.4 L583.0 1035.7 L584.0 1037.8 L585.0 1039.9 L586.0 1040.3 L587.0 1038.3 L588.0 1036.1 L589.0 1033.9 L590.0 1031.6 L591.0 1029.3 L592.0 1026.9 L593.0 1024.5 L594.0 1022.1 L595.0 1019.7 L596.0 1017.2 L597.0 1014.7 L598.0 1012.2 L599.0 1009.7 L600.0 1007.2 L601.0 1004.7 L602.0 1002.1 L603.0 999.5 L604.0 997.0 L605.0 994.4 L606.0 991.8 L607.0 989.2 L608.0 986.5 L609.0 983.9 L610.0 981.3 L611.0 978.6 L612.0 975.1 L613.0 970.1 L614.0 965.0 L615.0 959.8 L616.0 954.4 L617.0 948.8 L618.0 943.1 L619.0 937.2 L620.0 931.2 L621.0 925.0 L622.0 918.7 L623.0 912.3 L624.0 905.7 L625.0 899.0 L626.0 892.2 L627.0 885.2 L628.0 878.1 L629.0 870.9 L630.0 863.6 L631.0 856.2 L632.0 848.7 L633.0 841.0 L634.0 833.3 L635.0 825.5 L636.0 817.5 L637.0 809.5 L638.0 801.4 L639.0 793.2 L640.0 784.9 L641.0 776.6 L642.0 768.2 L643.0 759.7 L644.0 751.1 L645.0 742.5 L646.0 733.9 L647.0 725.2 L648.0 716.4 L649.0 707.6 L650.0 698.7 L651.0 689.9 L652.0 680.9 L653.0 672.0 L654.0 663.0 L655.0 654.1 L656.0 645.1 L657.0 636.1 L658.0 627.1 L659.0 618.0 L660.0 609.0 L661.0 600.0 L662.0 591.0 L663.0 582.1 L664.0 573.1 L665.0 564.2 L666.0 555.3 L667.0 546.4 L668.0 537.5 L669.0 528.7 L670.0 520.0 L671.0 511.3 L672.0 502.6 L673.0 494.0 L674.0 485.5 L675.0 477.0 L676.0 468.6 L677.0 460.2 L678.0 452.0 L679.0 443.8 L680.0 435.7 L681.0 427.7 L682.0 419.7 L683.0 411.9 L684.0 404.2 L685.0 396.6 L686.0 389.0 L687.0 381.6 L688.0 374.3 L689.0 367.1 L690.0 360.1 L691.0 353.1 L692.0 346.3 L693.0 339.6 L694.0 333.1 L695.0 326.6 L696.0 320.3 L697.0 314.2 L698.0 308.2 L699.0 302.3 L700.0 296.6 L701.0 291.1 L702.0 285.7 L703.0 280.4 L704.0 275.4 L705.0 270.4 L706.0 267.1 L707.0 264.5 L708.0 261.8 L709.0 259.2 L710.0 256.6 L711.0 254.0 L712.0 251.4 L713.0 248.8 L714.0 246.2 L715.0 243.6 L716.0 241.1 L717.0 238.5 L718.0 236.0 L719.0 233.5 L720.0 231.0 L721.0 228.5 L722.0 226.1 L723.0 223.6 L724.0 221.2 L725.0 218.8 L726.0 216.5 L727.0 214.2 L728.0 211.9 L729.0 209.7 L730.0 207.5 L731.0 205.5 L732.0 206.3 L733.0 208.4 L734.0 210.5 L735.0 212.8 L736.0 215.1 L737.0 217.4 L738.0 219.8 L739.0 222.2 L740.0 224.6 L741.0 227.1 L742.0 229.5 L743.0 232.0 L744.0 234.5 L745.0 237.0 L746.0 239.6 L747.0 242.1 L748.0 244.7 L749.0 247.2 L750.0 249.8 L751.0 252.4 L752.0 255.0 L753.0 257.6 L754.0 260.3 L755.0 262.9 L756.0 265.5 L757.0 268.2 L758.0 272.4 L759.0 277.4 L760.0 282.5 L761.0 287.8 L762.0 293.3 L763.0 298.9 L764.0 304.7 L765.0 310.6 L766.0 316.6 L767.0 322.8 L768.0 329.2 L769.0 335.7 L770.0 342.3 L771.0 349.0 L772.0 355.9 L773.0 362.9 L774.0 370.0 L775.0 377.2 L776.0 384.6 L777.0 392.0 L778.0 399.6 L779.0 407.3 L780.0 415.0 L781.0 422.9 L782.0 430.9 L783.0 438.9 L784.0 447.0 L785.0 455.3 L786.0 463.6 L787.0 471.9 L788.0 480.4 L789.0 488.9 L790.0 497.4 L791.0 506.1 L792.0 514.7 L793.0 523.5 L794.0 532.2 L795.0 541.1 L796.0 549.9 L797.0 558.8 L798.0 567.7 L799.0 576.7 L800.0 585.6 L801.0 594.6 L802.0 603.6 L803.0 612.6 L804.0 621.6 L805.0 630.7 L806.0 639.7 L807.0 648.7 L808.0 657.7 L809.0 666.6 L810.0 675.6 L811.0 684.5 L812.0 693.4 L813.0 702.3 L814.0 711.1 L815.0 719.9 L816.0 728.6 L817.0 737.3 L818.0 746.0 L819.0 754.6 L820.0 763.1 L821.0 771.5 L822.0 779.9 L823.0 788.3 L824.0 796.5 L825.0 804.7 L826.0 812.7 L827.0 820.7 L828.0 828.6 L829.0 836.4 L830.0 844.1 L831.0 851.7 L832.0 859.2 L833.0 866.6 L834.0 873.8 L835.0 881.0 L836.0 888.0 L837.0 894.9 L838.0 901.7 L839.0 908.4 L840.0 914.9 L841.0 921.3 L842.0 927.5 L843.0 933.6 L844.0 939.6 L845.0 945.4 L846.0 951.0 L847.0 956.6 L848.0 961.9 L849.0 967.1 L850.0 972.1 L851.0 977.0 L852.0 979.7 L853.0 982.3 L854.0 985.0 L855.0 987.6 L856.0 990.2 L857.0 992.8 L858.0 995.4 L859.0 998.0 L860.0 1000.6 L861.0 1003.1 L862.0 1005.7 L863.0 1008.2 L864.0 1010.7 L865.0 1013.2 L866.0 1015.7 L867.0 1018.2 L868.0 1020.7 L869.0 1023.1 L870.0 1025.5 L871.0 1027.9 L872.0 1030.2 L873.0 1032.5 L874.0 1034.8 L875.0 1037.0 L876.0 1039.1 L877.0 1041.0 L878.0 1039.1 L879.0 1037.0 L880.0 1034.8 L881.0 1032.5 L882.0 1030.2 L883.0 1027.9 L884.0 1025.5 L885.0 1023.1 L886.0 1020.7 L887.0 1018.2 L888.0 1015.7 L889.0 1013.2 L890.0 1010.7 L891.0 1008.2 L892.0 1005.7 L893.0 1003.1 L894.0 1000.6 L895.0 998.0 L896.0 995.4 L897.0 992.8 L898.0 990.2 L899.0 987.6 L900.0 985.0 L901.0 982.3 L902.0 979.7 L903.0 977.0 L904.0 972.1 L905.0 967.1 L906.0 961.9 L907.0 956.6 L908.0 951.0 L909.0 945.4 L910.0 939.6 L911.0 933.6 L912.0 927.5 L913.0 921.3 L914.0 914.9 L915.0 908.4 L916.0 901.7 L917.0 894.9 L918.0 888.0 L919.0 881.0 L920.0 873.8 L921.0 866.6 L922.0 859.2 L923.0 851.7 L924.0 844.1 L925.0 836.4 L926.0 828.6 L927.0 820.7 L928.0 812.7 L929.0 804.7 L930.0 796.5 L931.0 788.3 L932.0 779.9 L933.0 771.5 L934.0 763.1 L935.0 754.6 L936.0 746.0 L937.0 737.3 L938.0 728.6 L939.0 719.9 L940.0 711.1 L941.0 702.3 L942.0 693.4 L943.0 684.5 L944.0 675.6 L945.0 666.6 L946.0 657.7 L947.0 648.7 L948.0 639.7 L949.0 630.7 L950.0 621.6 L951.0 612.6 L952.0 603.6 L953.0 594.6 L954.0 585.6 L955.0 576.7 L956.0 567.7 L957.0 558.8 L958.0 549.9 L959.0 541.1 L960.0 532.2 L961.0 523.5 L962.0 514.7 L963.0 506.1 L964.0 497.4 L965.0 488.9 L966.0 480.4 L967.0 471.9 L968.0 463.6 L969.0 455.3 L970.0 447.0 L971.0 438.9 L972.0 430.9 L973.0 422.9 L974.0 415.0 L975.0 407.3 L976.0 399.6 L977.0 392.0 L978.0 384.6 L979.0 377.2 L980.0 370.0 L981.0 362.9 L982.0 355.9 L983.0 349.0 L984.0 342.3 L985.0 335.7 L986.0 329.2 L987.0 322.8 L988.0 316.6 L989.0 310.6 L990.0 304.7 L991.0 298.9 L992.0 293.3 L993.0 287.8 L994.0 282.5 L995.0 277.4 L996.0 272.4 L997.0 268.2 L998.0 265.5 L999.0 262.9 L1000.0 260.3 L1001.0 257.6 L1002.0 255.0 L1003.0 252.4 L1004.0 249.8 L1005.0 247.2 L1006.0 244.7 L1007.0 242.1 L1008.0 239.6 L1009.0 237.0 L1010.0 234.5 L1011.0 232.0 L1012.0 229.5 L1013.0 227.1 L1014.0 224.6 L1015.0 222.2 L1016.0 219.8 L1017.0 217.4 L1018.0 215.1 L1019.0 212.8 L1020.0 210.5 L1021.0 208.4 L1022.0 206.3 L1023.0 205.5 L1024.0 207.5 L1025.0 209.7 L1026.0 211.9 L1027.0 214.2 L1028.0 216.5 L1029.0 218.8 L1030.0 221.2 L1031.0 223.6 L1032.0 226.1 L1033.0 228.5 L1034.0 231.0 L1035.0 233.5 L1036.0 236.0 L1037.0 238.5 L1038.0 241.1 L1039.0 243.6 L1040.0 246.2 L1041.0 248.8 L1042.0 251.4 L1043.0 254.0 L1044.0 256.6 L1045.0 259.2 L1046.0 261.8 L1047.0 264.5 L1048.0 267.1 L1049.0 270.4 L1050.0 275.4 L1051.0 280.4 L1052.0 285.7 L1053.0 291.1 L1054.0 296.6 L1055.0 302.3 L1056.0 308.2 L1057.0 314.2 L1058.0 320.3 L1059.0 326.6 L1060.0 333.1 L1061.0 339.6 L1062.0 346.3 L1063.0 353.1 L1064.0 360.1 L1065.0 367.1 L1066.0 374.3 L1067.0 381.6 L1068.0 389.0 L1069.0 396.6 L1070.0 404.2 L1071.0 411.9 L1072.0 419.7 L1073.0 427.7 L1074.0 435.7 L1075.0 443.8 L1076.0 452.0 L1077.0 460.2 L1078.0 468.6 L1079.0 477.0 L1080.0 485.5 L1081.0 494.0 L1082.0 502.6 L1083.0 511.3 L1084.0 520.0 L1085.0 528.7 L1086.0 537.5 L1087.0 546.4 L1088.0 555.3 L1089.0 564.2 L1090.0 573.1 L1091.0 582.1 L1092.0 591.0 L1093.0 600.0 L1094.0 609.0 L1095.0 618.0 L1096.0 627.1 L1097.0 636.1 L1098.0 645.1 L1099.0 654.1 L1100.0 663.0 L1101.0 672.0 L1102.0 680.9 L1103.0 689.9 L1104.0 698.7 L1105.0 707.6 L1106.0 716.4 L1107.0 725.2 L1108.0 733.9 L1109.0 742.5 L1110.0 751.1 L1111.0 759.7 L1112.0 768.2 L1113.0 776.6 L1114.0 784.9 L1115.0 793.2 L1116.0 801.4 L1117.0 809.5 L1118.0 817.5 L1119.0 825.5 L1120.0 833.3 L1121.0 841.0 L1122.0 848.7 L1123.0 856.2 L1124.0 863.6 L1125.0 870.9 L1126.0 878.1 L1127.0 885.2 L1128.0 892.2 L1129.0 899.0 L1130.0 905.7 L1131.0 912.3 L1132.0 918.7 L1133.0 925.0 L1134.0 931.2 L1135.0 937.2 L1136.0 943.1 L1137.0 948.8 L1138.0 954.4 L1139.0 959.8 L1140.0 965.0 L1141.0 970.1 L1142.0 975.1 L1143.0 978.6 L1144.0 981.3 L1145.0 983.9 L1146.0 986.5 L1147.0 989.2 L1148.0 991.8 L1149.0 994.4 L1150.0 997.0 L1151.0 999.5 L1152.0 1002.1 L1153.0 1004.7 L1154.0 1007.2 L1155.0 1009.7 L1156.0 1012.2 L1157.0 1014.7 L1158.0 1017.2 L1159.0 1019.7 L1160.0 1022.1 L1161.0 1024.5 L1162.0 1026.9 L1163.0 1029.3 L1164.0 1031.6 L1165.0 1033.9 L1166.0 1036.1 L1167.0 1038.3 L1168.0 1040.3 L1169.0 1039.9 L1170.0 1037.8 L1171.0 1035.7 L1172.0 1033.4 L1173.0 1031.1 L1174.0 1028.8 L1175.0 1026.4 L1176.0 1024.0 L1177.0 1021.6 L1178.0 1019.2 L1179.0 1016.7 L1180.0 1014.2 L1181.0 1011.7 L1182.0 1009.2 L1183.0 1006.7 L1184.0 1004.1 L1185.0 1001.6 L1186.0 999.0 L1187.0 996.4 L1188.0 993.8 L1189.0 991.2 L1190.0 988.6 L1191.0 986.0 L1192.0 983.4 L1193.0 980.7 L1194.0 978.1 L1195.0 974.1 L1196.0 969.1 L1197.0 964.0 L1198.0 958.7 L1199.0 953.3 L1200.0 947.7 L1201.0 941.9 L1202.0 936.0 L1203.0 930.0 L1204.0 923.8 L1205.0 917.5 L1206.0 911.0 L1207.0 904.4 L1208.0 897.7 L1209.0 890.8 L1210.0 883.8 L1211.0 876.7 L1212.0 869.5 L1213.0 862.2 L1214.0 854.7 L1215.0 847.2 L1216.0 839.5 L1217.0 831.7 L1218.0 823.9 L1219.0 815.9 L1220.0 807.9 L1221.0 799.8 L1222.0 791.6 L1223.0 783.3 L1224.0 774.9 L1225.0 766.5 L1226.0 758.0 L1227.0 749.4 L1228.0 740.8 L1229.0 732.1 L1230.0 723.4 L1231.0 714.6 L1232.0 705.8 L1233.0 697.0 L1234.0 688.1 L1235.0 679.2 L1236.0 670.2 L1237.0 661.3 L1238.0 652.3 L1239.0 643.3 L1240.0 634.3 L1241.0 625.3 L1242.0 616.2 L1243.0 607.2 L1244.0 598.2 L1245.0 589.2 L1246.0 580.3 L1247.0 571.3 L1248.0 562.4 L1249.0 553.5 L1250.0 544.6 L1251.0 535.8 L1252.0 527.0 L1253.0 518.2 L1254.0 509.5 L1255.0 500.9 L1256.0 492.3 L1257.0 483.8 L1258.0 475.3 L1259.0 466.9 L1260.0 458.6 L1261.0 450.3 L1262.0 442.2 L1263.0 434.1 L1264.0 426.1 L1265.0 418.2 L1266.0 410.4 L1267.0 402.7 L1268.0 395.1 L1269.0 387.5 L1270.0 380.2 L1271.0 372.9 L1272.0 365.7 L1273.0 358.7 L1274.0 351.8 L1275.0 345.0 L1276.0 338.3 L1277.0 331.8 L1278.0 325.4 L1279.0 319.1 L1280.0 313.0 L1281.0 307.0 L1282.0 301.2 L1283.0 295.5 L1284.0 290.0 L1285.0 284.6 L1286.0 279.4 L1287.0 274.4 L1288.0 269.5 L1289.0 266.6 L1290.0 263.9 L1291.0 261.3 L1292.0 258.7 L1293.0 256.1 L1294.0 253.5 L1295.0 250.9 L1296.0 248.3 L1297.0 245.7 L1298.0 243.1 L1299.0 240.6 L1300.0 238.0 L1301.0 235.5 L1302.0 233.0 L1303.0 230.5 L1304.0 228.0 L1305.0 225.6 L1306.0 223.2 L1307.0 220.7 L1308.0 218.4 L1309.0 216.0 L1310.0 213.7 L1311.0 211.4 L1312.0 209.2 L1313.0 207.1 L1314.0 205.2 L1315.0 206.7 L1316.0 208.8 L1317.0 211.0 L1318.0 213.2 L1319.0 215.6 L1320.0 217.9 L1321.0 220.3 L1322.0 222.7 L1323.0 225.1 L1324.0 227.6 L1325.0 230.0 L1326.0 232.5 L1327.0 235.0 L1328.0 237.5 L1329.0 240.1 L1330.0 242.6 L1331.0 245.2 L1332.0 247.8 L1333.0 250.3 L1334.0 252.9 L1335.0 255.5 L1336.0 258.2 L1337.0 260.8 L1338.0 263.4 L1339.0 266.1 L1340.0 268.7 L1341.0 273.4 L1342.0 278.4 L1343.0 283.6 L1344.0 288.9 L1345.0 294.4 L1346.0 300.0 L1347.0 305.8 L1348.0 311.8 L1349.0 317.9 L1350.0 324.1 L1351.0 330.5 L1352.0 337.0 L1353.0 343.6 L1354.0 350.4 L1355.0 357.3 L1356.0 364.3 L1357.0 371.4 L1358.0 378.7 L1359.0 386.1 L1360.0 393.5 L1361.0 401.1 L1362.0 408.8 L1363.0 416.6 L1364.0 424.5 L1365.0 432.5 L1366.0 440.5 L1367.0 448.7 L1368.0 456.9 L1369.0 465.2 L1370.0 473.6 L1371.0 482.1 L1372.0 490.6 L1373.0 499.2 L1374.0 507.8 L1375.0 516.5 L1376.0 525.2 L1377.0 534.0 L1378.0 542.8 L1379.0 551.7 L1380.0 560.6 L1381.0 569.5 L1382.0 578.5 L1383.0 587.4 L1384.0 596.4 L1385.0 605.4 L1386.0 614.4 L1387.0 623.5 L1388.0 632.5 L1389.0 641.5 L1390.0 650.5 L1391.0 659.5 L1392.0 668.4 L1393.0 677.4 L1394.0 686.3 L1395.0 695.2 L1396.0 704.1 L1397.0 712.9 L1398.0 721.7 L1399.0 730.4 L1400.0 739.1 L1401.0 747.7 L1402.0 756.3 L1403.0 764.8 L1404.0 773.2 L1405.0 781.6 L1406.0 789.9 L1407.0 798.1 L1408.0 806.3 L1409.0 814.3 L1410.0 822.3 L1411.0 830.2 L1412.0 838.0 L1413.0 845.6 L1414.0 853.2 L1415.0 860.7 L1416.0 868.0 L1417.0 875.3 L1418.0 882.4 L1419.0 889.4 L1420.0 896.3 L1421.0 903.1 L1422.0 909.7 L1423.0 916.2 L1424.0 922.5 L1425.0 928.7 L1426.0 934.8 L1427.0 940.7 L1428.0 946.5 L1429.0 952.2 L1430.0 957.6 L1431.0 963.0 L1432.0 968.1 L1433.0 973.1 L1434.0 977.5 L1435.0 980.2 L1436.0 982.8 L1437.0 985.5 L1438.0 988.1 L1439.0 990.7 L1440.0 993.3 L1441.0 995.9 L1442.0 998.5 L1443.0 1001.1 L1444.0 1003.6 L1445.0 1006.2 L1446.0 1008.7 L1447.0 1011.2 L1448.0 1013.7 L1449.0 1016.2 L1450.0 1018.7 L1451.0 1021.1 L1452.0 1023.6 L1453.0 1026.0 L1454.0 1028.3 L1455.0 1030.7 L1456.0 1033.0 L1457.0 1035.2 L1458.0 1037.4 L1459.0 1039.5 L1460.0 1040.7 L1461.0 1038.7 L1462.0 1036.6 L1463.0 1034.3 L1464.0 1032.1 L1465.0 1029.7 L1466.0 1027.4 L1467.0 1025.0 L1468.0 1022.6 L1469.0 1020.2 L1470.0 1017.7 L1471.0 1015.2 L1472.0 1012.7 L1473.0 1010.2 L1474.0 1007.7 L1475.0 1005.2 L1476.0 1002.6 L1477.0 1000.0 L1478.0 997.5 L1479.0 994.9 L1480.0 992.3 L1481.0 989.7 L1482.0 987.1 L1483.0 984.4 L1484.0 981.8 L1485.0 979.1 L1486.0 976.1 L1487.0 971.1 L1488.0 966.1 L1489.0 960.9 L1490.0 955.5 L1491.0 949.9 L1492.0 944.2 L1493.0 938.4 L1494.0 932.4 L1495.0 926.3 L1496.0 920.0 L1497.0 913.6 L1498.0 907.0 L1499.0 900.4 L1500.0 893.6 L1501.0 886.6 L1502.0 879.6 L1503.0 872.4 L1504.0 865.1 L1505.0 857.7 L1506.0 850.2 L1507.0 842.6 L1508.0 834.9 L1509.0 827.0 L1510.0 819.1 L1511.0 811.1 L1512.0 803.0 L1513.0 794.9 L1514.0 786.6 L1515.0 778.3 L1516.0 769.9 L1517.0 761.4 L1518.0 752.9 L1519.0 744.3 L1520.0 735.6 L1521.0 726.9 L1522.0 718.1 L1523.0 709.3 L1524.0 700.5 L1525.0 691.6 L1526.0 682.7 L1527.0 673.8 L1528.0 664.8 L1529.0 655.9 L1530.0 646.9 L1530.0 646.8 L1529.0 655.7 L1528.0 664.6 L1527.0 673.4 L1526.0 682.2 L1525.0 690.9 L1524.0 699.6 L1523.0 708.3 L1522.0 716.8 L1521.0 725.3 L1520.0 733.7 L1519.0 742.1 L1518.0 750.4 L1517.0 758.6 L1516.0 766.7 L1515.0 774.7 L1514.0 782.7 L1513.0 790.5 L1512.0 798.3 L1511.0 805.9 L1510.0 813.5 L1509.0 820.9 L1508.0 828.2 L1507.0 835.5 L1506.0 842.6 L1505.0 849.6 L1504.0 856.5 L1503.0 863.2 L1502.0 869.9 L1501.0 876.4 L1500.0 882.8 L1499.0 889.0 L1498.0 895.2 L1497.0 901.2 L1496.0 907.0 L1495.0 912.7 L1494.0 918.3 L1493.0 923.7 L1492.0 929.0 L1491.0 934.2 L1490.0 939.2 L1489.0 944.0 L1488.0 948.7 L1487.0 953.3 L1486.0 957.7 L1485.0 961.9 L1484.0 966.0 L1483.0 969.8 L1482.0 973.3 L1481.0 976.6 L1480.0 979.6 L1479.0 982.4 L1478.0 985.0 L1477.0 987.3 L1476.0 989.4 L1475.0 991.3 L1474.0 992.9 L1473.0 994.4 L1472.0 995.7 L1471.0 996.9 L1470.0 997.9 L1469.0 998.8 L1468.0 999.5 L1467.0 1000.1 L1466.0 1000.6 L1465.0 1001.1 L1464.0 1001.4 L1463.0 1001.7 L1462.0 1001.8 L1461.0 1002.0 L1460.0 1002.0 L1459.0 1002.0 L1458.0 1001.9 L1457.0 1001.7 L1456.0 1001.5 L1455.0 1001.2 L1454.0 1000.8 L1453.0 1000.3 L1452.0 999.8 L1451.0 999.1 L1450.0 998.3 L1449.0 997.3 L1448.0 996.2 L1447.0 995.0 L1446.0 993.6 L1445.0 991.9 L1444.0 990.2 L1443.0 988.1 L1442.0 985.9 L1441.0 983.5 L1440.0 980.8 L1439.0 977.9 L1438.0 974.7 L1437.0 971.2 L1436.0 967.5 L1435.0 963.6 L1434.0 959.4 L1433.0 955.1 L1432.0 950.6 L1431.0 945.9 L1430.0 941.1 L1429.0 936.2 L1428.0 931.1 L1427.0 925.9 L1426.0 920.5 L1425.0 915.0 L1424.0 909.3 L1423.0 903.5 L1422.0 897.6 L1421.0 891.5 L1420.0 885.3 L1419.0 879.0 L1418.0 872.5 L1417.0 865.9 L1416.0 859.2 L1415.0 852.4 L1414.0 845.4 L1413.0 838.3 L1412.0 831.1 L1411.0 823.9 L1410.0 816.4 L1409.0 808.9 L1408.0 801.3 L1407.0 793.6 L1406.0 785.8 L1405.0 777.9 L1404.0 769.9 L1403.0 761.8 L1402.0 753.7 L1401.0 745.4 L1400.0 737.1 L1399.0 728.7 L1398.0 720.2 L1397.0 711.7 L1396.0 703.1 L1395.0 694.4 L1394.0 685.7 L1393.0 676.9 L1392.0 668.1 L1391.0 659.3 L1390.0 650.4 L1389.0 641.4 L1388.0 632.4 L1387.0 623.5 L1386.0 614.4 L1385.0 605.5 L1384.0 596.5 L1383.0 587.6 L1382.0 578.8 L1381.0 569.9 L1380.0 561.2 L1379.0 552.4 L1378.0 543.8 L1377.0 535.2 L1376.0 526.6 L1375.0 518.2 L1374.0 509.7 L1373.0 501.4 L1372.0 493.2 L1371.0 485.0 L1370.0 476.9 L1369.0 468.9 L1368.0 461.0 L1367.0 453.2 L1366.0 445.4 L1365.0 437.8 L1364.0 430.3 L1363.0 422.9 L1362.0 415.6 L1361.0 408.4 L1360.0 401.3 L1359.0 394.3 L1358.0 387.5 L1357.0 380.8 L1356.0 374.2 L1355.0 367.7 L1354.0 361.3 L1353.0 355.1 L1352.0 349.0 L1351.0 343.1 L1350.0 337.3 L1349.0 331.6 L1348.0 326.1 L1347.0 320.7 L1346.0 315.4 L1345.0 310.3 L1344.0 305.3 L1343.0 300.5 L1342.0 295.9 L1341.0 291.4 L1340.0 287.0 L1339.0 282.8 L1338.0 278.8 L1337.0 275.1 L1336.0 271.7 L1335.0 268.4 L1334.0 265.5 L1333.0 262.8 L1332.0 260.3 L1331.0 258.1 L1330.0 256.0 L1329.0 254.2 L1328.0 252.6 L1327.0 251.2 L1326.0 249.9 L1325.0 248.8 L1324.0 247.8 L1323.0 247.0 L1322.0 246.3 L1321.0 245.7 L1320.0 245.2 L1319.0 244.8 L1318.0 244.5 L1317.0 244.3 L1316.0 244.1 L1315.0 244.0 L1314.0 244.0 L1313.0 244.0 L1312.0 244.1 L1311.0 244.3 L1310.0 244.6 L1309.0 244.9 L1308.0 245.3 L1307.0 245.8 L1306.0 246.4 L1305.0 247.2 L1304.0 248.0 L1303.0 249.0 L1302.0 250.1 L1301.0 251.4 L1300.0 252.9 L1299.0 254.6 L1298.0 256.4 L1297.0 258.5 L1296.0 260.8 L1295.0 263.3 L1294.0 266.1 L1293.0 269.1 L1292.0 272.3 L1291.0 275.8 L1290.0 279.6 L1289.0 283.6 L1288.0 287.9 L1287.0 292.3 L1286.0 296.8 L1285.0 301.5 L1284.0 306.3 L1283.0 311.3 L1282.0 316.4 L1281.0 321.7 L1280.0 327.1 L1279.0 332.7 L1278.0 338.4 L1277.0 344.3 L1276.0 350.2 L1275.0 356.3 L1274.0 362.6 L1273.0 369.0 L1272.0 375.5 L1271.0 382.1 L1270.0 388.8 L1269.0 395.7 L1268.0 402.7 L1267.0 409.8 L1266.0 417.0 L1265.0 424.4 L1264.0 431.8 L1263.0 439.3 L1262.0 447.0 L1261.0 454.7 L1260.0 462.6 L1259.0 470.5 L1258.0 478.5 L1257.0 486.6 L1256.0 494.8 L1255.0 503.1 L1254.0 511.4 L1253.0 519.8 L1252.0 528.3 L1251.0 536.9 L1250.0 545.5 L1249.0 554.2 L1248.0 562.9 L1247.0 571.7 L1246.0 580.5 L1245.0 589.4 L1244.0 598.3 L1243.0 607.3 L1242.0 616.2 L1241.0 625.3 L1240.0 634.2 L1239.0 643.2 L1238.0 652.1 L1237.0 661.0 L1236.0 669.9 L1235.0 678.7 L1234.0 687.5 L1233.0 696.2 L1232.0 704.8 L1231.0 713.4 L1230.0 721.9 L1229.0 730.4 L1228.0 738.8 L1227.0 747.1 L1226.0 755.3 L1225.0 763.4 L1224.0 771.5 L1223.0 779.5 L1222.0 787.4 L1221.0 795.2 L1220.0 802.9 L1219.0 810.4 L1218.0 817.9 L1217.0 825.3 L1216.0 832.6 L1215.0 839.8 L1214.0 846.8 L1213.0 853.7 L1212.0 860.5 L1211.0 867.2 L1210.0 873.8 L1209.0 880.2 L1208.0 886.5 L1207.0 892.7 L1206.0 898.8 L1205.0 904.7 L1204.0 910.5 L1203.0 916.1 L1202.0 921.6 L1201.0 926.9 L1200.0 932.1 L1199.0 937.2 L1198.0 942.1 L1197.0 946.9 L1196.0 951.5 L1195.0 956.0 L1194.0 960.3 L1193.0 964.4 L1192.0 968.3 L1191.0 971.9 L1190.0 975.3 L1189.0 978.5 L1188.0 981.3 L1187.0 984.0 L1186.0 986.4 L1185.0 988.6 L1184.0 990.5 L1183.0 992.3 L1182.0 993.9 L1181.0 995.2 L1180.0 996.5 L1179.0 997.5 L1178.0 998.4 L1177.0 999.2 L1176.0 999.9 L1175.0 1000.4 L1174.0 1000.9 L1173.0 1001.3 L1172.0 1001.6 L1171.0 1001.8 L1170.0 1001.9 L1169.0 1002.0 L1168.0 1002.0 L1167.0 1001.9 L1166.0 1001.8 L1165.0 1001.6 L1164.0 1001.3 L1163.0 1001.0 L1162.0 1000.5 L1161.0 1000.0 L1160.0 999.4 L1159.0 998.6 L1158.0 997.7 L1157.0 996.7 L1156.0 995.5 L1155.0 994.1 L1154.0 992.6 L1153.0 990.9 L1152.0 989.0 L1151.0 986.8 L1150.0 984.5 L1149.0 981.9 L1148.0 979.1 L1147.0 976.0 L1146.0 972.6 L1145.0 969.1 L1144.0 965.2 L1143.0 961.1 L1142.0 956.8 L1141.0 952.4 L1140.0 947.8 L1139.0 943.1 L1138.0 938.2 L1137.0 933.2 L1136.0 928.0 L1135.0 922.7 L1134.0 917.2 L1133.0 911.6 L1132.0 905.8 L1131.0 900.0 L1130.0 893.9 L1129.0 887.8 L1128.0 881.5 L1127.0 875.1 L1126.0 868.6 L1125.0 861.9 L1124.0 855.1 L1123.0 848.2 L1122.0 841.2 L1121.0 834.0 L1120.0 826.8 L1119.0 819.4 L1118.0 812.0 L1117.0 804.4 L1116.0 796.7 L1115.0 788.9 L1114.0 781.1 L1113.0 773.1 L1112.0 765.1 L1111.0 756.9 L1110.0 748.7 L1109.0 740.4 L1108.0 732.1 L1107.0 723.6 L1106.0 715.1 L1105.0 706.5 L1104.0 697.9 L1103.0 689.2 L1102.0 680.5 L1101.0 671.7 L1100.0 662.8 L1099.0 653.9 L1098.0 645.0 L1097.0 636.0 L1096.0 627.1 L1095.0 618.0 L1094.0 609.1 L1093.0 600.1 L1092.0 591.2 L1091.0 582.3 L1090.0 573.5 L1089.0 564.7 L1088.0 555.9 L1087.0 547.2 L1086.0 538.6 L1085.0 530.0 L1084.0 521.5 L1083.0 513.1 L1082.0 504.7 L1081.0 496.5 L1080.0 488.2 L1079.0 480.1 L1078.0 472.1 L1077.0 464.1 L1076.0 456.3 L1075.0 448.5 L1074.0 440.9 L1073.0 433.3 L1072.0 425.8 L1071.0 418.5 L1070.0 411.2 L1069.0 404.1 L1068.0 397.1 L1067.0 390.2 L1066.0 383.4 L1065.0 376.8 L1064.0 370.3 L1063.0 363.9 L1062.0 357.6 L1061.0 351.4 L1060.0 345.4 L1059.0 339.6 L1058.0 333.8 L1057.0 328.2 L1056.0 322.8 L1055.0 317.5 L1054.0 312.3 L1053.0 307.3 L1052.0 302.4 L1051.0 297.7 L1050.0 293.2 L1049.0 288.7 L1048.0 284.5 L1047.0 280.4 L1046.0 276.6 L1045.0 273.0 L1044.0 269.7 L1043.0 266.6 L1042.0 263.8 L1041.0 261.3 L1040.0 258.9 L1039.0 256.8 L1038.0 254.9 L1037.0 253.2 L1036.0 251.7 L1035.0 250.4 L1034.0 249.2 L1033.0 248.2 L1032.0 247.3 L1031.0 246.6 L1030.0 245.9 L1029.0 245.4 L1028.0 245.0 L1027.0 244.6 L1026.0 244.4 L1025.0 244.2 L1024.0 244.1 L1023.0 244.0 L1022.0 244.0 L1021.0 244.1 L1020.0 244.2 L1019.0 244.5 L1018.0 244.8 L1017.0 245.1 L1016.0 245.6 L1015.0 246.2 L1014.0 246.9 L1013.0 247.7 L1012.0 248.6 L1011.0 249.7 L1010.0 250.9 L1009.0 252.3 L1008.0 253.9 L1007.0 255.7 L1006.0 257.6 L1005.0 259.8 L1004.0 262.3 L1003.0 264.9 L1002.0 267.8 L1001.0 271.0 L1000.0 274.4 L999.0 278.1 L998.0 282.0 L997.0 286.2 L996.0 290.5 L995.0 295.0 L994.0 299.6 L993.0 304.4 L992.0 309.3 L991.0 314.4 L990.0 319.6 L989.0 325.0 L988.0 330.5 L987.0 336.1 L986.0 341.9 L985.0 347.8 L984.0 353.9 L983.0 360.1 L982.0 366.4 L981.0 372.9 L980.0 379.4 L979.0 386.1 L978.0 393.0 L977.0 399.9 L976.0 407.0 L975.0 414.1 L974.0 421.4 L973.0 428.8 L972.0 436.3 L971.0 443.9 L970.0 451.6 L969.0 459.4 L968.0 467.3 L967.0 475.3 L966.0 483.4 L965.0 491.5 L964.0 499.8 L963.0 508.1 L962.0 516.5 L961.0 524.9 L960.0 533.5 L959.0 542.1 L958.0 550.7 L957.0 559.4 L956.0 568.2 L955.0 577.0 L954.0 585.9 L953.0 594.7 L952.0 603.7 L951.0 612.7 L950.0 621.6 L949.0 630.7 L948.0 639.6 L947.0 648.6 L946.0 657.5 L945.0 666.4 L944.0 675.2 L943.0 684.0 L942.0 692.7 L941.0 701.4 L940.0 710.0 L939.0 718.5 L938.0 727.0 L937.0 735.4 L936.0 743.8 L935.0 752.0 L934.0 760.2 L933.0 768.3 L932.0 776.3 L931.0 784.2 L930.0 792.1 L929.0 799.8 L928.0 807.4 L927.0 815.0 L926.0 822.4 L925.0 829.7 L924.0 836.9 L923.0 844.0 L922.0 851.0 L921.0 857.8 L920.0 864.6 L919.0 871.2 L918.0 877.7 L917.0 884.0 L916.0 890.3 L915.0 896.4 L914.0 902.3 L913.0 908.2 L912.0 913.9 L911.0 919.4 L910.0 924.8 L909.0 930.1 L908.0 935.2 L907.0 940.2 L906.0 945.0 L905.0 949.7 L904.0 954.2 L903.0 958.6 L902.0 962.8 L901.0 966.8 L900.0 970.5 L899.0 974.0 L898.0 977.2 L897.0 980.2 L896.0 983.0 L895.0 985.5 L894.0 987.7 L893.0 989.8 L892.0 991.6 L891.0 993.2 L890.0 994.7 L889.0 996.0 L888.0 997.1 L887.0 998.1 L886.0 998.9 L885.0 999.6 L884.0 1000.2 L883.0 1000.7 L882.0 1001.1 L881.0 1001.5 L880.0 1001.7 L879.0 1001.9 L878.0 1002.0 L877.0 1002.0 L876.0 1002.0 L875.0 1001.9 L874.0 1001.7 L873.0 1001.5 L872.0 1001.1 L871.0 1000.7 L870.0 1000.2 L869.0 999.6 L868.0 998.9 L867.0 998.1 L866.0 997.1 L865.0 996.0 L864.0 994.7 L863.0 993.2 L862.0 991.6 L861.0 989.8 L860.0 987.7 L859.0 985.5 L858.0 983.0 L857.0 980.2 L856.0 977.2 L855.0 974.0 L854.0 970.5 L853.0 966.8 L852.0 962.8 L851.0 958.6 L850.0 954.2 L849.0 949.7 L848.0 945.0 L847.0 940.2 L846.0 935.2 L845.0 930.1 L844.0 924.8 L843.0 919.4 L842.0 913.9 L841.0 908.2 L840.0 902.3 L839.0 896.4 L838.0 890.3 L837.0 884.0 L836.0 877.7 L835.0 871.2 L834.0 864.6 L833.0 857.8 L832.0 851.0 L831.0 844.0 L830.0 836.9 L829.0 829.7 L828.0 822.4 L827.0 815.0 L826.0 807.4 L825.0 799.8 L824.0 792.1 L823.0 784.2 L822.0 776.3 L821.0 768.3 L820.0 760.2 L819.0 752.0 L818.0 743.8 L817.0 735.4 L816.0 727.0 L815.0 718.5 L814.0 710.0 L813.0 701.4 L812.0 692.7 L811.0 684.0 L810.0 675.2 L809.0 666.4 L808.0 657.5 L807.0 648.6 L806.0 639.6 L805.0 630.7 L804.0 621.6 L803.0 612.7 L802.0 603.7 L801.0 594.7 L800.0 585.9 L799.0 577.0 L798.0 568.2 L797.0 559.4 L796.0 550.7 L795.0 542.1 L794.0 533.5 L793.0 524.9 L792.0 516.5 L791.0 508.1 L790.0 499.8 L789.0 491.5 L788.0 483.4 L787.0 475.3 L786.0 467.3 L785.0 459.4 L784.0 451.6 L783.0 443.9 L782.0 436.3 L781.0 428.8 L780.0 421.4 L779.0 414.1 L778.0 407.0 L777.0 399.9 L776.0 393.0 L775.0 386.1 L774.0 379.4 L773.0 372.9 L772.0 366.4 L771.0 360.1 L770.0 353.9 L769.0 347.8 L768.0 341.9 L767.0 336.1 L766.0 330.5 L765.0 325.0 L764.0 319.6 L763.0 314.4 L762.0 309.3 L761.0 304.4 L760.0 299.6 L759.0 295.0 L758.0 290.5 L757.0 286.2 L756.0 282.0 L755.0 278.1 L754.0 274.4 L753.0 271.0 L752.0 267.8 L751.0 264.9 L750.0 262.3 L749.0 259.8 L748.0 257.6 L747.0 255.7 L746.0 253.9 L745.0 252.3 L744.0 250.9 L743.0 249.7 L742.0 248.6 L741.0 247.7 L740.0 246.9 L739.0 246.2 L738.0 245.6 L737.0 245.1 L736.0 244.8 L735.0 244.5 L734.0 244.2 L733.0 244.1 L732.0 244.0 L731.0 244.0 L730.0 244.1 L729.0 244.2 L728.0 244.4 L727.0 244.6 L726.0 245.0 L725.0 245.4 L724.0 245.9 L723.0 246.6 L722.0 247.3 L721.0 248.2 L720.0 249.2 L719.0 250.4 L718.0 251.7 L717.0 253.2 L716.0 254.9 L715.0 256.8 L714.0 258.9 L713.0 261.3 L712.0 263.8 L711.0 266.6 L710.0 269.7 L709.0 273.0 L708.0 276.6 L707.0 280.4 L706.0 284.5 L705.0 288.7 L704.0 293.2 L703.0 297.7 L702.0 302.4 L701.0 307.3 L700.0 312.3 L699.0 317.5 L698.0 322.8 L697.0 328.2 L696.0 333.8 L695.0 339.6 L694.0 345.4 L693.0 351.4 L692.0 357.6 L691.0 363.9 L690.0 370.3 L689.0 376.8 L688.0 383.4 L687.0 390.2 L686.0 397.1 L685.0 404.1 L684.0 411.2 L683.0 418.5 L682.0 425.8 L681.0 433.3 L680.0 440.9 L679.0 448.5 L678.0 456.3 L677.0 464.1 L676.0 472.1 L675.0 480.1 L674.0 488.2 L673.0 496.5 L672.0 504.7 L671.0 513.1 L670.0 521.5 L669.0 530.0 L668.0 538.6 L667.0 547.2 L666.0 555.9 L665.0 564.7 L664.0 573.5 L663.0 582.3 L662.0 591.2 L661.0 600.1 L660.0 609.1 L659.0 618.0 L658.0 627.1 L657.0 636.0 L656.0 645.0 L655.0 653.9 L654.0 662.8 L653.0 671.7 L652.0 680.5 L651.0 689.2 L650.0 697.9 L649.0 706.5 L648.0 715.1 L647.0 723.6 L646.0 732.1 L645.0 740.4 L644.0 748.7 L643.0 756.9 L642.0 765.1 L641.0 773.1 L640.0 781.1 L639.0 788.9 L638.0 796.7 L637.0 804.4 L636.0 812.0 L635.0 819.4 L634.0 826.8 L633.0 834.0 L632.0 841.2 L631.0 848.2 L630.0 855.1 L629.0 861.9 L628.0 868.6 L627.0 875.1 L626.0 881.5 L625.0 887.8 L624.0 893.9 L623.0 900.0 L622.0 905.8 L621.0 911.6 L620.0 917.2 L619.0 922.7 L618.0 928.0 L617.0 933.2 L616.0 938.2 L615.0 943.1 L614.0 947.8 L613.0 952.4 L612.0 956.8 L611.0 961.1 L610.0 965.2 L609.0 969.1 L608.0 972.6 L607.0 976.0 L606.0 979.1 L605.0 981.9 L604.0 984.5 L603.0 986.8 L602.0 989.0 L601.0 990.9 L600.0 992.6 L599.0 994.1 L598.0 995.5 L597.0 996.7 L596.0 997.7 L595.0 998.6 L594.0 999.4 L593.0 1000.0 L592.0 1000.5 L591.0 1001.0 L590.0 1001.3 L589.0 1001.6 L588.0 1001.8 L587.0 1001.9 L586.0 1002.0 L585.0 1002.0 L584.0 1001.9 L583.0 1001.8 L582.0 1001.6 L581.0 1001.3 L580.0 1000.9 L579.0 1000.4 L578.0 999.9 L577.0 999.2 L576.0 998.4 L575.0 997.5 L574.0 996.5 L573.0 995.2 L572.0 993.9 L571.0 992.3 L570.0 990.5 L569.0 988.6 L568.0 986.4 L567.0 984.0 L566.0 981.3 L565.0 978.5 L564.0 975.3 L563.0 971.9 L562.0 968.3 L561.0 964.4 L560.0 960.3 L559.0 956.0 L558.0 951.5 L557.0 946.9 L556.0 942.1 L555.0 937.2 L554.0 932.1 L553.0 926.9 L552.0 921.6 L551.0 916.1 L550.0 910.5 L549.0 904.7 L548.0 898.8 L547.0 892.7 L546.0 886.5 L545.0 880.2 L544.0 873.8 L543.0 867.2 L542.0 860.5 L541.0 853.7 L540.0 846.8 L539.0 839.8 L538.0 832.6 L537.0 825.3 L536.0 817.9 L535.0 810.4 L534.0 802.9 L533.0 795.2 L532.0 787.4 L531.0 779.5 L530.0 771.5 L529.0 763.4 L528.0 755.3 L527.0 747.1 L526.0 738.8 L525.0 730.4 L524.0 721.9 L523.0 713.4 L522.0 704.8 L521.0 696.2 L520.0 687.5 L519.0 678.7 L518.0 669.9 L517.0 661.0 L516.0 652.1 L515.0 643.2 L514.0 634.2 L513.0 625.3 L512.0 616.2 L511.0 607.3 L510.0 598.3 L509.0 589.4 L508.0 580.5 L507.0 571.7 L506.0 562.9 L505.0 554.2 L504.0 545.5 L503.0 536.9 L502.0 528.3 L501.0 519.8 L500.0 511.4 L499.0 503.1 L498.0 494.8 L497.0 486.6 L496.0 478.5 L495.0 470.5 L494.0 462.6 L493.0 454.7 L492.0 447.0 L491.0 439.3 L490.0 431.8 L489.0 424.4 L488.0 417.0 L487.0 409.8 L486.0 402.7 L485.0 395.7 L484.0 388.8 L483.0 382.1 L482.0 375.5 L481.0 369.0 L480.0 362.6 L479.0 356.3 L478.0 350.2 L477.0 344.3 L476.0 338.4 L475.0 332.7 L474.0 327.1 L473.0 321.7 L472.0 316.4 L471.0 311.3 L470.0 306.3 L469.0 301.5 L468.0 296.8 L467.0 292.3 L466.0 287.9 L465.0 283.6 L464.0 279.6 L463.0 275.8 L462.0 272.3 L461.0 269.1 L460.0 266.1 L459.0 263.3 L458.0 260.8 L457.0 258.5 L456.0 256.4 L455.0 254.6 L454.0 252.9 L453.0 251.4 L452.0 250.1 L451.0 249.0 L450.0 248.0 L449.0 247.2 L448.0 246.4 L447.0 245.8 L446.0 245.3 L445.0 244.9 L444.0 244.6 L443.0 244.3 L442.0 244.1 L441.0 244.0 L440.0 244.0 L439.0 244.0 L438.0 244.1 L437.0 244.3 L436.0 244.5 L435.0 244.8 L434.0 245.2 L433.0 245.7 L432.0 246.3 L431.0 247.0 L430.0 247.8 L429.0 248.8 L428.0 249.9 L427.0 251.2 L426.0 252.6 L425.0 254.2 L424.0 256.0 L423.0 258.1 L422.0 260.3 L421.0 262.8 L420.0 265.5 L419.0 268.4 L418.0 271.7 L417.0 275.1 L416.0 278.8 L415.0 282.8 L414.0 287.0 L413.0 291.4 L412.0 295.9 L411.0 300.5 L410.0 305.3 L409.0 310.3 L408.0 315.4 L407.0 320.7 L406.0 326.1 L405.0 331.6 L404.0 337.3 L403.0 343.1 L402.0 349.0 L401.0 355.1 L400.0 361.3 L399.0 367.7 L398.0 374.2 L397.0 380.8 L396.0 387.5 L395.0 394.3 L394.0 401.3 L393.0 408.4 L392.0 415.6 L391.0 422.9 L390.0 430.3 L389.0 437.8 L388.0 445.4 L387.0 453.2 L386.0 461.0 L385.0 468.9 L384.0 476.9 L383.0 485.0 L382.0 493.2 L381.0 501.4 L380.0 509.7 L379.0 518.2 L378.0 526.6 L377.0 535.2 L376.0 543.8 L375.0 552.4 L374.0 561.2 L373.0 569.9 L372.0 578.8 L371.0 587.6 L370.0 596.5 L369.0 605.5 L368.0 614.4 L367.0 623.5 L366.0 632.4 L365.0 641.4 L364.0 650.4 L363.0 659.3 L362.0 668.1 L361.0 676.9 L360.0 685.7 L359.0 694.4 L358.0 703.1 L357.0 711.7 L356.0 720.2 L355.0 728.7 L354.0 737.1 L353.0 745.4 L352.0 753.7 L351.0 761.8 L350.0 769.9 L349.0 777.9 L348.0 785.8 L347.0 793.6 L346.0 801.3 L345.0 808.9 L344.0 816.4 L343.0 823.9 L342.0 831.1 L341.0 838.3 L340.0 845.4 L339.0 852.4 L338.0 859.2 L337.0 865.9 L336.0 872.5 L335.0 879.0 L334.0 885.3 L333.0 891.5 L332.0 897.6 L331.0 903.5 L330.0 909.3 L329.0 915.0 L328.0 920.5 L327.0 925.9 L326.0 931.1 L325.0 936.2 L324.0 941.1 L323.0 945.9 L322.0 950.6 L321.0 955.1 L320.0 959.4 L319.0 963.6 L318.0 967.5 L317.0 971.2 L316.0 974.7 L315.0 977.9 L314.0 980.8 L313.0 983.5 L312.0 985.9 L311.0 988.1 L310.0 990.2 L309.0 991.9 L308.0 993.6 L307.0 995.0 L306.0 996.2 L305.0 997.3 L304.0 998.3 L303.0 999.1 L302.0 999.8 L301.0 1000.3 L300.0 1000.8 L299.0 1001.2 L298.0 1001.5 L297.0 1001.7 L296.0 1001.9 L295.0 1002.0 L294.0 1002.0 L293.0 1002.0 L292.0 1001.8 L291.0 1001.7 L290.0 1001.4 L289.0 1001.1 L288.0 1000.6 L287.0 1000.1 L286.0 999.5 L285.0 998.8 L284.0 997.9 L283.0 996.9 L282.0 995.7 L281.0 994.4 L280.0 992.9 L279.0 991.3 L278.0 989.4 L277.0 987.3 L276.0 985.0 L275.0 982.4 L274.0 979.6 L273.0 976.6 L272.0 973.3 L271.0 969.8 L270.0 966.0 L269.0 961.9 L268.0 957.7 L267.0 953.3 L266.0 948.7 L265.0 944.0 L264.0 939.2 L263.0 934.2 L262.0 929.0 L261.0 923.7 L260.0 918.3 L259.0 912.7 L258.0 907.0 L257.0 901.2 L256.0 895.2 L255.0 889.0 L254.0 882.8 L253.0 876.4 L252.0 869.9 L251.0 863.2 L250.0 856.5 L249.0 849.6 L248.0 842.6 L247.0 835.5 L246.0 828.2 L245.0 820.9 L244.0 813.5 L243.0 805.9 L242.0 798.3 L241.0 790.5 L240.0 782.7 L239.0 774.7 L238.0 766.7 L237.0 758.6 L236.0 750.4 L235.0 742.1 L234.0 733.7 L233.0 725.3 L232.0 716.8 L231.0 708.3 L230.0 699.6 L229.0 690.9 L228.0 682.2 L227.0 673.4 L226.0 664.6 L225.0 655.7 L224.0 646.8 L223.0 637.8 L222.0 628.9 L221.0 619.8 L220.0 610.9 L219.0 601.9 L218.0 593.0 L217.0 584.1 L216.0 575.2 L215.0 566.4 L214.0 557.7 L213.0 549.0 L212.0 540.3 L211.0 531.7 L210.0 523.2 L209.0 514.8 L208.0 506.4 L207.0 498.1 L206.0 489.9 L205.0 481.7 L204.0 473.7 L203.0 465.7 L202.0 457.8 L201.0 450.1 L200.0 442.4 L199.0 434.8 L198.0 427.3 L197.0 419.9 L196.0 412.7 L195.0 405.5 L194.0 398.5 L193.0 391.6 L192.0 384.8 L191.0 378.1 L190.0 371.6 L189.0 365.1 L188.0 358.8 L187.0 352.7 L186.0 346.6 L185.0 340.7 L184.0 335.0 L183.0 329.4 L182.0 323.9 L181.0 318.5 L180.0 313.3 L179.0 308.3 L178.0 303.4 L177.0 298.7 L176.0 294.1 L175.0 289.6 L174.0 285.3 L173.0 281.2 L172.0 277.3 L171.0 273.7 L170.0 270.3 L169.0 267.2 L168.0 264.4 L167.0 261.8 L166.0 259.4 L165.0 257.2 L164.0 255.3 L163.0 253.5 L162.0 252.0 L161.0 250.6 L160.0 249.4 L159.0 248.4 L158.0 247.5 L157.0 246.7 L156.0 246.1 L155.0 245.5 L154.0 245.1 L153.0 244.7 L152.0 244.4 L151.0 244.2 L150.0 244.1 L149.0 244.0 L148.0 244.0 L147.0 244.1 L146.0 244.2 L145.0 244.4 L144.0 244.7 L143.0 245.1 L142.0 245.5 L141.0 246.1 L140.0 246.7 L139.0 247.5 L138.0 248.4 L137.0 249.4 L136.0 250.6 L135.0 252.0 L134.0 253.5 L133.0 255.3 L132.0 257.2 L131.0 259.4 L130.0 261.8 L129.0 264.4 L128.0 267.2 L127.0 270.3 L126.0 273.7 L125.0 277.3 L124.0 281.2 L123.0 285.3 L122.0 289.6 L121.0 294.1 L120.0 298.7 L119.0 303.4 L118.0 308.3 L117.0 313.3 L116.0 318.5 L115.0 323.9 L114.0 329.4 L113.0 335.0 L112.0 340.7 L111.0 346.6 L110.0 352.7 L109.0 358.8 L108.0 365.1 L107.0 371.6 L106.0 378.1 L105.0 384.8 L104.0 391.6 L103.0 398.5 L102.0 405.5 L101.0 412.7 L100.0 419.9 L99.0 427.3 L98.0 434.8 L97.0 442.4 L96.0 450.1 L95.0 457.8 L94.0 465.7 L93.0 473.7 L92.0 481.7 L91.0 489.9 L90.0 498.1 L89.0 506.4 L88.0 514.8 L87.0 523.2 L86.0 531.7 L85.0 540.3 L84.0 549.0 L83.0 557.7 L82.0 566.4 L81.0 575.2 L80.0 584.1 L79.0 593.0 L78.0 601.9 L77.0 610.9 L76.0 619.8 L75.0 628.9 L74.0 637.8 L73.0 646.8 L72.0 655.7 L71.0 664.6 L70.0 673.4 L69.0 682.2 L68.0 690.9 L67.0 699.6 L66.0 708.3 L65.0 716.8 L64.0 725.3 L63.0 733.7 L62.0 742.1 L61.0 750.4 L60.0 758.6 L59.0 766.7 L58.0 774.7Z" fill="#0000ff" stroke="#0000ff" stroke-width="3.4" stroke-linejoin="round"/>
<polygon points="1503,631 1512,614 1520,631 1512,648" fill="#4040ff"/>
</g></g>
<g filter="url(#b2)"><rect x="29" y="598" width="30" height="66" fill="#00d2d6"/></g>
<g filter="url(#b1)">
<text transform="translate(35.98,655.00) scale(0.4527,1.0000)" font-family="Liberation Serif, serif" font-style="italic" font-size="74.01" fill="#7ff0f0" xml:space="preserve" >2</text>
</g>
<line x1="126.2" y1="712.0" x2="87.7" y2="658.6" stroke="#ff0000" stroke-width="6.4" stroke-linecap="round"/>
<polygon points="67.8,631.0 105.4,650.7 74.6,672.9" fill="#ff0000"/>
<line x1="1045.8" y1="1094.4" x2="1008.0" y2="1042.5" stroke="#00f4f4" stroke-width="6.4" stroke-linecap="round"/>
<polygon points="988.0,1015.0 1025.7,1034.5 995.0,1056.9" fill="#00f4f4"/>
<line x1="993.5" y1="154.6" x2="956.1" y2="207.0" stroke="#ff00ff" stroke-width="6.4" stroke-linecap="round"/>
<polygon points="936.3,234.7 942.9,192.7 973.8,214.8" fill="#ff00ff"/>
<line x1="223.5" y1="154.6" x2="185.5" y2="207.4" stroke="#0000ff" stroke-width="6.4" stroke-linecap="round"/>
<polygon points="165.7,235.0 172.5,193.1 203.3,215.2" fill="#0000ff"/>
<g opacity="0.85">
<text transform="translate(219.84,139.70) scale(1.0162,0.8080)" font-family="Liberation Serif, serif" font-style="italic" font-size="100.00" fill="#0000ff" xml:space="preserve" opacity="0.75">i</text>
<text transform="translate(245.49,167.32) scale(0.4958,0.4388)" font-family="Liberation Serif, serif" font-weight="bold" font-size="100.00" fill="#0000ff" xml:space="preserve" >g</text>
<text transform="translate(276.33,167.53) scale(0.4242,0.4843)" font-family="Liberation Serif, serif" font-weight="bold" font-size="100.00" fill="#0000ff" xml:space="preserve" >a</text>
<text transform="translate(335.55,146.34) scale(0.9095,0.9388)" font-family="Liberation Serif, serif" font-size="100.00" fill="#0000ff" xml:space="preserve" >[30A/div]</text>
<text transform="translate(985.99,140.20) scale(0.9901,0.8141)" font-family="Liberation Serif, serif" font-style="italic" font-size="100.00" fill="#ff00ff" xml:space="preserve" opacity="0.75">i</text>
<text transform="translate(1010.69,167.86) scale(0.4958,0.4279)" font-family="Liberation Serif, serif" font-weight="bold" font-size="100.00" fill="#ff00ff" xml:space="preserve" >g</text>
<text transform="translate(1043.00,167.49) scale(0.7209,0.6253)" font-family="Liberation Serif, serif" font-size="100.00" fill="#ff00ff" xml:space="preserve" >b</text>
<text transform="translate(1110.77,146.39) scale(0.9071,0.9424)" font-family="Liberation Serif, serif" font-size="100.00" fill="#ff00ff" xml:space="preserve" >[30A/div]</text>
<text transform="translate(1046.49,1129.40) scale(0.9901,0.8216)" font-family="Liberation Serif, serif" font-style="italic" font-size="100.00" fill="#00f0f0" xml:space="preserve" opacity="0.75">i</text>
<text transform="translate(1071.43,1156.38) scale(0.5195,0.4360)" font-family="Liberation Serif, serif" font-weight="bold" font-size="100.00" fill="#00f0f0" xml:space="preserve" >g</text>
<text transform="translate(1101.64,1157.33) scale(0.8560,0.6903)" font-family="Liberation Serif, serif" font-size="100.00" fill="#00f0f0" xml:space="preserve" >c</text>
<g clip-path="url(#scope)">
<text transform="translate(1166.85,1135.22) scale(0.9095,0.9328)" font-family="Liberation Serif, serif" font-size="100.00" fill="#00f0f0" xml:space="preserve" >[30A/div]</text>
</g>
</g>
<g opacity="0.9">
<text transform="translate(93.94,1154.90) scale(1.0868,1.1285)" font-family="Liberation Serif, serif" font-size="100.00" fill="#101010" xml:space="preserve" stroke="#101010" stroke-width="1.6">Times:[10ms/div]</text>
</g>
<g opacity="0.8">
<text transform="translate(144.99,742.50) scale(0.7593,0.7834)" font-family="Liberation Sans, sans-serif" font-size="100.00" fill="#ff0000" xml:space="preserve" stroke="#fff" stroke-width="2.0" paint-order="fill stroke">Z</text>
<text transform="translate(199.39,742.58) scale(0.5903,0.7393)" font-family="Liberation Sans, sans-serif" font-size="100.00" fill="#ff0000" xml:space="preserve" stroke="#fff" stroke-width="2.0" paint-order="fill stroke">e</text>
<text transform="translate(232.42,742.50) scale(0.8400,0.7378)" font-family="Liberation Sans, sans-serif" font-size="100.00" fill="#ff0000" xml:space="preserve" stroke="#fff" stroke-width="2.0" paint-order="fill stroke">r</text>
<text transform="translate(267.82,742.66) scale(0.7815,0.7575)" font-family="Liberation Sans, sans-serif" font-size="100.00" fill="#ff0000" xml:space="preserve" stroke="#fff" stroke-width="2.0" paint-order="fill stroke">o</text>
</g>
</g>
<text transform="translate(733.16,1320.53) scale(0.7826,0.8536)" font-family="Liberation Serif, serif" font-size="100.00" fill="#000" xml:space="preserve" >(</text>
<text transform="translate(759.92,1320.76) scale(0.8307,0.8643)" font-family="Liberation Serif, serif" font-weight="bold" font-size="100.00" fill="#000" xml:space="preserve" >a</text>
<text transform="translate(802.68,1320.53) scale(0.7826,0.8536)" font-family="Liberation Serif, serif" font-size="100.00" fill="#000" xml:space="preserve" >)</text>
<text transform="translate(2366.16,1320.53) scale(0.7826,0.8536)" font-family="Liberation Serif, serif" font-size="100.00" fill="#000" xml:space="preserve" >(</text>
<text transform="translate(2392.74,1320.93) scale(0.9166,0.8925)" font-family="Liberation Serif, serif" font-weight="bold" font-size="100.00" fill="#000" xml:space="preserve" >b</text>
<text transform="translate(2444.58,1320.53) scale(0.7826,0.8536)" font-family="Liberation Serif, serif" font-size="100.00" fill="#000" xml:space="preserve" >)</text>
<g id="lcd">
<rect x="1631" y="26.8" width="1571" height="1182" fill="#00006a"/>
<text transform="translate(1650.65,58.90) scale(1.0000,1.0800)" font-family="Liberation Mono, monospace" font-weight="bold" font-size="32.75" fill="#fff" xml:space="preserve" stroke="#fff" stroke-width="0.35">Wide-Band</text>
<text transform="translate(1847.15,58.90) scale(1.0000,1.0800)" font-family="Liberation Mono, monospace" font-weight="bold" font-size="32.75" fill="#fff" xml:space="preserve" stroke="#fff" stroke-width="0.35">Harmonics</text>
<text transform="translate(2063.30,58.90) scale(1.0000,1.0800)" font-family="Liberation Mono, monospace" font-weight="bold" font-size="32.75" fill="#fff" xml:space="preserve" stroke="#fff" stroke-width="0.35">Uover:</text>
<text transform="translate(2475.95,58.90) scale(1.0000,1.0800)" font-family="Liberation Mono, monospace" font-weight="bold" font-size="32.75" fill="#fff" xml:space="preserve" stroke="#fff" stroke-width="0.35">PLL</text>
<text transform="translate(2554.55,58.90) scale(1.0000,1.0800)" font-family="Liberation Mono, monospace" font-weight="bold" font-size="32.75" fill="#fff" xml:space="preserve" stroke="#fff" stroke-width="0.35">Source:</text>
<text transform="translate(2790.35,58.90) scale(1.0000,1.0800)" font-family="Liberation Mono, monospace" font-weight="bold" font-size="32.75" fill="#fff" xml:space="preserve" stroke="#fff" stroke-width="0.35">I1</text>
<text transform="translate(2945.56,58.58) scale(0.2553,0.3263)" font-family="Liberation Sans, sans-serif" font-weight="bold" font-size="100.00" fill="#fff" xml:space="preserve" >YOKOGAWA</text>
<polygon points="3143.8,27.2 3159.3,42.8 3143.8,58.4 3128.3,42.8" fill="#ffff00"/>
<text transform="translate(1650.65,98.50) scale(1.0000,1.0800)" font-family="Liberation Mono, monospace" font-weight="bold" font-size="32.75" fill="#fff" xml:space="preserve" stroke="#fff" stroke-width="0.35">Store:</text>
<text transform="translate(1768.55,98.50) scale(1.0000,1.0800)" font-family="Liberation Mono, monospace" font-weight="bold" font-size="32.75" fill="#ff0000" xml:space="preserve" stroke="#ff0000" stroke-width="0.35">Stop</text>
<text transform="translate(1927.71,98.50) scale(0.8000,1.0800)" font-family="Liberation Mono, monospace" font-weight="bold" font-size="32.75" fill="#fff" xml:space="preserve" stroke="#fff" stroke-width="0.35">O</text>
<text transform="translate(2063.30,98.50) scale(1.0000,1.0800)" font-family="Liberation Mono, monospace" font-weight="bold" font-size="32.75" fill="#fff" xml:space="preserve" stroke="#fff" stroke-width="0.35">Iover:</text>
<rect x="2180.8" y="39.2" width="20" height="12.7" fill="#00ff00"/>
<rect x="2180.8" y="79.1" width="20" height="12.2" fill="#00ff00"/>
<rect x="2220.1" y="39.2" width="20" height="12.7" fill="#00ff00"/>
<rect x="2220.1" y="79.1" width="20" height="12.2" fill="#00ff00"/>
<rect x="2259.4" y="39.2" width="20" height="12.7" fill="#00ff00"/>
<rect x="2259.4" y="79.1" width="20" height="12.2" fill="#00ff00"/>
<rect x="2298.7" y="39.2" width="20" height="12.7" fill="#00ff00"/>
<rect x="2298.7" y="79.1" width="20" height="12.2" fill="#00ff00"/>
<rect x="1650.7" y="106.3" width="39.6" height="38.8" fill="#fff"/>
<polygon points="1670.5,109.5 1687,125.7 1670.5,142 1654,125.7" fill="none" stroke="#00006a" stroke-width="2"/>
<rect x="1664.3" y="119.5" width="12.4" height="12.4" fill="none" stroke="#00006a" stroke-width="2"/>
<text transform="translate(1709.60,137.30) scale(1.0000,1.0800)" font-family="Liberation Mono, monospace" font-weight="bold" font-size="32.75" fill="#fff" xml:space="preserve" stroke="#fff" stroke-width="0.35">&amp;</text>
<rect x="1749" y="106.3" width="235.7" height="38.8" fill="#009090"/>
<text transform="translate(1748.90,137.30) scale(1.0000,1.0800)" font-family="Liberation Mono, monospace" font-weight="bold" font-size="32.75" fill="#fff" xml:space="preserve" stroke="#fff" stroke-width="0.35">change</text>
<text transform="translate(1886.45,137.30) scale(1.0000,1.0800)" font-family="Liberation Mono, monospace" font-weight="bold" font-size="32.75" fill="#fff" xml:space="preserve" stroke="#fff" stroke-width="0.35">items</text>
<text transform="translate(2829.65,177.10) scale(1.0000,1.0800)" font-family="Liberation Mono, monospace" font-weight="bold" font-size="32.75" fill="#fff" xml:space="preserve" stroke="#fff" stroke-width="0.35">PAGE</text>
<text transform="translate(2967.20,176.40) scale(1.0000,1.0800)" font-family="Liberation Mono, monospace" font-weight="bold" font-size="32.75" fill="#fff" xml:space="preserve" stroke="#fff" stroke-width="0.35">Σ</text>
<text transform="translate(3006.50,176.40) scale(1.0000,1.0800)" font-family="Liberation Mono, monospace" font-weight="bold" font-size="32.75" fill="#fff" xml:space="preserve" stroke="#fff" stroke-width="0.35">A(3P4W)</text>
<text transform="translate(1670.30,216.60) scale(1.0000,1.0800)" font-family="Liberation Mono, monospace" font-weight="bold" font-size="32.75" fill="#fff" xml:space="preserve" stroke="#fff" stroke-width="0.35">Ithd1</text>
<text transform="translate(1944.73,251.10) scale(0.9791,1.0000)" font-family="Liberation Sans, sans-serif" font-size="72.50" fill="#fff" xml:space="preserve" stroke="#fff" stroke-width="1.7">2.539</text>
<rect x="2161.0" y="233.8" width="5" height="5" fill="#fff"/>
<rect x="2174.2" y="248.3" width="5" height="5" fill="#fff"/>
<line x1="2161.8" y1="253.0" x2="2178.6" y2="235.3" stroke="#fff" stroke-width="2.6"/>
<text transform="translate(1670.30,334.90) scale(1.0000,1.0800)" font-family="Liberation Mono, monospace" font-weight="bold" font-size="32.75" fill="#fff" xml:space="preserve" stroke="#fff" stroke-width="0.35">Ihdf1</text>
<text transform="translate(1670.30,370.60) scale(1.0000,1.0800)" font-family="Liberation Mono, monospace" font-weight="bold" font-size="32.75" fill="#fff" xml:space="preserve" stroke="#fff" stroke-width="0.35">(3)</text>
<text transform="translate(1945.54,369.10) scale(0.9732,1.0000)" font-family="Liberation Sans, sans-serif" font-size="72.50" fill="#fff" xml:space="preserve" stroke="#fff" stroke-width="1.7">0.126</text>
<rect x="2161.0" y="351.8" width="5" height="5" fill="#fff"/>
<rect x="2174.2" y="366.3" width="5" height="5" fill="#fff"/>
<line x1="2161.8" y1="371.0" x2="2178.6" y2="353.3" stroke="#fff" stroke-width="2.6"/>
<text transform="translate(1670.30,453.00) scale(1.0000,1.0800)" font-family="Liberation Mono, monospace" font-weight="bold" font-size="32.75" fill="#fff" xml:space="preserve" stroke="#fff" stroke-width="0.35">Ihdf1</text>
<text transform="translate(1670.30,488.70) scale(1.0000,1.0800)" font-family="Liberation Mono, monospace" font-weight="bold" font-size="32.75" fill="#fff" xml:space="preserve" stroke="#fff" stroke-width="0.35">(5)</text>
<text transform="translate(1944.74,487.10) scale(0.9775,1.0000)" font-family="Liberation Sans, sans-serif" font-size="72.50" fill="#fff" xml:space="preserve" stroke="#fff" stroke-width="1.7">2.078</text>
<rect x="2161.0" y="469.8" width="5" height="5" fill="#fff"/>
<rect x="2174.2" y="484.3" width="5" height="5" fill="#fff"/>
<line x1="2161.8" y1="489.0" x2="2178.6" y2="471.3" stroke="#fff" stroke-width="2.6"/>
<text transform="translate(1670.30,571.00) scale(1.0000,1.0800)" font-family="Liberation Mono, monospace" font-weight="bold" font-size="32.75" fill="#fff" xml:space="preserve" stroke="#fff" stroke-width="0.35">Ihdf1</text>
<text transform="translate(1670.30,606.80) scale(1.0000,1.0800)" font-family="Liberation Mono, monospace" font-weight="bold" font-size="32.75" fill="#fff" xml:space="preserve" stroke="#fff" stroke-width="0.35">(7)</text>
<text transform="translate(1951.65,605.10) scale(0.9334,1.0000)" font-family="Liberation Sans, sans-serif" font-size="72.50" fill="#fff" xml:space="preserve" stroke="#fff" stroke-width="1.7">1.114</text>
<rect x="2161.0" y="587.8" width="5" height="5" fill="#fff"/>
<rect x="2174.2" y="602.3" width="5" height="5" fill="#fff"/>
<line x1="2161.8" y1="607.0" x2="2178.6" y2="589.3" stroke="#fff" stroke-width="2.6"/>
<text transform="translate(2279.45,216.60) scale(1.0000,1.0800)" font-family="Liberation Mono, monospace" font-weight="bold" font-size="32.75" fill="#fff" xml:space="preserve" stroke="#fff" stroke-width="0.35">Ihdf1</text>
<text transform="translate(2279.45,252.50) scale(1.0000,1.0800)" font-family="Liberation Mono, monospace" font-weight="bold" font-size="32.75" fill="#fff" xml:space="preserve" stroke="#fff" stroke-width="0.35">(9)</text>
<text transform="translate(2553.75,251.10) scale(0.9722,1.0000)" font-family="Liberation Sans, sans-serif" font-size="72.50" fill="#fff" xml:space="preserve" stroke="#fff" stroke-width="1.7">0.009</text>
<rect x="2769.5" y="233.8" width="5" height="5" fill="#fff"/>
<rect x="2782.7" y="248.3" width="5" height="5" fill="#fff"/>
<line x1="2770.3" y1="253.0" x2="2787.1" y2="235.3" stroke="#fff" stroke-width="2.6"/>
<text transform="translate(2279.45,334.90) scale(1.0000,1.0800)" font-family="Liberation Mono, monospace" font-weight="bold" font-size="32.75" fill="#fff" xml:space="preserve" stroke="#fff" stroke-width="0.35">Ihdf1</text>
<text transform="translate(2279.45,370.60) scale(1.0000,1.0800)" font-family="Liberation Mono, monospace" font-weight="bold" font-size="32.75" fill="#fff" xml:space="preserve" stroke="#fff" stroke-width="0.35">(11)</text>
<text transform="translate(2553.75,369.10) scale(0.9709,1.0000)" font-family="Liberation Sans, sans-serif" font-size="72.50" fill="#fff" xml:space="preserve" stroke="#fff" stroke-width="1.7">0.626</text>
<rect x="2769.5" y="351.8" width="5" height="5" fill="#fff"/>
<rect x="2782.7" y="366.3" width="5" height="5" fill="#fff"/>
<line x1="2770.3" y1="371.0" x2="2787.1" y2="353.3" stroke="#fff" stroke-width="2.6"/>
<rect x="2279" y="420.9" width="39.4" height="38.9" fill="#009090"/>
<text transform="translate(2279.45,453.00) scale(1.0000,1.0800)" font-family="Liberation Mono, monospace" font-weight="bold" font-size="32.75" fill="#fff" xml:space="preserve" stroke="#fff" stroke-width="0.35">U1</text>
<text transform="translate(2474.54,487.10) scale(0.9479,1.0000)" font-family="Liberation Sans, sans-serif" font-size="72.50" fill="#fff" xml:space="preserve" stroke="#fff" stroke-width="1.7">230.251</text>
<text transform="translate(2769.25,492.40) scale(0.3413,0.3219)" font-family="Liberation Mono, monospace" font-weight="bold" font-size="100.00" fill="#fff" xml:space="preserve" >V</text>
<text transform="translate(2279.45,570.60) scale(1.0000,1.0800)" font-family="Liberation Mono, monospace" font-weight="bold" font-size="32.75" fill="#fff" xml:space="preserve" stroke="#fff" stroke-width="0.35">P</text>
<text transform="translate(2299.10,570.60) scale(1.0000,1.0800)" font-family="Liberation Mono, monospace" font-weight="bold" font-size="32.75" fill="#fff" xml:space="preserve" stroke="#fff" stroke-width="0.35">Σ</text>
<text transform="translate(2318.75,570.60) scale(1.0000,1.0800)" font-family="Liberation Mono, monospace" font-weight="bold" font-size="32.75" fill="#fff" xml:space="preserve" stroke="#fff" stroke-width="0.35">A</text>
<text transform="translate(2515.79,604.60) scale(0.9696,1.0000)" font-family="Liberation Sans, sans-serif" font-size="72.50" fill="#fff" xml:space="preserve" stroke="#fff" stroke-width="1.7">40.783</text>
<text transform="translate(2750.22,609.20) scale(0.3291,0.3064)" font-family="Liberation Mono, monospace" font-weight="bold" font-size="100.00" fill="#fff" xml:space="preserve" >kW</text>
<rect x="2239.8" y="184.4" width="2.6" height="433" fill="#fff"/>
<rect x="2848.6" y="184.5" width="38.9" height="432.8" fill="#d4d4d4"/>
<rect x="2851" y="186.5" width="34" height="36.8" fill="#707070"/>
<polygon points="2866.8,197.2 2880.4,211.2 2853.2,211.2" fill="#fff"/>
<rect x="2851" y="580.8" width="34" height="36.5" fill="#707070"/>
<polygon points="2853.2,591.8 2880.4,591.8 2866.8,605.8" fill="#fff"/>
<rect x="2850.8" y="226.6" width="32" height="31.8" fill="#000080"/>
<text transform="translate(2856.57,254.60) scale(1.0000,1.1232)" font-family="Liberation Mono, monospace" font-weight="bold" font-size="32.75" fill="#fff" xml:space="preserve" >1</text>
<rect x="2850.8" y="265.9" width="32" height="31.8" fill="#707070"/>
<text transform="translate(2856.95,293.95) scale(1.0000,1.1232)" font-family="Liberation Mono, monospace" font-weight="bold" font-size="32.75" fill="#fff" xml:space="preserve" >2</text>
<rect x="2850.8" y="305.3" width="32" height="31.8" fill="#707070"/>
<text transform="translate(2857.06,333.30) scale(1.0000,1.1232)" font-family="Liberation Mono, monospace" font-weight="bold" font-size="32.75" fill="#fff" xml:space="preserve" >3</text>
<rect x="2850.8" y="344.6" width="32" height="31.8" fill="#707070"/>
<text transform="translate(2856.89,372.65) scale(1.0000,1.1232)" font-family="Liberation Mono, monospace" font-weight="bold" font-size="32.75" fill="#fff" xml:space="preserve" >4</text>
<rect x="2850.8" y="384.0" width="32" height="31.8" fill="#707070"/>
<text transform="translate(2856.99,412.00) scale(1.0000,1.1232)" font-family="Liberation Mono, monospace" font-weight="bold" font-size="32.75" fill="#fff" xml:space="preserve" >5</text>
<rect x="2850.8" y="423.4" width="32" height="31.8" fill="#707070"/>
<text transform="translate(2856.89,451.35) scale(1.0000,1.1232)" font-family="Liberation Mono, monospace" font-weight="bold" font-size="32.75" fill="#fff" xml:space="preserve" >6</text>
<rect x="2850.8" y="462.7" width="32" height="31.8" fill="#707070"/>
<text transform="translate(2857.02,490.70) scale(1.0000,1.1232)" font-family="Liberation Mono, monospace" font-weight="bold" font-size="32.75" fill="#fff" xml:space="preserve" >7</text>
<rect x="2850.8" y="502.0" width="32" height="31.8" fill="#707070"/>
<text transform="translate(2856.97,530.05) scale(1.0000,1.1232)" font-family="Liberation Mono, monospace" font-weight="bold" font-size="32.75" fill="#fff" xml:space="preserve" >8</text>
<rect x="2850.8" y="541.4" width="32" height="31.8" fill="#707070"/>
<text transform="translate(2857.05,569.40) scale(1.0000,1.1232)" font-family="Liberation Mono, monospace" font-weight="bold" font-size="32.75" fill="#fff" xml:space="preserve" >9</text>
<path d="M2946.0 187.2 H2928.3 V500.1 H3180.7 V187.2 H3162.5" fill="none" stroke="#fff" stroke-width="2.5"/>
<path d="M3104.0 494.9 H3176.1 V189.7" fill="none" stroke="#000" stroke-width="5"/>
<path d="M2946.0 579.5 H2928.3 V658.0 H3180.7 V579.5 H3143.4" fill="none" stroke="#fff" stroke-width="2.5"/>
<path d="M3104.0 652.8 H3176.1 V582.0" fill="none" stroke="#000" stroke-width="5"/>
<text transform="translate(2947.55,215.50) scale(1.0000,1.0800)" font-family="Liberation Mono, monospace" font-weight="bold" font-size="32.75" fill="#ffff00" xml:space="preserve" stroke="#ffff00" stroke-width="0.35">U1</text>
<text transform="translate(3026.15,215.50) scale(1.0000,1.0800)" font-family="Liberation Mono, monospace" font-weight="bold" font-size="32.75" fill="#fff" xml:space="preserve" stroke="#fff" stroke-width="0.35">6</text>
<text transform="translate(3047.76,215.50) scale(0.8000,1.0800)" font-family="Liberation Mono, monospace" font-weight="bold" font-size="32.75" fill="#fff" xml:space="preserve" stroke="#fff" stroke-width="0.35">O</text>
<text transform="translate(3067.41,215.50) scale(0.8000,1.0800)" font-family="Liberation Mono, monospace" font-weight="bold" font-size="32.75" fill="#fff" xml:space="preserve" stroke="#fff" stroke-width="0.35">O</text>
<text transform="translate(3085.10,215.50) scale(1.0000,1.0800)" font-family="Liberation Mono, monospace" font-weight="bold" font-size="32.75" fill="#fff" xml:space="preserve" stroke="#fff" stroke-width="0.35">V</text>
<text transform="translate(2947.55,255.10) scale(1.0000,1.0800)" font-family="Liberation Mono, monospace" font-weight="bold" font-size="32.75" fill="#00ff00" xml:space="preserve" stroke="#00ff00" stroke-width="0.35">I1</text>
<text transform="translate(3006.50,255.10) scale(1.0000,1.0800)" font-family="Liberation Mono, monospace" font-weight="bold" font-size="32.75" fill="#fff" xml:space="preserve" stroke="#fff" stroke-width="0.35">5</text>
<text transform="translate(3028.11,255.10) scale(0.8000,1.0800)" font-family="Liberation Mono, monospace" font-weight="bold" font-size="32.75" fill="#fff" xml:space="preserve" stroke="#fff" stroke-width="0.35">O</text>
<text transform="translate(3047.76,255.10) scale(0.8000,1.0800)" font-family="Liberation Mono, monospace" font-weight="bold" font-size="32.75" fill="#fff" xml:space="preserve" stroke="#fff" stroke-width="0.35">O</text>
<text transform="translate(3065.45,255.10) scale(1.0000,1.0800)" font-family="Liberation Mono, monospace" font-weight="bold" font-size="32.75" fill="#fff" xml:space="preserve" stroke="#fff" stroke-width="0.35">mA</text>
<text transform="translate(2947.55,333.90) scale(1.0000,1.0800)" font-family="Liberation Mono, monospace" font-weight="bold" font-size="32.75" fill="#ff00ff" xml:space="preserve" stroke="#ff00ff" stroke-width="0.35">U2</text>
<text transform="translate(3026.15,333.90) scale(1.0000,1.0800)" font-family="Liberation Mono, monospace" font-weight="bold" font-size="32.75" fill="#fff" xml:space="preserve" stroke="#fff" stroke-width="0.35">6</text>
<text transform="translate(3047.76,333.90) scale(0.8000,1.0800)" font-family="Liberation Mono, monospace" font-weight="bold" font-size="32.75" fill="#fff" xml:space="preserve" stroke="#fff" stroke-width="0.35">O</text>
<text transform="translate(3067.41,333.90) scale(0.8000,1.0800)" font-family="Liberation Mono, monospace" font-weight="bold" font-size="32.75" fill="#fff" xml:space="preserve" stroke="#fff" stroke-width="0.35">O</text>
<text transform="translate(3085.10,333.90) scale(1.0000,1.0800)" font-family="Liberation Mono, monospace" font-weight="bold" font-size="32.75" fill="#fff" xml:space="preserve" stroke="#fff" stroke-width="0.35">V</text>
<text transform="translate(2947.55,373.50) scale(1.0000,1.0800)" font-family="Liberation Mono, monospace" font-weight="bold" font-size="32.75" fill="#00ffff" xml:space="preserve" stroke="#00ffff" stroke-width="0.35">I2</text>
<text transform="translate(3006.50,373.50) scale(1.0000,1.0800)" font-family="Liberation Mono, monospace" font-weight="bold" font-size="32.75" fill="#fff" xml:space="preserve" stroke="#fff" stroke-width="0.35">5</text>
<text transform="translate(3028.11,373.50) scale(0.8000,1.0800)" font-family="Liberation Mono, monospace" font-weight="bold" font-size="32.75" fill="#fff" xml:space="preserve" stroke="#fff" stroke-width="0.35">O</text>
<text transform="translate(3047.76,373.50) scale(0.8000,1.0800)" font-family="Liberation Mono, monospace" font-weight="bold" font-size="32.75" fill="#fff" xml:space="preserve" stroke="#fff" stroke-width="0.35">O</text>
<text transform="translate(3065.45,373.50) scale(1.0000,1.0800)" font-family="Liberation Mono, monospace" font-weight="bold" font-size="32.75" fill="#fff" xml:space="preserve" stroke="#fff" stroke-width="0.35">mA</text>
<text transform="translate(2947.55,452.20) scale(1.0000,1.0800)" font-family="Liberation Mono, monospace" font-weight="bold" font-size="32.75" fill="#ff0000" xml:space="preserve" stroke="#ff0000" stroke-width="0.35">U3</text>
<text transform="translate(3026.15,452.20) scale(1.0000,1.0800)" font-family="Liberation Mono, monospace" font-weight="bold" font-size="32.75" fill="#fff" xml:space="preserve" stroke="#fff" stroke-width="0.35">6</text>
<text transform="translate(3047.76,452.20) scale(0.8000,1.0800)" font-family="Liberation Mono, monospace" font-weight="bold" font-size="32.75" fill="#fff" xml:space="preserve" stroke="#fff" stroke-width="0.35">O</text>
<text transform="translate(3067.41,452.20) scale(0.8000,1.0800)" font-family="Liberation Mono, monospace" font-weight="bold" font-size="32.75" fill="#fff" xml:space="preserve" stroke="#fff" stroke-width="0.35">O</text>
<text transform="translate(3085.10,452.20) scale(1.0000,1.0800)" font-family="Liberation Mono, monospace" font-weight="bold" font-size="32.75" fill="#fff" xml:space="preserve" stroke="#fff" stroke-width="0.35">V</text>
<text transform="translate(2947.55,491.80) scale(1.0000,1.0800)" font-family="Liberation Mono, monospace" font-weight="bold" font-size="32.75" fill="#ff8c00" xml:space="preserve" stroke="#ff8c00" stroke-width="0.35">I3</text>
<text transform="translate(3006.50,491.80) scale(1.0000,1.0800)" font-family="Liberation Mono, monospace" font-weight="bold" font-size="32.75" fill="#fff" xml:space="preserve" stroke="#fff" stroke-width="0.35">5</text>
<text transform="translate(3028.11,491.80) scale(0.8000,1.0800)" font-family="Liberation Mono, monospace" font-weight="bold" font-size="32.75" fill="#fff" xml:space="preserve" stroke="#fff" stroke-width="0.35">O</text>
<text transform="translate(3047.76,491.80) scale(0.8000,1.0800)" font-family="Liberation Mono, monospace" font-weight="bold" font-size="32.75" fill="#fff" xml:space="preserve" stroke="#fff" stroke-width="0.35">O</text>
<text transform="translate(3065.45,491.80) scale(1.0000,1.0800)" font-family="Liberation Mono, monospace" font-weight="bold" font-size="32.75" fill="#fff" xml:space="preserve" stroke="#fff" stroke-width="0.35">mA</text>
<text transform="translate(2947.55,608.90) scale(1.0000,1.0800)" font-family="Liberation Mono, monospace" font-weight="bold" font-size="32.75" fill="#0080ff" xml:space="preserve" stroke="#0080ff" stroke-width="0.35">U4</text>
<text transform="translate(3006.50,608.90) scale(1.0000,1.0800)" font-family="Liberation Mono, monospace" font-weight="bold" font-size="32.75" fill="#fff" xml:space="preserve" stroke="#fff" stroke-width="0.35">1</text>
<text transform="translate(3028.11,608.90) scale(0.8000,1.0800)" font-family="Liberation Mono, monospace" font-weight="bold" font-size="32.75" fill="#fff" xml:space="preserve" stroke="#fff" stroke-width="0.35">O</text>
<text transform="translate(3047.76,608.90) scale(0.8000,1.0800)" font-family="Liberation Mono, monospace" font-weight="bold" font-size="32.75" fill="#fff" xml:space="preserve" stroke="#fff" stroke-width="0.35">O</text>
<text transform="translate(3067.41,608.90) scale(0.8000,1.0800)" font-family="Liberation Mono, monospace" font-weight="bold" font-size="32.75" fill="#fff" xml:space="preserve" stroke="#fff" stroke-width="0.35">O</text>
<text transform="translate(3085.10,608.90) scale(1.0000,1.0800)" font-family="Liberation Mono, monospace" font-weight="bold" font-size="32.75" fill="#fff" xml:space="preserve" stroke="#fff" stroke-width="0.35">V</text>
<text transform="translate(2947.55,648.70) scale(1.0000,1.0800)" font-family="Liberation Mono, monospace" font-weight="bold" font-size="32.75" fill="#b0b0b0" xml:space="preserve" stroke="#b0b0b0" stroke-width="0.35">I4</text>
<text transform="translate(3065.45,648.70) scale(1.0000,1.0800)" font-family="Liberation Mono, monospace" font-weight="bold" font-size="32.75" fill="#fff" xml:space="preserve" stroke="#fff" stroke-width="0.35">2A</text>
<text transform="translate(2967.20,570.70) scale(1.0000,1.0800)" font-family="Liberation Mono, monospace" font-weight="bold" font-size="32.75" fill="#fff" xml:space="preserve" stroke="#fff" stroke-width="0.35">Element4</text>
<text transform="translate(1631.00,1200.20) scale(1.0000,1.0800)" font-family="Liberation Mono, monospace" font-weight="bold" font-size="32.75" fill="#fff" xml:space="preserve" stroke="#fff" stroke-width="0.35">Update</text>
<text transform="translate(1807.85,1200.20) scale(1.0000,1.0800)" font-family="Liberation Mono, monospace" font-weight="bold" font-size="32.75" fill="#fff" xml:space="preserve" stroke="#fff" stroke-width="0.35">337</text>
<text transform="translate(2515.25,1200.20) scale(1.0000,1.0800)" font-family="Liberation Mono, monospace" font-weight="bold" font-size="32.75" fill="#fff" xml:space="preserve" stroke="#fff" stroke-width="0.35">2</text>
<text transform="translate(2536.86,1200.20) scale(0.8000,1.0800)" font-family="Liberation Mono, monospace" font-weight="bold" font-size="32.75" fill="#fff" xml:space="preserve" stroke="#fff" stroke-width="0.35">O</text>
<text transform="translate(2554.55,1200.20) scale(1.0000,1.0800)" font-family="Liberation Mono, monospace" font-weight="bold" font-size="32.75" fill="#fff" xml:space="preserve" stroke="#fff" stroke-width="0.35">23/1</text>
<text transform="translate(2635.11,1200.20) scale(0.8000,1.0800)" font-family="Liberation Mono, monospace" font-weight="bold" font-size="32.75" fill="#fff" xml:space="preserve" stroke="#fff" stroke-width="0.35">O</text>
<text transform="translate(2652.80,1200.20) scale(1.0000,1.0800)" font-family="Liberation Mono, monospace" font-weight="bold" font-size="32.75" fill="#fff" xml:space="preserve" stroke="#fff" stroke-width="0.35">/23</text>
<text transform="translate(2731.40,1200.20) scale(1.0000,1.0800)" font-family="Liberation Mono, monospace" font-weight="bold" font-size="32.75" fill="#fff" xml:space="preserve" stroke="#fff" stroke-width="0.35">19:3</text>
<text transform="translate(2811.96,1200.20) scale(0.8000,1.0800)" font-family="Liberation Mono, monospace" font-weight="bold" font-size="32.75" fill="#fff" xml:space="preserve" stroke="#fff" stroke-width="0.35">O</text>
<text transform="translate(2829.65,1200.20) scale(1.0000,1.0800)" font-family="Liberation Mono, monospace" font-weight="bold" font-size="32.75" fill="#fff" xml:space="preserve" stroke="#fff" stroke-width="0.35">:59</text>
<rect x="1656.0" y="638.0" width="1231.5" height="532.7" fill="#000"/>
<g fill="#e6e6e6"><rect x="1778.0" y="649.7" width="2.6" height="2.6"/><rect x="1900.7" y="649.7" width="2.6" height="2.6"/><rect x="2023.5" y="649.7" width="2.6" height="2.6"/><rect x="2146.2" y="649.7" width="2.6" height="2.6"/><rect x="2268.9" y="649.7" width="2.6" height="2.6"/><rect x="2391.7" y="649.7" width="2.6" height="2.6"/><rect x="2514.4" y="649.7" width="2.6" height="2.6"/><rect x="2637.1" y="649.7" width="2.6" height="2.6"/><rect x="2759.9" y="649.7" width="2.6" height="2.6"/><rect x="1778.0" y="662.0" width="2.6" height="2.6"/><rect x="1900.7" y="662.0" width="2.6" height="2.6"/><rect x="2023.5" y="662.0" width="2.6" height="2.6"/><rect x="2146.2" y="662.0" width="2.6" height="2.6"/><rect x="2268.9" y="662.0" width="2.6" height="2.6"/><rect x="2391.7" y="662.0" width="2.6" height="2.6"/><rect x="2514.4" y="662.0" width="2.6" height="2.6"/><rect x="2637.1" y="662.0" width="2.6" height="2.6"/><rect x="2759.9" y="662.0" width="2.6" height="2.6"/><rect x="1778.0" y="676.8" width="2.6" height="2.6"/><rect x="1900.7" y="676.8" width="2.6" height="2.6"/><rect x="2023.5" y="676.8" width="2.6" height="2.6"/><rect x="2146.2" y="676.8" width="2.6" height="2.6"/><rect x="2268.9" y="676.8" width="2.6" height="2.6"/><rect x="2391.7" y="676.8" width="2.6" height="2.6"/><rect x="2514.4" y="676.8" width="2.6" height="2.6"/><rect x="2637.1" y="676.8" width="2.6" height="2.6"/><rect x="2759.9" y="676.8" width="2.6" height="2.6"/><rect x="1778.0" y="689.1" width="2.6" height="2.6"/><rect x="1900.7" y="689.1" width="2.6" height="2.6"/><rect x="2023.5" y="689.1" width="2.6" height="2.6"/><rect x="2146.2" y="689.1" width="2.6" height="2.6"/><rect x="2268.9" y="689.1" width="2.6" height="2.6"/><rect x="2391.7" y="689.1" width="2.6" height="2.6"/><rect x="2514.4" y="689.1" width="2.6" height="2.6"/><rect x="2637.1" y="689.1" width="2.6" height="2.6"/><rect x="2759.9" y="689.1" width="2.6" height="2.6"/><rect x="1667.5" y="703.9" width="2.6" height="2.6"/><rect x="1679.8" y="703.9" width="2.6" height="2.6"/><rect x="1692.1" y="703.9" width="2.6" height="2.6"/><rect x="1704.3" y="703.9" width="2.6" height="2.6"/><rect x="1716.6" y="703.9" width="2.6" height="2.6"/><rect x="1728.9" y="703.9" width="2.6" height="2.6"/><rect x="1741.2" y="703.9" width="2.6" height="2.6"/><rect x="1753.4" y="703.9" width="2.6" height="2.6"/><rect x="1765.7" y="703.9" width="2.6" height="2.6"/><rect x="1778.0" y="703.9" width="2.6" height="2.6"/><rect x="1790.3" y="703.9" width="2.6" height="2.6"/><rect x="1802.5" y="703.9" width="2.6" height="2.6"/><rect x="1814.8" y="703.9" width="2.6" height="2.6"/><rect x="1827.1" y="703.9" width="2.6" height="2.6"/><rect x="1839.3" y="703.9" width="2.6" height="2.6"/><rect x="1851.6" y="703.9" width="2.6" height="2.6"/><rect x="1863.9" y="703.9" width="2.6" height="2.6"/><rect x="1876.2" y="703.9" width="2.6" height="2.6"/><rect x="1888.4" y="703.9" width="2.6" height="2.6"/><rect x="1900.7" y="703.9" width="2.6" height="2.6"/><rect x="1913.0" y="703.9" width="2.6" height="2.6"/><rect x="1925.3" y="703.9" width="2.6" height="2.6"/><rect x="1937.5" y="703.9" width="2.6" height="2.6"/><rect x="1949.8" y="703.9" width="2.6" height="2.6"/><rect x="1962.1" y="703.9" width="2.6" height="2.6"/><rect x="1974.4" y="703.9" width="2.6" height="2.6"/><rect x="1986.6" y="703.9" width="2.6" height="2.6"/><rect x="1998.9" y="703.9" width="2.6" height="2.6"/><rect x="2011.2" y="703.9" width="2.6" height="2.6"/><rect x="2023.5" y="703.9" width="2.6" height="2.6"/><rect x="2035.7" y="703.9" width="2.6" height="2.6"/><rect x="2048.0" y="703.9" width="2.6" height="2.6"/><rect x="2060.3" y="703.9" width="2.6" height="2.6"/><rect x="2072.5" y="703.9" width="2.6" height="2.6"/><rect x="2084.8" y="703.9" width="2.6" height="2.6"/><rect x="2097.1" y="703.9" width="2.6" height="2.6"/><rect x="2109.4" y="703.9" width="2.6" height="2.6"/><rect x="2121.6" y="703.9" width="2.6" height="2.6"/><rect x="2133.9" y="703.9" width="2.6" height="2.6"/><rect x="2146.2" y="703.9" width="2.6" height="2.6"/><rect x="2158.5" y="703.9" width="2.6" height="2.6"/><rect x="2170.7" y="703.9" width="2.6" height="2.6"/><rect x="2183.0" y="703.9" width="2.6" height="2.6"/><rect x="2195.3" y="703.9" width="2.6" height="2.6"/><rect x="2207.6" y="703.9" width="2.6" height="2.6"/><rect x="2219.8" y="703.9" width="2.6" height="2.6"/><rect x="2232.1" y="703.9" width="2.6" height="2.6"/><rect x="2244.4" y="703.9" width="2.6" height="2.6"/><rect x="2256.6" y="703.9" width="2.6" height="2.6"/><rect x="2268.9" y="703.9" width="2.6" height="2.6"/><rect x="2281.2" y="703.9" width="2.6" height="2.6"/><rect x="2293.5" y="703.9" width="2.6" height="2.6"/><rect x="2305.7" y="703.9" width="2.6" height="2.6"/><rect x="2318.0" y="703.9" width="2.6" height="2.6"/><rect x="2330.3" y="703.9" width="2.6" height="2.6"/><rect x="2342.6" y="703.9" width="2.6" height="2.6"/><rect x="2354.8" y="703.9" width="2.6" height="2.6"/><rect x="2367.1" y="703.9" width="2.6" height="2.6"/><rect x="2379.4" y="703.9" width="2.6" height="2.6"/><rect x="2391.7" y="703.9" width="2.6" height="2.6"/><rect x="2403.9" y="703.9" width="2.6" height="2.6"/><rect x="2416.2" y="703.9" width="2.6" height="2.6"/><rect x="2428.5" y="703.9" width="2.6" height="2.6"/><rect x="2440.8" y="703.9" width="2.6" height="2.6"/><rect x="2453.0" y="703.9" width="2.6" height="2.6"/><rect x="2465.3" y="703.9" width="2.6" height="2.6"/><rect x="2477.6" y="703.9" width="2.6" height="2.6"/><rect x="2489.8" y="703.9" width="2.6" height="2.6"/><rect x="2502.1" y="703.9" width="2.6" height="2.6"/><rect x="2514.4" y="703.9" width="2.6" height="2.6"/><rect x="2526.7" y="703.9" width="2.6" height="2.6"/><rect x="2538.9" y="703.9" width="2.6" height="2.6"/><rect x="2551.2" y="703.9" width="2.6" height="2.6"/><rect x="2563.5" y="703.9" width="2.6" height="2.6"/><rect x="2575.8" y="703.9" width="2.6" height="2.6"/><rect x="2588.0" y="703.9" width="2.6" height="2.6"/><rect x="2600.3" y="703.9" width="2.6" height="2.6"/><rect x="2612.6" y="703.9" width="2.6" height="2.6"/><rect x="2624.9" y="703.9" width="2.6" height="2.6"/><rect x="2637.1" y="703.9" width="2.6" height="2.6"/><rect x="2649.4" y="703.9" width="2.6" height="2.6"/><rect x="2661.7" y="703.9" width="2.6" height="2.6"/><rect x="2673.9" y="703.9" width="2.6" height="2.6"/><rect x="2686.2" y="703.9" width="2.6" height="2.6"/><rect x="2698.5" y="703.9" width="2.6" height="2.6"/><rect x="2710.8" y="703.9" width="2.6" height="2.6"/><rect x="2723.0" y="703.9" width="2.6" height="2.6"/><rect x="2735.3" y="703.9" width="2.6" height="2.6"/><rect x="2747.6" y="703.9" width="2.6" height="2.6"/><rect x="2759.9" y="703.9" width="2.6" height="2.6"/><rect x="2772.1" y="703.9" width="2.6" height="2.6"/><rect x="2784.4" y="703.9" width="2.6" height="2.6"/><rect x="2796.7" y="703.9" width="2.6" height="2.6"/><rect x="2809.0" y="703.9" width="2.6" height="2.6"/><rect x="2821.2" y="703.9" width="2.6" height="2.6"/><rect x="2833.5" y="703.9" width="2.6" height="2.6"/><rect x="2845.8" y="703.9" width="2.6" height="2.6"/><rect x="2858.0" y="703.9" width="2.6" height="2.6"/><rect x="2870.3" y="703.9" width="2.6" height="2.6"/><rect x="1778.0" y="716.2" width="2.6" height="2.6"/><rect x="1900.7" y="716.2" width="2.6" height="2.6"/><rect x="2023.5" y="716.2" width="2.6" height="2.6"/><rect x="2146.2" y="716.2" width="2.6" height="2.6"/><rect x="2268.9" y="716.2" width="2.6" height="2.6"/><rect x="2391.7" y="716.2" width="2.6" height="2.6"/><rect x="2514.4" y="716.2" width="2.6" height="2.6"/><rect x="2637.1" y="716.2" width="2.6" height="2.6"/><rect x="2759.9" y="716.2" width="2.6" height="2.6"/><rect x="1778.0" y="728.5" width="2.6" height="2.6"/><rect x="1900.7" y="728.5" width="2.6" height="2.6"/><rect x="2023.5" y="728.5" width="2.6" height="2.6"/><rect x="2146.2" y="728.5" width="2.6" height="2.6"/><rect x="2268.9" y="728.5" width="2.6" height="2.6"/><rect x="2391.7" y="728.5" width="2.6" height="2.6"/><rect x="2514.4" y="728.5" width="2.6" height="2.6"/><rect x="2637.1" y="728.5" width="2.6" height="2.6"/><rect x="2759.9" y="728.5" width="2.6" height="2.6"/><rect x="1778.0" y="743.3" width="2.6" height="2.6"/><rect x="1900.7" y="743.3" width="2.6" height="2.6"/><rect x="2023.5" y="743.3" width="2.6" height="2.6"/><rect x="2146.2" y="743.3" width="2.6" height="2.6"/><rect x="2268.9" y="743.3" width="2.6" height="2.6"/><rect x="2391.7" y="743.3" width="2.6" height="2.6"/><rect x="2514.4" y="743.3" width="2.6" height="2.6"/><rect x="2637.1" y="743.3" width="2.6" height="2.6"/><rect x="2759.9" y="743.3" width="2.6" height="2.6"/><rect x="1778.0" y="755.6" width="2.6" height="2.6"/><rect x="1900.7" y="755.6" width="2.6" height="2.6"/><rect x="2023.5" y="755.6" width="2.6" height="2.6"/><rect x="2146.2" y="755.6" width="2.6" height="2.6"/><rect x="2268.9" y="755.6" width="2.6" height="2.6"/><rect x="2391.7" y="755.6" width="2.6" height="2.6"/><rect x="2514.4" y="755.6" width="2.6" height="2.6"/><rect x="2637.1" y="755.6" width="2.6" height="2.6"/><rect x="2759.9" y="755.6" width="2.6" height="2.6"/><rect x="1667.5" y="770.4" width="2.6" height="2.6"/><rect x="1679.8" y="770.4" width="2.6" height="2.6"/><rect x="1692.1" y="770.4" width="2.6" height="2.6"/><rect x="1704.3" y="770.4" width="2.6" height="2.6"/><rect x="1716.6" y="770.4" width="2.6" height="2.6"/><rect x="1728.9" y="770.4" width="2.6" height="2.6"/><rect x="1741.2" y="770.4" width="2.6" height="2.6"/><rect x="1753.4" y="770.4" width="2.6" height="2.6"/><rect x="1765.7" y="770.4" width="2.6" height="2.6"/><rect x="1778.0" y="770.4" width="2.6" height="2.6"/><rect x="1790.3" y="770.4" width="2.6" height="2.6"/><rect x="1802.5" y="770.4" width="2.6" height="2.6"/><rect x="1814.8" y="770.4" width="2.6" height="2.6"/><rect x="1827.1" y="770.4" width="2.6" height="2.6"/><rect x="1839.3" y="770.4" width="2.6" height="2.6"/><rect x="1851.6" y="770.4" width="2.6" height="2.6"/><rect x="1863.9" y="770.4" width="2.6" height="2.6"/><rect x="1876.2" y="770.4" width="2.6" height="2.6"/><rect x="1888.4" y="770.4" width="2.6" height="2.6"/><rect x="1900.7" y="770.4" width="2.6" height="2.6"/><rect x="1913.0" y="770.4" width="2.6" height="2.6"/><rect x="1925.3" y="770.4" width="2.6" height="2.6"/><rect x="1937.5" y="770.4" width="2.6" height="2.6"/><rect x="1949.8" y="770.4" width="2.6" height="2.6"/><rect x="1962.1" y="770.4" width="2.6" height="2.6"/><rect x="1974.4" y="770.4" width="2.6" height="2.6"/><rect x="1986.6" y="770.4" width="2.6" height="2.6"/><rect x="1998.9" y="770.4" width="2.6" height="2.6"/><rect x="2011.2" y="770.4" width="2.6" height="2.6"/><rect x="2023.5" y="770.4" width="2.6" height="2.6"/><rect x="2035.7" y="770.4" width="2.6" height="2.6"/><rect x="2048.0" y="770.4" width="2.6" height="2.6"/><rect x="2060.3" y="770.4" width="2.6" height="2.6"/><rect x="2072.5" y="770.4" width="2.6" height="2.6"/><rect x="2084.8" y="770.4" width="2.6" height="2.6"/><rect x="2097.1" y="770.4" width="2.6" height="2.6"/><rect x="2109.4" y="770.4" width="2.6" height="2.6"/><rect x="2121.6" y="770.4" width="2.6" height="2.6"/><rect x="2133.9" y="770.4" width="2.6" height="2.6"/><rect x="2146.2" y="770.4" width="2.6" height="2.6"/><rect x="2158.5" y="770.4" width="2.6" height="2.6"/><rect x="2170.7" y="770.4" width="2.6" height="2.6"/><rect x="2183.0" y="770.4" width="2.6" height="2.6"/><rect x="2195.3" y="770.4" width="2.6" height="2.6"/><rect x="2207.6" y="770.4" width="2.6" height="2.6"/><rect x="2219.8" y="770.4" width="2.6" height="2.6"/><rect x="2232.1" y="770.4" width="2.6" height="2.6"/><rect x="2244.4" y="770.4" width="2.6" height="2.6"/><rect x="2256.6" y="770.4" width="2.6" height="2.6"/><rect x="2268.9" y="770.4" width="2.6" height="2.6"/><rect x="2281.2" y="770.4" width="2.6" height="2.6"/><rect x="2293.5" y="770.4" width="2.6" height="2.6"/><rect x="2305.7" y="770.4" width="2.6" height="2.6"/><rect x="2318.0" y="770.4" width="2.6" height="2.6"/><rect x="2330.3" y="770.4" width="2.6" height="2.6"/><rect x="2342.6" y="770.4" width="2.6" height="2.6"/><rect x="2354.8" y="770.4" width="2.6" height="2.6"/><rect x="2367.1" y="770.4" width="2.6" height="2.6"/><rect x="2379.4" y="770.4" width="2.6" height="2.6"/><rect x="2391.7" y="770.4" width="2.6" height="2.6"/><rect x="2403.9" y="770.4" width="2.6" height="2.6"/><rect x="2416.2" y="770.4" width="2.6" height="2.6"/><rect x="2428.5" y="770.4" width="2.6" height="2.6"/><rect x="2440.8" y="770.4" width="2.6" height="2.6"/><rect x="2453.0" y="770.4" width="2.6" height="2.6"/><rect x="2465.3" y="770.4" width="2.6" height="2.6"/><rect x="2477.6" y="770.4" width="2.6" height="2.6"/><rect x="2489.8" y="770.4" width="2.6" height="2.6"/><rect x="2502.1" y="770.4" width="2.6" height="2.6"/><rect x="2514.4" y="770.4" width="2.6" height="2.6"/><rect x="2526.7" y="770.4" width="2.6" height="2.6"/><rect x="2538.9" y="770.4" width="2.6" height="2.6"/><rect x="2551.2" y="770.4" width="2.6" height="2.6"/><rect x="2563.5" y="770.4" width="2.6" height="2.6"/><rect x="2575.8" y="770.4" width="2.6" height="2.6"/><rect x="2588.0" y="770.4" width="2.6" height="2.6"/><rect x="2600.3" y="770.4" width="2.6" height="2.6"/><rect x="2612.6" y="770.4" width="2.6" height="2.6"/><rect x="2624.9" y="770.4" width="2.6" height="2.6"/><rect x="2637.1" y="770.4" width="2.6" height="2.6"/><rect x="2649.4" y="770.4" width="2.6" height="2.6"/><rect x="2661.7" y="770.4" width="2.6" height="2.6"/><rect x="2673.9" y="770.4" width="2.6" height="2.6"/><rect x="2686.2" y="770.4" width="2.6" height="2.6"/><rect x="2698.5" y="770.4" width="2.6" height="2.6"/><rect x="2710.8" y="770.4" width="2.6" height="2.6"/><rect x="2723.0" y="770.4" width="2.6" height="2.6"/><rect x="2735.3" y="770.4" width="2.6" height="2.6"/><rect x="2747.6" y="770.4" width="2.6" height="2.6"/><rect x="2759.9" y="770.4" width="2.6" height="2.6"/><rect x="2772.1" y="770.4" width="2.6" height="2.6"/><rect x="2784.4" y="770.4" width="2.6" height="2.6"/><rect x="2796.7" y="770.4" width="2.6" height="2.6"/><rect x="2809.0" y="770.4" width="2.6" height="2.6"/><rect x="2821.2" y="770.4" width="2.6" height="2.6"/><rect x="2833.5" y="770.4" width="2.6" height="2.6"/><rect x="2845.8" y="770.4" width="2.6" height="2.6"/><rect x="2858.0" y="770.4" width="2.6" height="2.6"/><rect x="2870.3" y="770.4" width="2.6" height="2.6"/><rect x="1778.0" y="782.7" width="2.6" height="2.6"/><rect x="1900.7" y="782.7" width="2.6" height="2.6"/><rect x="2023.5" y="782.7" width="2.6" height="2.6"/><rect x="2146.2" y="782.7" width="2.6" height="2.6"/><rect x="2268.9" y="782.7" width="2.6" height="2.6"/><rect x="2391.7" y="782.7" width="2.6" height="2.6"/><rect x="2514.4" y="782.7" width="2.6" height="2.6"/><rect x="2637.1" y="782.7" width="2.6" height="2.6"/><rect x="2759.9" y="782.7" width="2.6" height="2.6"/><rect x="1778.0" y="795.0" width="2.6" height="2.6"/><rect x="1900.7" y="795.0" width="2.6" height="2.6"/><rect x="2023.5" y="795.0" width="2.6" height="2.6"/><rect x="2146.2" y="795.0" width="2.6" height="2.6"/><rect x="2268.9" y="795.0" width="2.6" height="2.6"/><rect x="2391.7" y="795.0" width="2.6" height="2.6"/><rect x="2514.4" y="795.0" width="2.6" height="2.6"/><rect x="2637.1" y="795.0" width="2.6" height="2.6"/><rect x="2759.9" y="795.0" width="2.6" height="2.6"/><rect x="1778.0" y="809.8" width="2.6" height="2.6"/><rect x="1900.7" y="809.8" width="2.6" height="2.6"/><rect x="2023.5" y="809.8" width="2.6" height="2.6"/><rect x="2146.2" y="809.8" width="2.6" height="2.6"/><rect x="2268.9" y="809.8" width="2.6" height="2.6"/><rect x="2391.7" y="809.8" width="2.6" height="2.6"/><rect x="2514.4" y="809.8" width="2.6" height="2.6"/><rect x="2637.1" y="809.8" width="2.6" height="2.6"/><rect x="2759.9" y="809.8" width="2.6" height="2.6"/><rect x="1778.0" y="822.1" width="2.6" height="2.6"/><rect x="1900.7" y="822.1" width="2.6" height="2.6"/><rect x="2023.5" y="822.1" width="2.6" height="2.6"/><rect x="2146.2" y="822.1" width="2.6" height="2.6"/><rect x="2268.9" y="822.1" width="2.6" height="2.6"/><rect x="2391.7" y="822.1" width="2.6" height="2.6"/><rect x="2514.4" y="822.1" width="2.6" height="2.6"/><rect x="2637.1" y="822.1" width="2.6" height="2.6"/><rect x="2759.9" y="822.1" width="2.6" height="2.6"/><rect x="1667.5" y="836.9" width="2.6" height="2.6"/><rect x="1679.8" y="836.9" width="2.6" height="2.6"/><rect x="1692.1" y="836.9" width="2.6" height="2.6"/><rect x="1704.3" y="836.9" width="2.6" height="2.6"/><rect x="1716.6" y="836.9" width="2.6" height="2.6"/><rect x="1728.9" y="836.9" width="2.6" height="2.6"/><rect x="1741.2" y="836.9" width="2.6" height="2.6"/><rect x="1753.4" y="836.9" width="2.6" height="2.6"/><rect x="1765.7" y="836.9" width="2.6" height="2.6"/><rect x="1778.0" y="836.9" width="2.6" height="2.6"/><rect x="1790.3" y="836.9" width="2.6" height="2.6"/><rect x="1802.5" y="836.9" width="2.6" height="2.6"/><rect x="1814.8" y="836.9" width="2.6" height="2.6"/><rect x="1827.1" y="836.9" width="2.6" height="2.6"/><rect x="1839.3" y="836.9" width="2.6" height="2.6"/><rect x="1851.6" y="836.9" width="2.6" height="2.6"/><rect x="1863.9" y="836.9" width="2.6" height="2.6"/><rect x="1876.2" y="836.9" width="2.6" height="2.6"/><rect x="1888.4" y="836.9" width="2.6" height="2.6"/><rect x="1900.7" y="836.9" width="2.6" height="2.6"/><rect x="1913.0" y="836.9" width="2.6" height="2.6"/><rect x="1925.3" y="836.9" width="2.6" height="2.6"/><rect x="1937.5" y="836.9" width="2.6" height="2.6"/><rect x="1949.8" y="836.9" width="2.6" height="2.6"/><rect x="1962.1" y="836.9" width="2.6" height="2.6"/><rect x="1974.4" y="836.9" width="2.6" height="2.6"/><rect x="1986.6" y="836.9" width="2.6" height="2.6"/><rect x="1998.9" y="836.9" width="2.6" height="2.6"/><rect x="2011.2" y="836.9" width="2.6" height="2.6"/><rect x="2023.5" y="836.9" width="2.6" height="2.6"/><rect x="2035.7" y="836.9" width="2.6" height="2.6"/><rect x="2048.0" y="836.9" width="2.6" height="2.6"/><rect x="2060.3" y="836.9" width="2.6" height="2.6"/><rect x="2072.5" y="836.9" width="2.6" height="2.6"/><rect x="2084.8" y="836.9" width="2.6" height="2.6"/><rect x="2097.1" y="836.9" width="2.6" height="2.6"/><rect x="2109.4" y="836.9" width="2.6" height="2.6"/><rect x="2121.6" y="836.9" width="2.6" height="2.6"/><rect x="2133.9" y="836.9" width="2.6" height="2.6"/><rect x="2146.2" y="836.9" width="2.6" height="2.6"/><rect x="2158.5" y="836.9" width="2.6" height="2.6"/><rect x="2170.7" y="836.9" width="2.6" height="2.6"/><rect x="2183.0" y="836.9" width="2.6" height="2.6"/><rect x="2195.3" y="836.9" width="2.6" height="2.6"/><rect x="2207.6" y="836.9" width="2.6" height="2.6"/><rect x="2219.8" y="836.9" width="2.6" height="2.6"/><rect x="2232.1" y="836.9" width="2.6" height="2.6"/><rect x="2244.4" y="836.9" width="2.6" height="2.6"/><rect x="2256.6" y="836.9" width="2.6" height="2.6"/><rect x="2268.9" y="836.9" width="2.6" height="2.6"/><rect x="2281.2" y="836.9" width="2.6" height="2.6"/><rect x="2293.5" y="836.9" width="2.6" height="2.6"/><rect x="2305.7" y="836.9" width="2.6" height="2.6"/><rect x="2318.0" y="836.9" width="2.6" height="2.6"/><rect x="2330.3" y="836.9" width="2.6" height="2.6"/><rect x="2342.6" y="836.9" width="2.6" height="2.6"/><rect x="2354.8" y="836.9" width="2.6" height="2.6"/><rect x="2367.1" y="836.9" width="2.6" height="2.6"/><rect x="2379.4" y="836.9" width="2.6" height="2.6"/><rect x="2391.7" y="836.9" width="2.6" height="2.6"/><rect x="2403.9" y="836.9" width="2.6" height="2.6"/><rect x="2416.2" y="836.9" width="2.6" height="2.6"/><rect x="2428.5" y="836.9" width="2.6" height="2.6"/><rect x="2440.8" y="836.9" width="2.6" height="2.6"/><rect x="2453.0" y="836.9" width="2.6" height="2.6"/><rect x="2465.3" y="836.9" width="2.6" height="2.6"/><rect x="2477.6" y="836.9" width="2.6" height="2.6"/><rect x="2489.8" y="836.9" width="2.6" height="2.6"/><rect x="2502.1" y="836.9" width="2.6" height="2.6"/><rect x="2514.4" y="836.9" width="2.6" height="2.6"/><rect x="2526.7" y="836.9" width="2.6" height="2.6"/><rect x="2538.9" y="836.9" width="2.6" height="2.6"/><rect x="2551.2" y="836.9" width="2.6" height="2.6"/><rect x="2563.5" y="836.9" width="2.6" height="2.6"/><rect x="2575.8" y="836.9" width="2.6" height="2.6"/><rect x="2588.0" y="836.9" width="2.6" height="2.6"/><rect x="2600.3" y="836.9" width="2.6" height="2.6"/><rect x="2612.6" y="836.9" width="2.6" height="2.6"/><rect x="2624.9" y="836.9" width="2.6" height="2.6"/><rect x="2637.1" y="836.9" width="2.6" height="2.6"/><rect x="2649.4" y="836.9" width="2.6" height="2.6"/><rect x="2661.7" y="836.9" width="2.6" height="2.6"/><rect x="2673.9" y="836.9" width="2.6" height="2.6"/><rect x="2686.2" y="836.9" width="2.6" height="2.6"/><rect x="2698.5" y="836.9" width="2.6" height="2.6"/><rect x="2710.8" y="836.9" width="2.6" height="2.6"/><rect x="2723.0" y="836.9" width="2.6" height="2.6"/><rect x="2735.3" y="836.9" width="2.6" height="2.6"/><rect x="2747.6" y="836.9" width="2.6" height="2.6"/><rect x="2759.9" y="836.9" width="2.6" height="2.6"/><rect x="2772.1" y="836.9" width="2.6" height="2.6"/><rect x="2784.4" y="836.9" width="2.6" height="2.6"/><rect x="2796.7" y="836.9" width="2.6" height="2.6"/><rect x="2809.0" y="836.9" width="2.6" height="2.6"/><rect x="2821.2" y="836.9" width="2.6" height="2.6"/><rect x="2833.5" y="836.9" width="2.6" height="2.6"/><rect x="2845.8" y="836.9" width="2.6" height="2.6"/><rect x="2858.0" y="836.9" width="2.6" height="2.6"/><rect x="2870.3" y="836.9" width="2.6" height="2.6"/><rect x="1778.0" y="849.2" width="2.6" height="2.6"/><rect x="1900.7" y="849.2" width="2.6" height="2.6"/><rect x="2023.5" y="849.2" width="2.6" height="2.6"/><rect x="2146.2" y="849.2" width="2.6" height="2.6"/><rect x="2268.9" y="849.2" width="2.6" height="2.6"/><rect x="2391.7" y="849.2" width="2.6" height="2.6"/><rect x="2514.4" y="849.2" width="2.6" height="2.6"/><rect x="2637.1" y="849.2" width="2.6" height="2.6"/><rect x="2759.9" y="849.2" width="2.6" height="2.6"/><rect x="1778.0" y="861.5" width="2.6" height="2.6"/><rect x="1900.7" y="861.5" width="2.6" height="2.6"/><rect x="2023.5" y="861.5" width="2.6" height="2.6"/><rect x="2146.2" y="861.5" width="2.6" height="2.6"/><rect x="2268.9" y="861.5" width="2.6" height="2.6"/><rect x="2391.7" y="861.5" width="2.6" height="2.6"/><rect x="2514.4" y="861.5" width="2.6" height="2.6"/><rect x="2637.1" y="861.5" width="2.6" height="2.6"/><rect x="2759.9" y="861.5" width="2.6" height="2.6"/><rect x="1778.0" y="876.3" width="2.6" height="2.6"/><rect x="1900.7" y="876.3" width="2.6" height="2.6"/><rect x="2023.5" y="876.3" width="2.6" height="2.6"/><rect x="2146.2" y="876.3" width="2.6" height="2.6"/><rect x="2268.9" y="876.3" width="2.6" height="2.6"/><rect x="2391.7" y="876.3" width="2.6" height="2.6"/><rect x="2514.4" y="876.3" width="2.6" height="2.6"/><rect x="2637.1" y="876.3" width="2.6" height="2.6"/><rect x="2759.9" y="876.3" width="2.6" height="2.6"/><rect x="1778.0" y="888.6" width="2.6" height="2.6"/><rect x="1900.7" y="888.6" width="2.6" height="2.6"/><rect x="2023.5" y="888.6" width="2.6" height="2.6"/><rect x="2146.2" y="888.6" width="2.6" height="2.6"/><rect x="2268.9" y="888.6" width="2.6" height="2.6"/><rect x="2391.7" y="888.6" width="2.6" height="2.6"/><rect x="2514.4" y="888.6" width="2.6" height="2.6"/><rect x="2637.1" y="888.6" width="2.6" height="2.6"/><rect x="2759.9" y="888.6" width="2.6" height="2.6"/><rect x="1778.0" y="915.9" width="2.6" height="2.6"/><rect x="1900.7" y="915.9" width="2.6" height="2.6"/><rect x="2023.5" y="915.9" width="2.6" height="2.6"/><rect x="2146.2" y="915.9" width="2.6" height="2.6"/><rect x="2268.9" y="915.9" width="2.6" height="2.6"/><rect x="2391.7" y="915.9" width="2.6" height="2.6"/><rect x="2514.4" y="915.9" width="2.6" height="2.6"/><rect x="2637.1" y="915.9" width="2.6" height="2.6"/><rect x="2759.9" y="915.9" width="2.6" height="2.6"/><rect x="1778.0" y="928.2" width="2.6" height="2.6"/><rect x="1900.7" y="928.2" width="2.6" height="2.6"/><rect x="2023.5" y="928.2" width="2.6" height="2.6"/><rect x="2146.2" y="928.2" width="2.6" height="2.6"/><rect x="2268.9" y="928.2" width="2.6" height="2.6"/><rect x="2391.7" y="928.2" width="2.6" height="2.6"/><rect x="2514.4" y="928.2" width="2.6" height="2.6"/><rect x="2637.1" y="928.2" width="2.6" height="2.6"/><rect x="2759.9" y="928.2" width="2.6" height="2.6"/><rect x="1778.0" y="943.0" width="2.6" height="2.6"/><rect x="1900.7" y="943.0" width="2.6" height="2.6"/><rect x="2023.5" y="943.0" width="2.6" height="2.6"/><rect x="2146.2" y="943.0" width="2.6" height="2.6"/><rect x="2268.9" y="943.0" width="2.6" height="2.6"/><rect x="2391.7" y="943.0" width="2.6" height="2.6"/><rect x="2514.4" y="943.0" width="2.6" height="2.6"/><rect x="2637.1" y="943.0" width="2.6" height="2.6"/><rect x="2759.9" y="943.0" width="2.6" height="2.6"/><rect x="1778.0" y="955.3" width="2.6" height="2.6"/><rect x="1900.7" y="955.3" width="2.6" height="2.6"/><rect x="2023.5" y="955.3" width="2.6" height="2.6"/><rect x="2146.2" y="955.3" width="2.6" height="2.6"/><rect x="2268.9" y="955.3" width="2.6" height="2.6"/><rect x="2391.7" y="955.3" width="2.6" height="2.6"/><rect x="2514.4" y="955.3" width="2.6" height="2.6"/><rect x="2637.1" y="955.3" width="2.6" height="2.6"/><rect x="2759.9" y="955.3" width="2.6" height="2.6"/><rect x="1667.5" y="970.1" width="2.6" height="2.6"/><rect x="1679.8" y="970.1" width="2.6" height="2.6"/><rect x="1692.1" y="970.1" width="2.6" height="2.6"/><rect x="1704.3" y="970.1" width="2.6" height="2.6"/><rect x="1716.6" y="970.1" width="2.6" height="2.6"/><rect x="1728.9" y="970.1" width="2.6" height="2.6"/><rect x="1741.2" y="970.1" width="2.6" height="2.6"/><rect x="1753.4" y="970.1" width="2.6" height="2.6"/><rect x="1765.7" y="970.1" width="2.6" height="2.6"/><rect x="1778.0" y="970.1" width="2.6" height="2.6"/><rect x="1790.3" y="970.1" width="2.6" height="2.6"/><rect x="1802.5" y="970.1" width="2.6" height="2.6"/><rect x="1814.8" y="970.1" width="2.6" height="2.6"/><rect x="1827.1" y="970.1" width="2.6" height="2.6"/><rect x="1839.3" y="970.1" width="2.6" height="2.6"/><rect x="1851.6" y="970.1" width="2.6" height="2.6"/><rect x="1863.9" y="970.1" width="2.6" height="2.6"/><rect x="1876.2" y="970.1" width="2.6" height="2.6"/><rect x="1888.4" y="970.1" width="2.6" height="2.6"/><rect x="1900.7" y="970.1" width="2.6" height="2.6"/><rect x="1913.0" y="970.1" width="2.6" height="2.6"/><rect x="1925.3" y="970.1" width="2.6" height="2.6"/><rect x="1937.5" y="970.1" width="2.6" height="2.6"/><rect x="1949.8" y="970.1" width="2.6" height="2.6"/><rect x="1962.1" y="970.1" width="2.6" height="2.6"/><rect x="1974.4" y="970.1" width="2.6" height="2.6"/><rect x="1986.6" y="970.1" width="2.6" height="2.6"/><rect x="1998.9" y="970.1" width="2.6" height="2.6"/><rect x="2011.2" y="970.1" width="2.6" height="2.6"/><rect x="2023.5" y="970.1" width="2.6" height="2.6"/><rect x="2035.7" y="970.1" width="2.6" height="2.6"/><rect x="2048.0" y="970.1" width="2.6" height="2.6"/><rect x="2060.3" y="970.1" width="2.6" height="2.6"/><rect x="2072.5" y="970.1" width="2.6" height="2.6"/><rect x="2084.8" y="970.1" width="2.6" height="2.6"/><rect x="2097.1" y="970.1" width="2.6" height="2.6"/><rect x="2109.4" y="970.1" width="2.6" height="2.6"/><rect x="2121.6" y="970.1" width="2.6" height="2.6"/><rect x="2133.9" y="970.1" width="2.6" height="2.6"/><rect x="2146.2" y="970.1" width="2.6" height="2.6"/><rect x="2158.5" y="970.1" width="2.6" height="2.6"/><rect x="2170.7" y="970.1" width="2.6" height="2.6"/><rect x="2183.0" y="970.1" width="2.6" height="2.6"/><rect x="2195.3" y="970.1" width="2.6" height="2.6"/><rect x="2207.6" y="970.1" width="2.6" height="2.6"/><rect x="2219.8" y="970.1" width="2.6" height="2.6"/><rect x="2232.1" y="970.1" width="2.6" height="2.6"/><rect x="2244.4" y="970.1" width="2.6" height="2.6"/><rect x="2256.6" y="970.1" width="2.6" height="2.6"/><rect x="2268.9" y="970.1" width="2.6" height="2.6"/><rect x="2281.2" y="970.1" width="2.6" height="2.6"/><rect x="2293.5" y="970.1" width="2.6" height="2.6"/><rect x="2305.7" y="970.1" width="2.6" height="2.6"/><rect x="2318.0" y="970.1" width="2.6" height="2.6"/><rect x="2330.3" y="970.1" width="2.6" height="2.6"/><rect x="2342.6" y="970.1" width="2.6" height="2.6"/><rect x="2354.8" y="970.1" width="2.6" height="2.6"/><rect x="2367.1" y="970.1" width="2.6" height="2.6"/><rect x="2379.4" y="970.1" width="2.6" height="2.6"/><rect x="2391.7" y="970.1" width="2.6" height="2.6"/><rect x="2403.9" y="970.1" width="2.6" height="2.6"/><rect x="2416.2" y="970.1" width="2.6" height="2.6"/><rect x="2428.5" y="970.1" width="2.6" height="2.6"/><rect x="2440.8" y="970.1" width="2.6" height="2.6"/><rect x="2453.0" y="970.1" width="2.6" height="2.6"/><rect x="2465.3" y="970.1" width="2.6" height="2.6"/><rect x="2477.6" y="970.1" width="2.6" height="2.6"/><rect x="2489.8" y="970.1" width="2.6" height="2.6"/><rect x="2502.1" y="970.1" width="2.6" height="2.6"/><rect x="2514.4" y="970.1" width="2.6" height="2.6"/><rect x="2526.7" y="970.1" width="2.6" height="2.6"/><rect x="2538.9" y="970.1" width="2.6" height="2.6"/><rect x="2551.2" y="970.1" width="2.6" height="2.6"/><rect x="2563.5" y="970.1" width="2.6" height="2.6"/><rect x="2575.8" y="970.1" width="2.6" height="2.6"/><rect x="2588.0" y="970.1" width="2.6" height="2.6"/><rect x="2600.3" y="970.1" width="2.6" height="2.6"/><rect x="2612.6" y="970.1" width="2.6" height="2.6"/><rect x="2624.9" y="970.1" width="2.6" height="2.6"/><rect x="2637.1" y="970.1" width="2.6" height="2.6"/><rect x="2649.4" y="970.1" width="2.6" height="2.6"/><rect x="2661.7" y="970.1" width="2.6" height="2.6"/><rect x="2673.9" y="970.1" width="2.6" height="2.6"/><rect x="2686.2" y="970.1" width="2.6" height="2.6"/><rect x="2698.5" y="970.1" width="2.6" height="2.6"/><rect x="2710.8" y="970.1" width="2.6" height="2.6"/><rect x="2723.0" y="970.1" width="2.6" height="2.6"/><rect x="2735.3" y="970.1" width="2.6" height="2.6"/><rect x="2747.6" y="970.1" width="2.6" height="2.6"/><rect x="2759.9" y="970.1" width="2.6" height="2.6"/><rect x="2772.1" y="970.1" width="2.6" height="2.6"/><rect x="2784.4" y="970.1" width="2.6" height="2.6"/><rect x="2796.7" y="970.1" width="2.6" height="2.6"/><rect x="2809.0" y="970.1" width="2.6" height="2.6"/><rect x="2821.2" y="970.1" width="2.6" height="2.6"/><rect x="2833.5" y="970.1" width="2.6" height="2.6"/><rect x="2845.8" y="970.1" width="2.6" height="2.6"/><rect x="2858.0" y="970.1" width="2.6" height="2.6"/><rect x="2870.3" y="970.1" width="2.6" height="2.6"/><rect x="1778.0" y="982.4" width="2.6" height="2.6"/><rect x="1900.7" y="982.4" width="2.6" height="2.6"/><rect x="2023.5" y="982.4" width="2.6" height="2.6"/><rect x="2146.2" y="982.4" width="2.6" height="2.6"/><rect x="2268.9" y="982.4" width="2.6" height="2.6"/><rect x="2391.7" y="982.4" width="2.6" height="2.6"/><rect x="2514.4" y="982.4" width="2.6" height="2.6"/><rect x="2637.1" y="982.4" width="2.6" height="2.6"/><rect x="2759.9" y="982.4" width="2.6" height="2.6"/><rect x="1778.0" y="994.7" width="2.6" height="2.6"/><rect x="1900.7" y="994.7" width="2.6" height="2.6"/><rect x="2023.5" y="994.7" width="2.6" height="2.6"/><rect x="2146.2" y="994.7" width="2.6" height="2.6"/><rect x="2268.9" y="994.7" width="2.6" height="2.6"/><rect x="2391.7" y="994.7" width="2.6" height="2.6"/><rect x="2514.4" y="994.7" width="2.6" height="2.6"/><rect x="2637.1" y="994.7" width="2.6" height="2.6"/><rect x="2759.9" y="994.7" width="2.6" height="2.6"/><rect x="1778.0" y="1009.5" width="2.6" height="2.6"/><rect x="1900.7" y="1009.5" width="2.6" height="2.6"/><rect x="2023.5" y="1009.5" width="2.6" height="2.6"/><rect x="2146.2" y="1009.5" width="2.6" height="2.6"/><rect x="2268.9" y="1009.5" width="2.6" height="2.6"/><rect x="2391.7" y="1009.5" width="2.6" height="2.6"/><rect x="2514.4" y="1009.5" width="2.6" height="2.6"/><rect x="2637.1" y="1009.5" width="2.6" height="2.6"/><rect x="2759.9" y="1009.5" width="2.6" height="2.6"/><rect x="1778.0" y="1021.8" width="2.6" height="2.6"/><rect x="1900.7" y="1021.8" width="2.6" height="2.6"/><rect x="2023.5" y="1021.8" width="2.6" height="2.6"/><rect x="2146.2" y="1021.8" width="2.6" height="2.6"/><rect x="2268.9" y="1021.8" width="2.6" height="2.6"/><rect x="2391.7" y="1021.8" width="2.6" height="2.6"/><rect x="2514.4" y="1021.8" width="2.6" height="2.6"/><rect x="2637.1" y="1021.8" width="2.6" height="2.6"/><rect x="2759.9" y="1021.8" width="2.6" height="2.6"/><rect x="1667.5" y="1036.6" width="2.6" height="2.6"/><rect x="1679.8" y="1036.6" width="2.6" height="2.6"/><rect x="1692.1" y="1036.6" width="2.6" height="2.6"/><rect x="1704.3" y="1036.6" width="2.6" height="2.6"/><rect x="1716.6" y="1036.6" width="2.6" height="2.6"/><rect x="1728.9" y="1036.6" width="2.6" height="2.6"/><rect x="1741.2" y="1036.6" width="2.6" height="2.6"/><rect x="1753.4" y="1036.6" width="2.6" height="2.6"/><rect x="1765.7" y="1036.6" width="2.6" height="2.6"/><rect x="1778.0" y="1036.6" width="2.6" height="2.6"/><rect x="1790.3" y="1036.6" width="2.6" height="2.6"/><rect x="1802.5" y="1036.6" width="2.6" height="2.6"/><rect x="1814.8" y="1036.6" width="2.6" height="2.6"/><rect x="1827.1" y="1036.6" width="2.6" height="2.6"/><rect x="1839.3" y="1036.6" width="2.6" height="2.6"/><rect x="1851.6" y="1036.6" width="2.6" height="2.6"/><rect x="1863.9" y="1036.6" width="2.6" height="2.6"/><rect x="1876.2" y="1036.6" width="2.6" height="2.6"/><rect x="1888.4" y="1036.6" width="2.6" height="2.6"/><rect x="1900.7" y="1036.6" width="2.6" height="2.6"/><rect x="1913.0" y="1036.6" width="2.6" height="2.6"/><rect x="1925.3" y="1036.6" width="2.6" height="2.6"/><rect x="1937.5" y="1036.6" width="2.6" height="2.6"/><rect x="1949.8" y="1036.6" width="2.6" height="2.6"/><rect x="1962.1" y="1036.6" width="2.6" height="2.6"/><rect x="1974.4" y="1036.6" width="2.6" height="2.6"/><rect x="1986.6" y="1036.6" width="2.6" height="2.6"/><rect x="1998.9" y="1036.6" width="2.6" height="2.6"/><rect x="2011.2" y="1036.6" width="2.6" height="2.6"/><rect x="2023.5" y="1036.6" width="2.6" height="2.6"/><rect x="2035.7" y="1036.6" width="2.6" height="2.6"/><rect x="2048.0" y="1036.6" width="2.6" height="2.6"/><rect x="2060.3" y="1036.6" width="2.6" height="2.6"/><rect x="2072.5" y="1036.6" width="2.6" height="2.6"/><rect x="2084.8" y="1036.6" width="2.6" height="2.6"/><rect x="2097.1" y="1036.6" width="2.6" height="2.6"/><rect x="2109.4" y="1036.6" width="2.6" height="2.6"/><rect x="2121.6" y="1036.6" width="2.6" height="2.6"/><rect x="2133.9" y="1036.6" width="2.6" height="2.6"/><rect x="2146.2" y="1036.6" width="2.6" height="2.6"/><rect x="2158.5" y="1036.6" width="2.6" height="2.6"/><rect x="2170.7" y="1036.6" width="2.6" height="2.6"/><rect x="2183.0" y="1036.6" width="2.6" height="2.6"/><rect x="2195.3" y="1036.6" width="2.6" height="2.6"/><rect x="2207.6" y="1036.6" width="2.6" height="2.6"/><rect x="2219.8" y="1036.6" width="2.6" height="2.6"/><rect x="2232.1" y="1036.6" width="2.6" height="2.6"/><rect x="2244.4" y="1036.6" width="2.6" height="2.6"/><rect x="2256.6" y="1036.6" width="2.6" height="2.6"/><rect x="2268.9" y="1036.6" width="2.6" height="2.6"/><rect x="2281.2" y="1036.6" width="2.6" height="2.6"/><rect x="2293.5" y="1036.6" width="2.6" height="2.6"/><rect x="2305.7" y="1036.6" width="2.6" height="2.6"/><rect x="2318.0" y="1036.6" width="2.6" height="2.6"/><rect x="2330.3" y="1036.6" width="2.6" height="2.6"/><rect x="2342.6" y="1036.6" width="2.6" height="2.6"/><rect x="2354.8" y="1036.6" width="2.6" height="2.6"/><rect x="2367.1" y="1036.6" width="2.6" height="2.6"/><rect x="2379.4" y="1036.6" width="2.6" height="2.6"/><rect x="2391.7" y="1036.6" width="2.6" height="2.6"/><rect x="2403.9" y="1036.6" width="2.6" height="2.6"/><rect x="2416.2" y="1036.6" width="2.6" height="2.6"/><rect x="2428.5" y="1036.6" width="2.6" height="2.6"/><rect x="2440.8" y="1036.6" width="2.6" height="2.6"/><rect x="2453.0" y="1036.6" width="2.6" height="2.6"/><rect x="2465.3" y="1036.6" width="2.6" height="2.6"/><rect x="2477.6" y="1036.6" width="2.6" height="2.6"/><rect x="2489.8" y="1036.6" width="2.6" height="2.6"/><rect x="2502.1" y="1036.6" width="2.6" height="2.6"/><rect x="2514.4" y="1036.6" width="2.6" height="2.6"/><rect x="2526.7" y="1036.6" width="2.6" height="2.6"/><rect x="2538.9" y="1036.6" width="2.6" height="2.6"/><rect x="2551.2" y="1036.6" width="2.6" height="2.6"/><rect x="2563.5" y="1036.6" width="2.6" height="2.6"/><rect x="2575.8" y="1036.6" width="2.6" height="2.6"/><rect x="2588.0" y="1036.6" width="2.6" height="2.6"/><rect x="2600.3" y="1036.6" width="2.6" height="2.6"/><rect x="2612.6" y="1036.6" width="2.6" height="2.6"/><rect x="2624.9" y="1036.6" width="2.6" height="2.6"/><rect x="2637.1" y="1036.6" width="2.6" height="2.6"/><rect x="2649.4" y="1036.6" width="2.6" height="2.6"/><rect x="2661.7" y="1036.6" width="2.6" height="2.6"/><rect x="2673.9" y="1036.6" width="2.6" height="2.6"/><rect x="2686.2" y="1036.6" width="2.6" height="2.6"/><rect x="2698.5" y="1036.6" width="2.6" height="2.6"/><rect x="2710.8" y="1036.6" width="2.6" height="2.6"/><rect x="2723.0" y="1036.6" width="2.6" height="2.6"/><rect x="2735.3" y="1036.6" width="2.6" height="2.6"/><rect x="2747.6" y="1036.6" width="2.6" height="2.6"/><rect x="2759.9" y="1036.6" width="2.6" height="2.6"/><rect x="2772.1" y="1036.6" width="2.6" height="2.6"/><rect x="2784.4" y="1036.6" width="2.6" height="2.6"/><rect x="2796.7" y="1036.6" width="2.6" height="2.6"/><rect x="2809.0" y="1036.6" width="2.6" height="2.6"/><rect x="2821.2" y="1036.6" width="2.6" height="2.6"/><rect x="2833.5" y="1036.6" width="2.6" height="2.6"/><rect x="2845.8" y="1036.6" width="2.6" height="2.6"/><rect x="2858.0" y="1036.6" width="2.6" height="2.6"/><rect x="2870.3" y="1036.6" width="2.6" height="2.6"/><rect x="1778.0" y="1048.9" width="2.6" height="2.6"/><rect x="1900.7" y="1048.9" width="2.6" height="2.6"/><rect x="2023.5" y="1048.9" width="2.6" height="2.6"/><rect x="2146.2" y="1048.9" width="2.6" height="2.6"/><rect x="2268.9" y="1048.9" width="2.6" height="2.6"/><rect x="2391.7" y="1048.9" width="2.6" height="2.6"/><rect x="2514.4" y="1048.9" width="2.6" height="2.6"/><rect x="2637.1" y="1048.9" width="2.6" height="2.6"/><rect x="2759.9" y="1048.9" width="2.6" height="2.6"/><rect x="1778.0" y="1061.2" width="2.6" height="2.6"/><rect x="1900.7" y="1061.2" width="2.6" height="2.6"/><rect x="2023.5" y="1061.2" width="2.6" height="2.6"/><rect x="2146.2" y="1061.2" width="2.6" height="2.6"/><rect x="2268.9" y="1061.2" width="2.6" height="2.6"/><rect x="2391.7" y="1061.2" width="2.6" height="2.6"/><rect x="2514.4" y="1061.2" width="2.6" height="2.6"/><rect x="2637.1" y="1061.2" width="2.6" height="2.6"/><rect x="2759.9" y="1061.2" width="2.6" height="2.6"/><rect x="1778.0" y="1076.0" width="2.6" height="2.6"/><rect x="1900.7" y="1076.0" width="2.6" height="2.6"/><rect x="2023.5" y="1076.0" width="2.6" height="2.6"/><rect x="2146.2" y="1076.0" width="2.6" height="2.6"/><rect x="2268.9" y="1076.0" width="2.6" height="2.6"/><rect x="2391.7" y="1076.0" width="2.6" height="2.6"/><rect x="2514.4" y="1076.0" width="2.6" height="2.6"/><rect x="2637.1" y="1076.0" width="2.6" height="2.6"/><rect x="2759.9" y="1076.0" width="2.6" height="2.6"/><rect x="1778.0" y="1088.3" width="2.6" height="2.6"/><rect x="1900.7" y="1088.3" width="2.6" height="2.6"/><rect x="2023.5" y="1088.3" width="2.6" height="2.6"/><rect x="2146.2" y="1088.3" width="2.6" height="2.6"/><rect x="2268.9" y="1088.3" width="2.6" height="2.6"/><rect x="2391.7" y="1088.3" width="2.6" height="2.6"/><rect x="2514.4" y="1088.3" width="2.6" height="2.6"/><rect x="2637.1" y="1088.3" width="2.6" height="2.6"/><rect x="2759.9" y="1088.3" width="2.6" height="2.6"/><rect x="1667.5" y="1103.1" width="2.6" height="2.6"/><rect x="1679.8" y="1103.1" width="2.6" height="2.6"/><rect x="1692.1" y="1103.1" width="2.6" height="2.6"/><rect x="1704.3" y="1103.1" width="2.6" height="2.6"/><rect x="1716.6" y="1103.1" width="2.6" height="2.6"/><rect x="1728.9" y="1103.1" width="2.6" height="2.6"/><rect x="1741.2" y="1103.1" width="2.6" height="2.6"/><rect x="1753.4" y="1103.1" width="2.6" height="2.6"/><rect x="1765.7" y="1103.1" width="2.6" height="2.6"/><rect x="1778.0" y="1103.1" width="2.6" height="2.6"/><rect x="1790.3" y="1103.1" width="2.6" height="2.6"/><rect x="1802.5" y="1103.1" width="2.6" height="2.6"/><rect x="1814.8" y="1103.1" width="2.6" height="2.6"/><rect x="1827.1" y="1103.1" width="2.6" height="2.6"/><rect x="1839.3" y="1103.1" width="2.6" height="2.6"/><rect x="1851.6" y="1103.1" width="2.6" height="2.6"/><rect x="1863.9" y="1103.1" width="2.6" height="2.6"/><rect x="1876.2" y="1103.1" width="2.6" height="2.6"/><rect x="1888.4" y="1103.1" width="2.6" height="2.6"/><rect x="1900.7" y="1103.1" width="2.6" height="2.6"/><rect x="1913.0" y="1103.1" width="2.6" height="2.6"/><rect x="1925.3" y="1103.1" width="2.6" height="2.6"/><rect x="1937.5" y="1103.1" width="2.6" height="2.6"/><rect x="1949.8" y="1103.1" width="2.6" height="2.6"/><rect x="1962.1" y="1103.1" width="2.6" height="2.6"/><rect x="1974.4" y="1103.1" width="2.6" height="2.6"/><rect x="1986.6" y="1103.1" width="2.6" height="2.6"/><rect x="1998.9" y="1103.1" width="2.6" height="2.6"/><rect x="2011.2" y="1103.1" width="2.6" height="2.6"/><rect x="2023.5" y="1103.1" width="2.6" height="2.6"/><rect x="2035.7" y="1103.1" width="2.6" height="2.6"/><rect x="2048.0" y="1103.1" width="2.6" height="2.6"/><rect x="2060.3" y="1103.1" width="2.6" height="2.6"/><rect x="2072.5" y="1103.1" width="2.6" height="2.6"/><rect x="2084.8" y="1103.1" width="2.6" height="2.6"/><rect x="2097.1" y="1103.1" width="2.6" height="2.6"/><rect x="2109.4" y="1103.1" width="2.6" height="2.6"/><rect x="2121.6" y="1103.1" width="2.6" height="2.6"/><rect x="2133.9" y="1103.1" width="2.6" height="2.6"/><rect x="2146.2" y="1103.1" width="2.6" height="2.6"/><rect x="2158.5" y="1103.1" width="2.6" height="2.6"/><rect x="2170.7" y="1103.1" width="2.6" height="2.6"/><rect x="2183.0" y="1103.1" width="2.6" height="2.6"/><rect x="2195.3" y="1103.1" width="2.6" height="2.6"/><rect x="2207.6" y="1103.1" width="2.6" height="2.6"/><rect x="2219.8" y="1103.1" width="2.6" height="2.6"/><rect x="2232.1" y="1103.1" width="2.6" height="2.6"/><rect x="2244.4" y="1103.1" width="2.6" height="2.6"/><rect x="2256.6" y="1103.1" width="2.6" height="2.6"/><rect x="2268.9" y="1103.1" width="2.6" height="2.6"/><rect x="2281.2" y="1103.1" width="2.6" height="2.6"/><rect x="2293.5" y="1103.1" width="2.6" height="2.6"/><rect x="2305.7" y="1103.1" width="2.6" height="2.6"/><rect x="2318.0" y="1103.1" width="2.6" height="2.6"/><rect x="2330.3" y="1103.1" width="2.6" height="2.6"/><rect x="2342.6" y="1103.1" width="2.6" height="2.6"/><rect x="2354.8" y="1103.1" width="2.6" height="2.6"/><rect x="2367.1" y="1103.1" width="2.6" height="2.6"/><rect x="2379.4" y="1103.1" width="2.6" height="2.6"/><rect x="2391.7" y="1103.1" width="2.6" height="2.6"/><rect x="2403.9" y="1103.1" width="2.6" height="2.6"/><rect x="2416.2" y="1103.1" width="2.6" height="2.6"/><rect x="2428.5" y="1103.1" width="2.6" height="2.6"/><rect x="2440.8" y="1103.1" width="2.6" height="2.6"/><rect x="2453.0" y="1103.1" width="2.6" height="2.6"/><rect x="2465.3" y="1103.1" width="2.6" height="2.6"/><rect x="2477.6" y="1103.1" width="2.6" height="2.6"/><rect x="2489.8" y="1103.1" width="2.6" height="2.6"/><rect x="2502.1" y="1103.1" width="2.6" height="2.6"/><rect x="2514.4" y="1103.1" width="2.6" height="2.6"/><rect x="2526.7" y="1103.1" width="2.6" height="2.6"/><rect x="2538.9" y="1103.1" width="2.6" height="2.6"/><rect x="2551.2" y="1103.1" width="2.6" height="2.6"/><rect x="2563.5" y="1103.1" width="2.6" height="2.6"/><rect x="2575.8" y="1103.1" width="2.6" height="2.6"/><rect x="2588.0" y="1103.1" width="2.6" height="2.6"/><rect x="2600.3" y="1103.1" width="2.6" height="2.6"/><rect x="2612.6" y="1103.1" width="2.6" height="2.6"/><rect x="2624.9" y="1103.1" width="2.6" height="2.6"/><rect x="2637.1" y="1103.1" width="2.6" height="2.6"/><rect x="2649.4" y="1103.1" width="2.6" height="2.6"/><rect x="2661.7" y="1103.1" width="2.6" height="2.6"/><rect x="2673.9" y="1103.1" width="2.6" height="2.6"/><rect x="2686.2" y="1103.1" width="2.6" height="2.6"/><rect x="2698.5" y="1103.1" width="2.6" height="2.6"/><rect x="2710.8" y="1103.1" width="2.6" height="2.6"/><rect x="2723.0" y="1103.1" width="2.6" height="2.6"/><rect x="2735.3" y="1103.1" width="2.6" height="2.6"/><rect x="2747.6" y="1103.1" width="2.6" height="2.6"/><rect x="2759.9" y="1103.1" width="2.6" height="2.6"/><rect x="2772.1" y="1103.1" width="2.6" height="2.6"/><rect x="2784.4" y="1103.1" width="2.6" height="2.6"/><rect x="2796.7" y="1103.1" width="2.6" height="2.6"/><rect x="2809.0" y="1103.1" width="2.6" height="2.6"/><rect x="2821.2" y="1103.1" width="2.6" height="2.6"/><rect x="2833.5" y="1103.1" width="2.6" height="2.6"/><rect x="2845.8" y="1103.1" width="2.6" height="2.6"/><rect x="2858.0" y="1103.1" width="2.6" height="2.6"/><rect x="2870.3" y="1103.1" width="2.6" height="2.6"/><rect x="1778.0" y="1115.4" width="2.6" height="2.6"/><rect x="1900.7" y="1115.4" width="2.6" height="2.6"/><rect x="2023.5" y="1115.4" width="2.6" height="2.6"/><rect x="2146.2" y="1115.4" width="2.6" height="2.6"/><rect x="2268.9" y="1115.4" width="2.6" height="2.6"/><rect x="2391.7" y="1115.4" width="2.6" height="2.6"/><rect x="2514.4" y="1115.4" width="2.6" height="2.6"/><rect x="2637.1" y="1115.4" width="2.6" height="2.6"/><rect x="2759.9" y="1115.4" width="2.6" height="2.6"/><rect x="1778.0" y="1127.7" width="2.6" height="2.6"/><rect x="1900.7" y="1127.7" width="2.6" height="2.6"/><rect x="2023.5" y="1127.7" width="2.6" height="2.6"/><rect x="2146.2" y="1127.7" width="2.6" height="2.6"/><rect x="2268.9" y="1127.7" width="2.6" height="2.6"/><rect x="2391.7" y="1127.7" width="2.6" height="2.6"/><rect x="2514.4" y="1127.7" width="2.6" height="2.6"/><rect x="2637.1" y="1127.7" width="2.6" height="2.6"/><rect x="2759.9" y="1127.7" width="2.6" height="2.6"/><rect x="1778.0" y="1142.5" width="2.6" height="2.6"/><rect x="1900.7" y="1142.5" width="2.6" height="2.6"/><rect x="2023.5" y="1142.5" width="2.6" height="2.6"/><rect x="2146.2" y="1142.5" width="2.6" height="2.6"/><rect x="2268.9" y="1142.5" width="2.6" height="2.6"/><rect x="2391.7" y="1142.5" width="2.6" height="2.6"/><rect x="2514.4" y="1142.5" width="2.6" height="2.6"/><rect x="2637.1" y="1142.5" width="2.6" height="2.6"/><rect x="2759.9" y="1142.5" width="2.6" height="2.6"/><rect x="1778.0" y="1154.8" width="2.6" height="2.6"/><rect x="1900.7" y="1154.8" width="2.6" height="2.6"/><rect x="2023.5" y="1154.8" width="2.6" height="2.6"/><rect x="2146.2" y="1154.8" width="2.6" height="2.6"/><rect x="2268.9" y="1154.8" width="2.6" height="2.6"/><rect x="2391.7" y="1154.8" width="2.6" height="2.6"/><rect x="2514.4" y="1154.8" width="2.6" height="2.6"/><rect x="2637.1" y="1154.8" width="2.6" height="2.6"/><rect x="2759.9" y="1154.8" width="2.6" height="2.6"/></g>
<text transform="translate(1661.09,658.58) scale(0.2293,0.2289)" font-family="Liberation Mono, monospace" font-size="100.00" fill="#ffff00" xml:space="preserve" >Bar</text>
<text transform="translate(1709.39,658.58) scale(0.3041,0.2289)" font-family="Liberation Mono, monospace" font-size="100.00" fill="#ffff00" xml:space="preserve" >U</text>
<text transform="translate(1738.31,658.80) scale(0.1648,0.2323)" font-family="Liberation Mono, monospace" font-size="100.00" fill="#ffff00" xml:space="preserve" >1</text>
<text transform="translate(1817.92,658.60) scale(0.2052,0.2083)" font-family="Liberation Mono, monospace" font-size="100.00" fill="#ffff00" xml:space="preserve" >1.000kV</text>
<text transform="translate(1999.68,655.95) scale(0.2108,0.1856)" font-family="Liberation Mono, monospace" font-size="100.00" fill="#ffff00" xml:space="preserve" >(log Scale)</text>
<text transform="translate(2246.76,653.78) scale(0.2238,0.1212)" font-family="Liberation Mono, monospace" font-size="100.00" fill="#ffff00" xml:space="preserve" >(</text>
<text transform="translate(2286.87,658.80) scale(0.1564,0.2323)" font-family="Liberation Mono, monospace" font-size="100.00" fill="#ffff00" xml:space="preserve" >1</text>
<text transform="translate(2301.25,660.97) scale(0.4754,0.2944)" font-family="Liberation Mono, monospace" font-size="100.00" fill="#ffff00" xml:space="preserve" >-</text>
<text transform="translate(2342.84,658.80) scale(0.2358,0.2287)" font-family="Liberation Mono, monospace" font-size="100.00" fill="#ffff00" xml:space="preserve" >21</text>
<text transform="translate(2370.89,653.78) scale(0.2201,0.1212)" font-family="Liberation Mono, monospace" font-size="100.00" fill="#ffff00" xml:space="preserve" >)</text>
<text transform="translate(1661.09,895.38) scale(0.2293,0.2274)" font-family="Liberation Mono, monospace" font-size="100.00" fill="#ffff00" xml:space="preserve" >Bar</text>
<text transform="translate(1709.39,895.38) scale(0.3041,0.2274)" font-family="Liberation Mono, monospace" font-size="100.00" fill="#ffff00" xml:space="preserve" >U</text>
<text transform="translate(1738.31,895.60) scale(0.1648,0.2308)" font-family="Liberation Mono, monospace" font-size="100.00" fill="#ffff00" xml:space="preserve" >1</text>
<text transform="translate(1817.87,895.38) scale(0.2117,0.2240)" font-family="Liberation Mono, monospace" font-size="100.00" fill="#ffff00" xml:space="preserve" >100.0m</text>
<text transform="translate(1661.09,923.58) scale(0.2293,0.2289)" font-family="Liberation Mono, monospace" font-size="100.00" fill="#00ff00" xml:space="preserve" >Bar</text>
<text transform="translate(1708.06,923.80) scale(0.3484,0.2323)" font-family="Liberation Mono, monospace" font-size="100.00" fill="#00ff00" xml:space="preserve" >I</text>
<text transform="translate(1738.31,923.80) scale(0.1648,0.2323)" font-family="Liberation Mono, monospace" font-size="100.00" fill="#00ff00" xml:space="preserve" >1</text>
<text transform="translate(1817.92,923.60) scale(0.2049,0.2083)" font-family="Liberation Mono, monospace" font-size="100.00" fill="#00ff00" xml:space="preserve" >1.000kA</text>
<text transform="translate(1999.68,920.95) scale(0.2108,0.1856)" font-family="Liberation Mono, monospace" font-size="100.00" fill="#00ff00" xml:space="preserve" >(log Scale)</text>
<text transform="translate(2246.76,918.78) scale(0.2238,0.1212)" font-family="Liberation Mono, monospace" font-size="100.00" fill="#00ff00" xml:space="preserve" >(</text>
<text transform="translate(2286.87,923.80) scale(0.1564,0.2323)" font-family="Liberation Mono, monospace" font-size="100.00" fill="#00ff00" xml:space="preserve" >1</text>
<text transform="translate(2301.25,925.97) scale(0.4754,0.2944)" font-family="Liberation Mono, monospace" font-size="100.00" fill="#00ff00" xml:space="preserve" >-</text>
<text transform="translate(2342.84,923.80) scale(0.2358,0.2287)" font-family="Liberation Mono, monospace" font-size="100.00" fill="#00ff00" xml:space="preserve" >21</text>
<text transform="translate(2370.89,918.78) scale(0.2201,0.1212)" font-family="Liberation Mono, monospace" font-size="100.00" fill="#00ff00" xml:space="preserve" >)</text>
<text transform="translate(1661.09,1160.38) scale(0.2293,0.2274)" font-family="Liberation Mono, monospace" font-size="100.00" fill="#00ff00" xml:space="preserve" >Bar</text>
<text transform="translate(1708.06,1160.60) scale(0.3484,0.2308)" font-family="Liberation Mono, monospace" font-size="100.00" fill="#00ff00" xml:space="preserve" >I</text>
<text transform="translate(1738.31,1160.60) scale(0.1648,0.2308)" font-family="Liberation Mono, monospace" font-size="100.00" fill="#00ff00" xml:space="preserve" >1</text>
<text transform="translate(1817.87,1160.38) scale(0.2117,0.2240)" font-family="Liberation Mono, monospace" font-size="100.00" fill="#00ff00" xml:space="preserve" >100.0m</text>
<rect x="1656.0" y="679.0" width="27.2" height="224.0" fill="#ffff00"/>
<rect x="1771.0" y="841.6" width="27.2" height="61.4" fill="#ffff00"/>
<rect x="1888.7" y="851.3" width="27.2" height="51.7" fill="#ffff00"/>
<rect x="2006.5" y="851.3" width="27.2" height="51.7" fill="#ffff00"/>
<rect x="2239.7" y="854.1" width="27.2" height="48.9" fill="#ffff00"/>
<rect x="2357.5" y="861.0" width="27.2" height="42.0" fill="#ffff00"/>
<rect x="2472.9" y="892.9" width="27.2" height="10.1" fill="#ffff00"/>
<rect x="2590.6" y="881.0" width="27.2" height="22.0" fill="#ffff00"/>
<rect x="2708.3" y="886.0" width="27.2" height="17.0" fill="#ffff00"/>
<rect x="1656.0" y="984.2" width="27.2" height="185.1" fill="#00ff00"/>
<rect x="1712.0" y="1137.1" width="27.2" height="32.2" fill="#00ff00"/>
<rect x="1888.7" y="1097.2" width="27.2" height="72.1" fill="#00ff00"/>
<rect x="2006.5" y="1114.9" width="27.2" height="54.4" fill="#00ff00"/>
<rect x="2239.8" y="1132.2" width="27.2" height="37.1" fill="#00ff00"/>
<rect x="2357.8" y="1146.8" width="27.2" height="22.5" fill="#00ff00"/>
<rect x="1657.2" y="639.2" width="1229.1" height="530.3" fill="none" stroke="#d4d4d4" stroke-width="2.5"/>
<rect x="1656.0" y="903.0" width="1231.5" height="2.5" fill="#d4d4d4"/>
</g>
</svg></body></html>
